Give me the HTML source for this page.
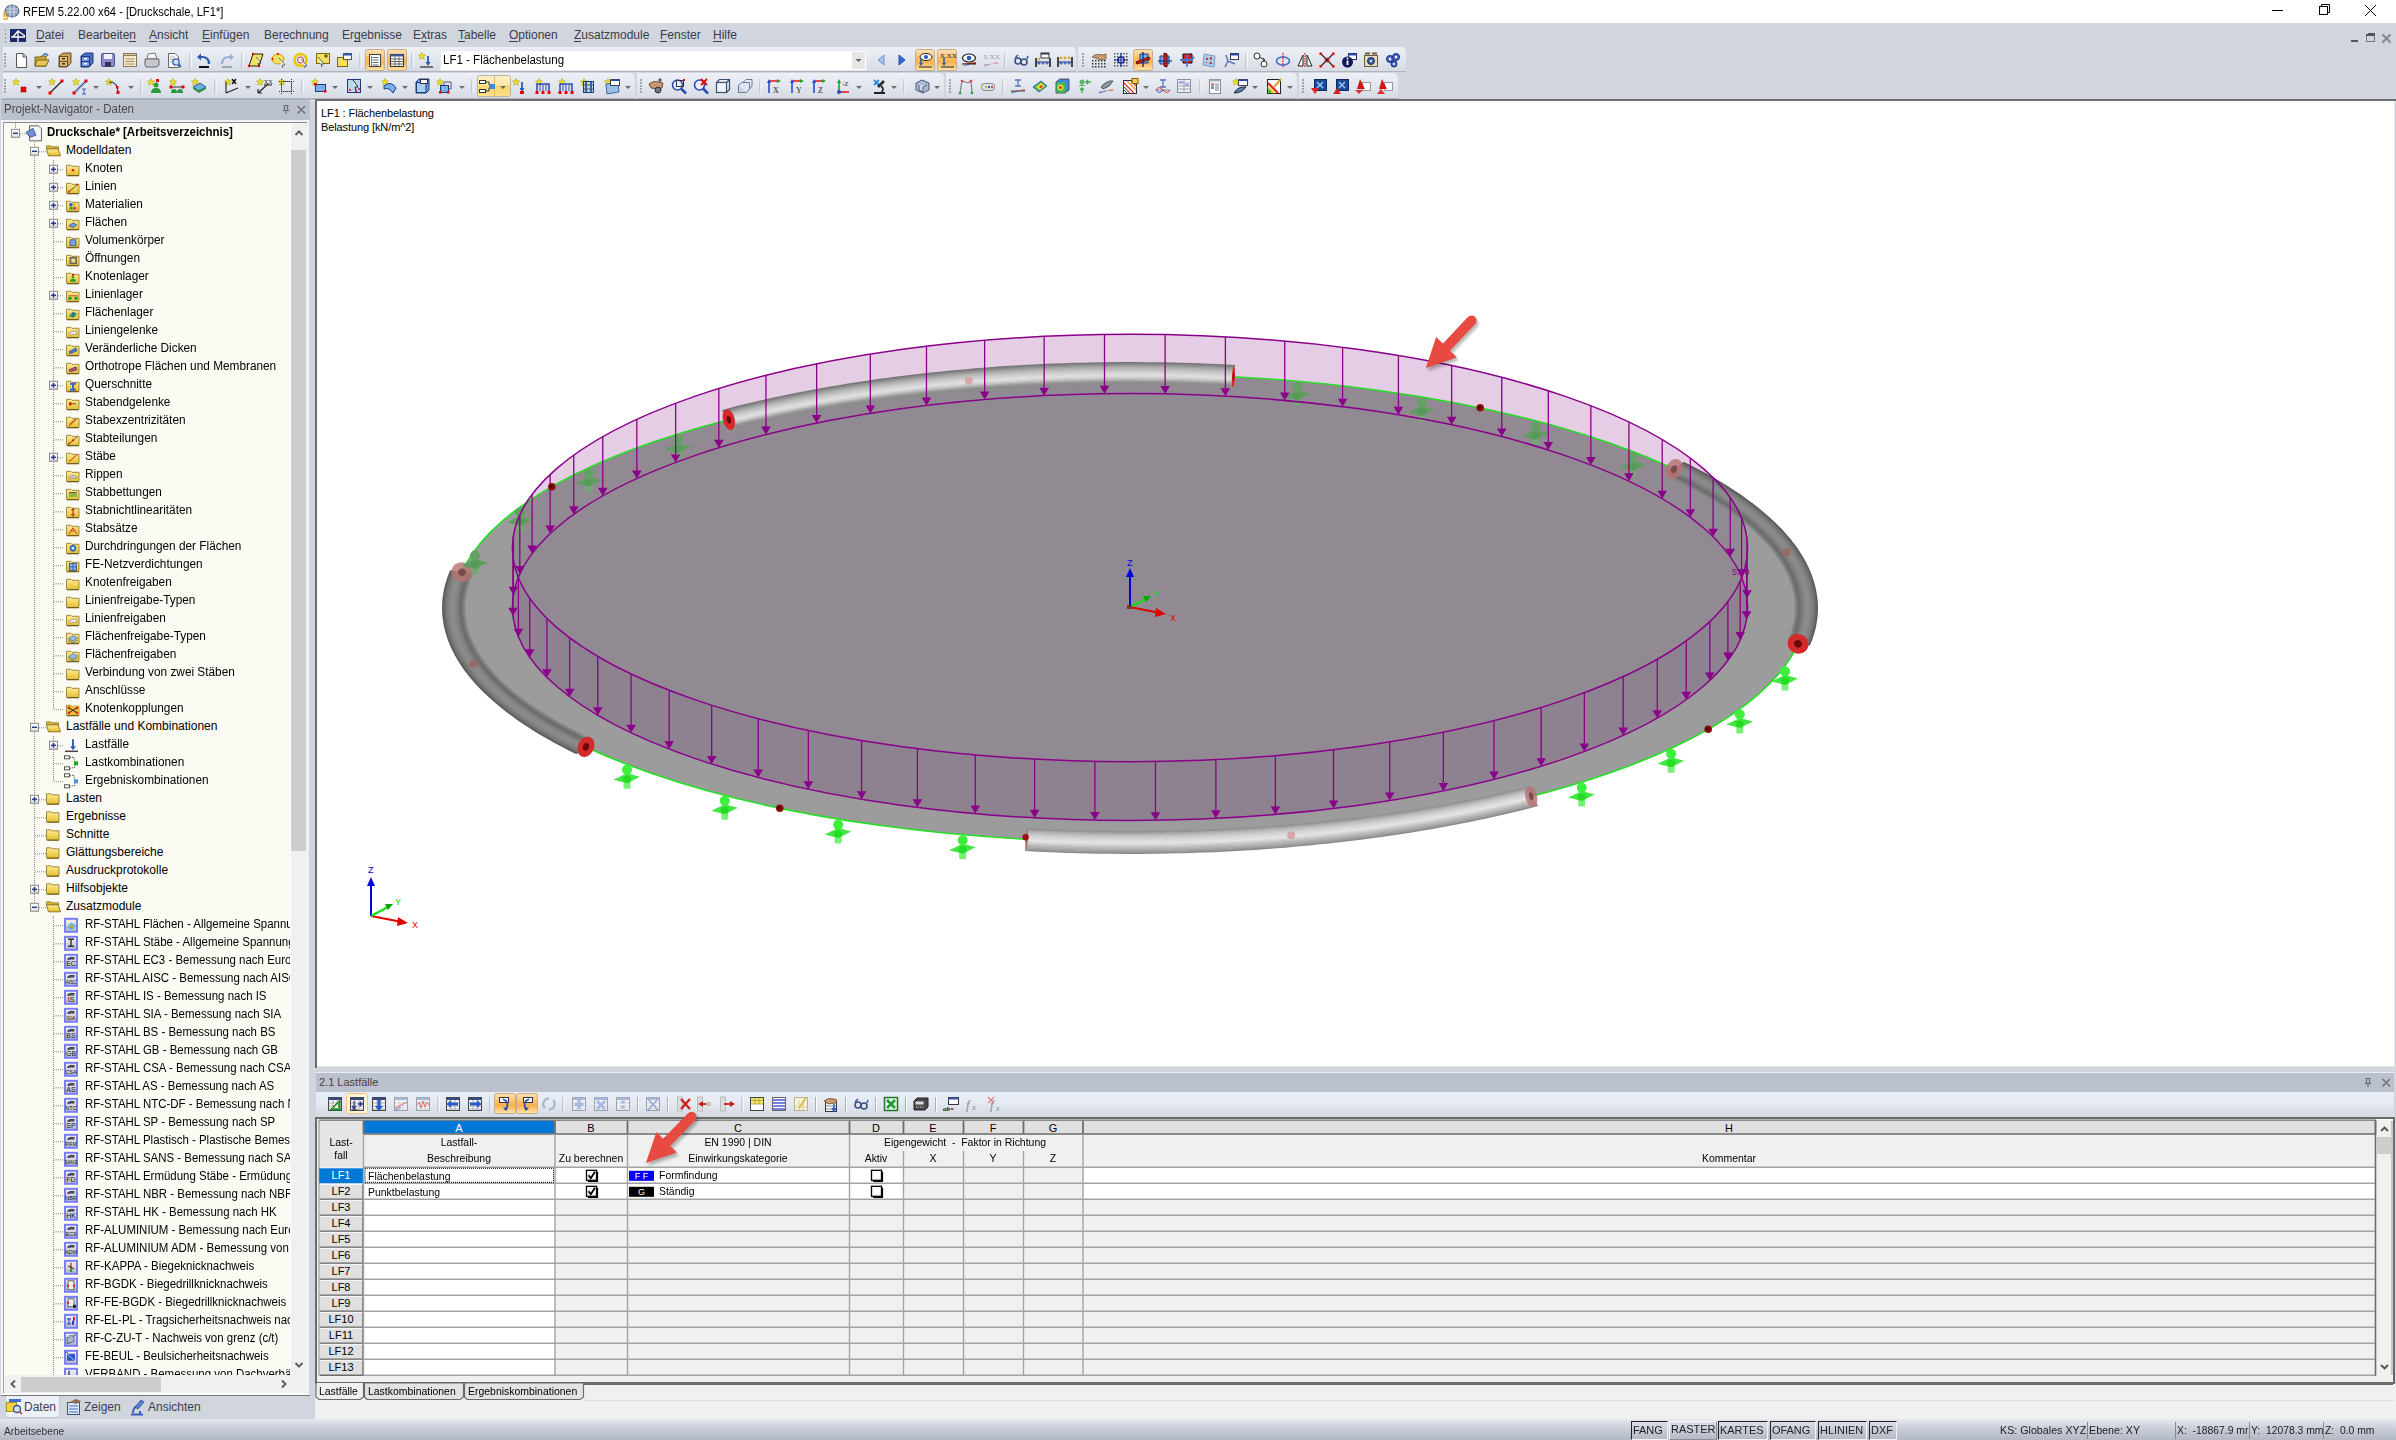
<!DOCTYPE html>
<html><head><meta charset="utf-8"><title>RFEM</title>
<style>
html,body{margin:0;padding:0;}
body{width:2396px;height:1440px;position:relative;overflow:hidden;background:#d0d5de;font-family:"Liberation Sans", sans-serif;}
.t{position:absolute;white-space:nowrap;}
svg{position:absolute;}
</style></head><body>
<div style="position:absolute;left:0px;top:0px;width:2396px;height:23px;background:#fff"></div><svg style="left:2px;top:3px" width="18" height="18" viewBox="0 0 18 18"><ellipse cx="10" cy="8" rx="7" ry="6" fill="#8aa0c0" stroke="#4a5a78" stroke-width="1"/><path d="M4 6 L16 6 M4 9 L16 9 M8 2 L8 14 M12 2 L12 14" stroke="#dfe6f0" stroke-width="0.8"/><text x="1" y="17" font-size="10" font-weight="bold" fill="#d9a520" font-family="Liberation Sans">5</text></svg><div class="t" style="left:23.00px;top:5.84px;font-size:12px;line-height:12px;color:#000;transform:scaleX(0.93);transform-origin:left">RFEM 5.22.00 x64 - [Druckschale, LF1*]</div><svg style="left:2260px;top:0px" width="136" height="23" viewBox="0 0 136 23"><path d="M12 10.5 H23" stroke="#000" stroke-width="1"/><rect x="59.5" y="6.5" width="8" height="8" fill="none" stroke="#000"/><path d="M61.5 6.5 V4.5 H69.5 V12.5 H67.5" fill="none" stroke="#000"/><path d="M105 5 L116 16 M116 5 L105 16" stroke="#000" stroke-width="1"/></svg><div style="position:absolute;left:0px;top:23px;width:2396px;height:24px;background:#d0d5de"></div><svg style="left:3px;top:28px" width="30" height="16" viewBox="0 0 30 16"><rect x="2" y="1" width="1" height="2" fill="#99a"/><rect x="2" y="5" width="1" height="2" fill="#99a"/><rect x="2" y="9" width="1" height="2" fill="#99a"/><rect x="2" y="13" width="1" height="2" fill="#99a"/><rect x="7" y="1" width="16" height="13" fill="#1c2a6a"/><path d="M8 9 H22 M15 3 V14 M10 9 L15 3 L22 8" stroke="#fff" stroke-width="1.3" fill="none"/></svg><div class="t" style="left:36.00px;top:28.84px;font-size:12px;line-height:12px;color:#3b3b4a;">Datei</div><div class="t" style="left:78.00px;top:28.84px;font-size:12px;line-height:12px;color:#3b3b4a;">Bearbeiten</div><div class="t" style="left:149.00px;top:28.84px;font-size:12px;line-height:12px;color:#3b3b4a;">Ansicht</div><div class="t" style="left:202.00px;top:28.84px;font-size:12px;line-height:12px;color:#3b3b4a;">Einfügen</div><div class="t" style="left:264.00px;top:28.84px;font-size:12px;line-height:12px;color:#3b3b4a;">Berechnung</div><div class="t" style="left:342.00px;top:28.84px;font-size:12px;line-height:12px;color:#3b3b4a;">Ergebnisse</div><div class="t" style="left:413.00px;top:28.84px;font-size:12px;line-height:12px;color:#3b3b4a;">Extras</div><div class="t" style="left:458.00px;top:28.84px;font-size:12px;line-height:12px;color:#3b3b4a;">Tabelle</div><div class="t" style="left:509.00px;top:28.84px;font-size:12px;line-height:12px;color:#3b3b4a;">Optionen</div><div class="t" style="left:574.00px;top:28.84px;font-size:12px;line-height:12px;color:#3b3b4a;">Zusatzmodule</div><div class="t" style="left:660.00px;top:28.84px;font-size:12px;line-height:12px;color:#3b3b4a;">Fenster</div><div class="t" style="left:713.00px;top:28.84px;font-size:12px;line-height:12px;color:#3b3b4a;">Hilfe</div><div style="position:absolute;left:36.0px;top:41px;width:8.7px;height:1px;background:#3b3b4a"></div><div style="position:absolute;left:129.4px;top:41px;width:6.7px;height:1px;background:#3b3b4a"></div><div style="position:absolute;left:149.0px;top:41px;width:8.0px;height:1px;background:#3b3b4a"></div><div style="position:absolute;left:202.0px;top:41px;width:8.0px;height:1px;background:#3b3b4a"></div><div style="position:absolute;left:278.7px;top:41px;width:4.0px;height:1px;background:#3b3b4a"></div><div style="position:absolute;left:354.0px;top:41px;width:6.7px;height:1px;background:#3b3b4a"></div><div style="position:absolute;left:421.0px;top:41px;width:6.0px;height:1px;background:#3b3b4a"></div><div style="position:absolute;left:458.0px;top:41px;width:7.3px;height:1px;background:#3b3b4a"></div><div style="position:absolute;left:509.0px;top:41px;width:9.3px;height:1px;background:#3b3b4a"></div><div style="position:absolute;left:574.0px;top:41px;width:7.3px;height:1px;background:#3b3b4a"></div><div style="position:absolute;left:660.0px;top:41px;width:7.3px;height:1px;background:#3b3b4a"></div><div style="position:absolute;left:713.0px;top:41px;width:8.7px;height:1px;background:#3b3b4a"></div><svg style="left:2345px;top:30px" width="50" height="16" viewBox="2345 30 50 16"><rect x="2351" y="40" width="7" height="2" fill="#555"/><rect x="2366.5" y="35.5" width="8" height="6" fill="none" stroke="#777"/><rect x="2366" y="34" width="9" height="2" fill="#555"/><rect x="2368" y="33" width="7" height="1.5" fill="#555"/><path d="M2382.5 34.5 L2390.5 42.5 M2390.5 34.5 L2382.5 42.5" stroke="#888" stroke-width="2"/></svg><div style="position:absolute;left:3px;top:47px;width:1073px;height:25px;background:linear-gradient(#edf0f6,#e2e6ee 50%,#d6dae3);border-radius:0 5px 0 0;box-shadow:inset 0 -1px 0 #aeb4be"></div><div style="position:absolute;left:1078px;top:47px;width:328px;height:25px;background:linear-gradient(#edf0f6,#e2e6ee 50%,#d6dae3);border-radius:0 5px 0 0;box-shadow:inset 0 -1px 0 #aeb4be"></div><div style="position:absolute;left:3px;top:73px;width:632px;height:26px;background:linear-gradient(#edf0f6,#e2e6ee 50%,#d6dae3);border-radius:0 5px 0 0;box-shadow:inset 0 -1px 0 #aeb4be"></div><div style="position:absolute;left:637px;top:73px;width:307px;height:26px;background:linear-gradient(#edf0f6,#e2e6ee 50%,#d6dae3);border-radius:0 5px 0 0;box-shadow:inset 0 -1px 0 #aeb4be"></div><div style="position:absolute;left:946px;top:73px;width:351px;height:26px;background:linear-gradient(#edf0f6,#e2e6ee 50%,#d6dae3);border-radius:0 5px 0 0;box-shadow:inset 0 -1px 0 #aeb4be"></div><div style="position:absolute;left:1299px;top:73px;width:99px;height:26px;background:linear-gradient(#edf0f6,#e2e6ee 50%,#d6dae3);border-radius:0 5px 0 0;box-shadow:inset 0 -1px 0 #aeb4be"></div><div style="position:absolute;left:0px;top:99px;width:315px;height:1px;background:#a9afb9"></div><div style="position:absolute;left:0px;top:100px;width:315px;height:1px;background:#eef2f8"></div><svg style="left:0;top:44px" width="1420" height="56" viewBox="0 44 1420 56"><defs><linearGradient id="hlgrad" x1="0" y1="0" x2="0" y2="1"><stop offset="0" stop-color="#fde2b8"/><stop offset="0.45" stop-color="#fbbd62"/><stop offset="0.6" stop-color="#f9b24c"/><stop offset="1" stop-color="#fde6ae"/></linearGradient></defs><rect x="365.5" y="49.5" width="19" height="21" rx="2" fill="url(#hlgrad)" stroke="#c9ad86"/><rect x="387.5" y="49.5" width="19" height="21" rx="2" fill="url(#hlgrad)" stroke="#c9ad86"/><rect x="915.5" y="49.5" width="19" height="21" rx="2" fill="url(#hlgrad)" stroke="#c9ad86"/><rect x="937.5" y="49.5" width="19" height="21" rx="2" fill="url(#hlgrad)" stroke="#c9ad86"/><rect x="1133.5" y="49.5" width="19" height="21" rx="2" fill="url(#hlgrad)" stroke="#c9ad86"/><defs><linearGradient id="hlgrad2" x1="0" y1="0" x2="0" y2="1"><stop offset="0" stop-color="#fdf0c8"/><stop offset="0.45" stop-color="#fde6a8"/><stop offset="0.5" stop-color="#fcd46a"/><stop offset="1" stop-color="#fde08a"/></linearGradient></defs><rect x="477.5" y="75.5" width="33" height="21" rx="2" fill="url(#hlgrad2)" stroke="#b8b4a8"/><path d="M494.5 76 V96" stroke="#e8b860"/><g transform="translate(-3,52)"><rect x="7" y="1" width="2" height="2" fill="#a0a6b2"/><rect x="7" y="4" width="2" height="2" fill="#a0a6b2"/><rect x="7" y="7" width="2" height="2" fill="#a0a6b2"/><rect x="7" y="10" width="2" height="2" fill="#a0a6b2"/><rect x="7" y="13" width="2" height="2" fill="#a0a6b2"/></g><g transform="translate(13,52)"><path d="M3.5 1.5 H10 L13.5 5 V15.5 H3.5 Z" fill="#fff" stroke="#555"/><path d="M10 1.5 V5 H13.5" fill="none" stroke="#555"/></g><g transform="translate(34,52)"><path d="M1 5 H6 L7 4 H12 V14 H1 Z" fill="#c9a73a" stroke="#7a6010"/><path d="M3 8 H15 L12 14 H1 Z" fill="#e6c95a" stroke="#7a6010"/><path d="M9 3 Q12 0 14 4" stroke="#3a70c0" stroke-width="1.5" fill="none"/></g><g transform="translate(57,52)"><path d="M2 4 L6 1 H14 V11 L10 15 H2 Z" fill="#c8a060" stroke="#6a5020"/><rect x="2.5" y="4.5" width="8" height="5" fill="#e2bc7a" stroke="#6a5020"/><rect x="2.5" y="9.5" width="8" height="5" fill="#e2bc7a" stroke="#6a5020"/><rect x="5" y="6" width="3" height="1.5" fill="#333"/><rect x="5" y="11" width="3" height="1.5" fill="#333"/></g><g transform="translate(79,52)"><path d="M2 4 L6 1 H14 V11 L10 15 H2 Z" fill="#4a6fc0" stroke="#203a80"/><rect x="2.5" y="4.5" width="8" height="5" fill="#7a9ae0" stroke="#203a80"/><rect x="2.5" y="9.5" width="8" height="5" fill="#7a9ae0" stroke="#203a80"/><rect x="5" y="6" width="3" height="1.5" fill="#fff"/><rect x="5" y="11" width="3" height="1.5" fill="#fff"/></g><g transform="translate(100,52)"><rect x="1.5" y="1.5" width="13" height="13" rx="1" fill="#8a88c8" stroke="#50508a"/><rect x="4" y="2" width="8" height="5" fill="#f0f0f8"/><rect x="5" y="10" width="6" height="4.5" fill="#30305a"/></g><g transform="translate(122,52)"><rect x="1.5" y="3.5" width="13" height="11" fill="#f4e8c8" stroke="#8a7a5a"/><rect x="1.5" y="1.5" width="13" height="2" fill="#d8c8a0" stroke="#8a7a5a"/><path d="M3.5 7 H12.5 M3.5 9.5 H12.5 M3.5 12 H12.5" stroke="#a09070"/></g><g transform="translate(144,52)"><path d="M4 2 L11 1 L13 7 H3 Z" fill="#f4f4f4" stroke="#777"/><path d="M1 7 H15 V13 L12 15 H2 L1 13 Z" fill="#c8c8d0" stroke="#666"/></g><g transform="translate(166,52)"><path d="M2.5 1.5 H9 L12.5 5 V15.5 H2.5 Z" fill="#fff" stroke="#666"/><path d="M4 5 H9 M4 7.5 H9 M4 10 H8" stroke="#aaa"/><circle cx="10" cy="10" r="3.2" fill="#cfe0f8" stroke="#3a5fb0" stroke-width="1.3"/><path d="M12.3 12.3 L15 15" stroke="#3a5fb0" stroke-width="2"/></g><g transform="translate(182,52)"><path d="M8 1 V16" stroke="#a8aeba"/><path d="M9 1 V16" stroke="#fff"/></g><g transform="translate(196,52)"><path d="M3 15 H13" stroke="#111" stroke-width="2"/><path d="M13 12 Q13 5 6 5 H4" fill="none" stroke="#2a58b0" stroke-width="2.2"/><path d="M1 5 L5 1.5 V8.5 Z" fill="#2a58b0"/></g><g transform="translate(219,52)"><path d="M3 15 H13" stroke="#9aa" stroke-width="2"/><path d="M3 12 Q3 5 10 5 H12" fill="none" stroke="#9ab0d8" stroke-width="2.2"/><path d="M15 5 L11 1.5 V8.5 Z" fill="#9ab0d8"/></g><g transform="translate(234,52)"><path d="M8 1 V16" stroke="#a8aeba"/><path d="M9 1 V16" stroke="#fff"/></g><g transform="translate(248,52)"><path d="M5 2 H15 L11 14 H1 Z" fill="#f4e060" stroke="#222"/><circle cx="5" cy="2" r="1.2" fill="#e00"/><circle cx="1" cy="14" r="1.2" fill="#e00"/><circle cx="11" cy="14" r="1.2" fill="#e00"/><path d="M8 5 L13 11 L10 11 L11 14" fill="#fff" stroke="#333" stroke-width="0.7"/></g><g transform="translate(271,52)"><ellipse cx="7" cy="7" rx="6" ry="5" fill="#f4e060" stroke="#c0a000"/><circle cx="7" cy="2" r="1" fill="#e00"/><circle cx="1.5" cy="7" r="1" fill="#e00"/><path d="M8 6 L14 13 L11 13 L12 16" fill="#fff" stroke="#333" stroke-width="0.7"/></g><g transform="translate(293,52)"><circle cx="7.5" cy="8" r="6" fill="none" stroke="#e8c800" stroke-width="2.5"/><circle cx="7.5" cy="8" r="3" fill="#fff" stroke="#c00" stroke-width="0.8"/><path d="M8 7 L14 14 L11 14 L12 16" fill="#fff" stroke="#333" stroke-width="0.7"/></g><g transform="translate(315,52)"><rect x="1.5" y="1.5" width="13" height="10" fill="#f4e060" stroke="#806a00"/><path d="M9 4 H13 M11 2 V6" stroke="#333"/><path d="M3 5 L9 12 L6 12 L7 15" fill="#fff" stroke="#333" stroke-width="0.8"/></g><g transform="translate(336,52)"><rect x="1.5" y="5.5" width="10" height="9" fill="#f4e060" stroke="#806a00"/><rect x="7.5" y="1.5" width="8" height="6" fill="#fff" stroke="#555"/><rect x="7.5" y="1.5" width="8" height="2" fill="#2a58b0"/></g><g transform="translate(352,52)"><path d="M8 1 V16" stroke="#a8aeba"/><path d="M9 1 V16" stroke="#fff"/></g><g transform="translate(367,52)"><rect x="2.5" y="2.5" width="11" height="12" fill="#fff" stroke="#444"/><path d="M5.5 5.5 H11.5 M5.5 8 H11.5 M5.5 10.5 H11.5 M5.5 13 H11.5" stroke="#555" stroke-width="0.9"/><path d="M4.5 4 V14" stroke="#555" stroke-width="0.8"/></g><g transform="translate(389,52)"><rect x="1.5" y="2.5" width="13" height="12" fill="#fff" stroke="#333"/><rect x="1.5" y="2.5" width="13" height="2" fill="#3a5fb0"/><path d="M2 7 H14 M2 9.5 H14 M2 12 H14 M6 5 V14 M10 5 V14" stroke="#666"/></g><g transform="translate(404,52)"><path d="M8 1 V16" stroke="#a8aeba"/><path d="M9 1 V16" stroke="#fff"/></g><g transform="translate(418,52)"><path d="M4 0.5 L5 3 L7.5 3 L5.5 4.6 L6.3 7.2 L4 5.6 L1.7 7.2 L2.5 4.6 L0.5 3 L3 3 Z" fill="#f5e61a" stroke="#b0a000" stroke-width="0.6"/><path d="M10 4 V11" stroke="#2a58b0" stroke-width="1.8"/><path d="M7.5 10 L10 14 L12.5 10 Z" fill="#2a58b0"/><path d="M2 15 H15" stroke="#333" stroke-width="1.3"/></g><g transform="translate(873,52)"><path d="M11 3 L5 8 L11 13 Z" fill="#a8c0f0" stroke="#7090d0"/></g><g transform="translate(894,52)"><path d="M5 3 L11 8 L5 13 Z" fill="#3a6ad8" stroke="#2050b0"/></g><g transform="translate(917,52)"><ellipse cx="9" cy="5" rx="6" ry="3.5" fill="#fff" stroke="#222"/><circle cx="9" cy="5" r="2" fill="#2a58b0"/><path d="M4 6 V12" stroke="#2a58b0" stroke-width="1.5"/><path d="M2 11 L4 14 L6 11 Z" fill="#2a58b0"/><path d="M2 15 H15" stroke="#222"/></g><g transform="translate(939,52)"><text x="1" y="6" font-size="7" font-family="Liberation Serif" fill="#222">X.XX</text><path d="M5 6 V12" stroke="#2a58b0" stroke-width="1.5"/><path d="M3 11 L5 14 L7 11 Z" fill="#2a58b0"/><path d="M2 15 H15" stroke="#222"/></g><g transform="translate(961,52)"><ellipse cx="8" cy="6" rx="6.5" ry="4" fill="#fff" stroke="#222" stroke-width="1.2"/><circle cx="8" cy="6" r="2.3" fill="#2a58b0"/><path d="M1 12 L15 10 V12 H1" fill="#d02020"/><path d="M1 14 L8 12 V13 Z" fill="#2a3ad0"/><path d="M1 12 H15" stroke="#222"/></g><g transform="translate(983,52)"><text x="0" y="7" font-size="7" font-family="Liberation Serif" fill="#999">X.XX</text><path d="M1 14 L15 10 V12 H1" fill="#e0a0a8"/><path d="M1 14 L8 12" stroke="#a0a8e0"/></g><g transform="translate(997,52)"><path d="M8 1 V16" stroke="#a8aeba"/><path d="M9 1 V16" stroke="#fff"/></g><g transform="translate(1013,52)"><circle cx="5" cy="9" r="3" fill="none" stroke="#3a5080" stroke-width="1.6"/><circle cx="11" cy="10" r="3" fill="none" stroke="#3a5080" stroke-width="1.6"/><path d="M2 6 L5 3 M14 7 L15 4 M8 9 H8.5" stroke="#3a5080" stroke-width="1.4"/></g><g transform="translate(1035,52)"><rect x="6" y="1" width="8" height="5" fill="#fff" stroke="#334"/><rect x="6" y="1" width="8" height="1.5" fill="#334"/><path d="M1 15 V6 M15 15 V6" stroke="#111" stroke-width="1.5"/><path d="M1 10 H15" stroke="#334"/><circle cx="4" cy="11" r="1.5" fill="#4a6ad0"/><circle cx="8" cy="11" r="1.5" fill="#4a6ad0"/><circle cx="12" cy="11" r="1.5" fill="#4a6ad0"/><circle cx="4" cy="7" r="1.3" fill="#d0b040"/></g><g transform="translate(1057,52)"><path d="M1 15 V5 M15 15 V5" stroke="#111" stroke-width="1.5"/><path d="M1 10 H15" stroke="#334"/><circle cx="4" cy="11" r="1.5" fill="#4a6ad0"/><circle cx="8" cy="11" r="1.5" fill="#4a6ad0"/><circle cx="12" cy="11" r="1.5" fill="#4a6ad0"/><circle cx="4" cy="6" r="1.4" fill="#d0b040"/><circle cx="8" cy="6" r="1.4" fill="#d0b040"/><circle cx="12" cy="6" r="1.4" fill="#d0b040"/></g><g transform="translate(1075,52)"><rect x="7" y="1" width="2" height="2" fill="#a0a6b2"/><rect x="7" y="4" width="2" height="2" fill="#a0a6b2"/><rect x="7" y="7" width="2" height="2" fill="#a0a6b2"/><rect x="7" y="10" width="2" height="2" fill="#a0a6b2"/><rect x="7" y="13" width="2" height="2" fill="#a0a6b2"/></g><g transform="translate(1091,52)"><rect x="1" y="8" width="1.5" height="1.5" fill="#333"/><rect x="1" y="11" width="1.5" height="1.5" fill="#333"/><rect x="1" y="14" width="1.5" height="1.5" fill="#333"/><rect x="4" y="8" width="1.5" height="1.5" fill="#333"/><rect x="4" y="11" width="1.5" height="1.5" fill="#333"/><rect x="4" y="14" width="1.5" height="1.5" fill="#333"/><rect x="7" y="8" width="1.5" height="1.5" fill="#333"/><rect x="7" y="11" width="1.5" height="1.5" fill="#333"/><rect x="7" y="14" width="1.5" height="1.5" fill="#333"/><rect x="10" y="8" width="1.5" height="1.5" fill="#333"/><rect x="10" y="11" width="1.5" height="1.5" fill="#333"/><rect x="10" y="14" width="1.5" height="1.5" fill="#333"/><rect x="13" y="8" width="1.5" height="1.5" fill="#333"/><rect x="13" y="11" width="1.5" height="1.5" fill="#333"/><rect x="13" y="14" width="1.5" height="1.5" fill="#333"/><path d="M1 5 Q5 1 12 3 L15 2 V7 L10 8 Z" fill="#c89a70" stroke="#6a4a30" stroke-width="0.7"/></g><g transform="translate(1113,52)"><rect x="1" y="1" width="1.5" height="1.5" fill="#555"/><rect x="1" y="4" width="1.5" height="1.5" fill="#555"/><rect x="1" y="7" width="1.5" height="1.5" fill="#555"/><rect x="1" y="10" width="1.5" height="1.5" fill="#555"/><rect x="1" y="13" width="1.5" height="1.5" fill="#555"/><rect x="4" y="1" width="1.5" height="1.5" fill="#555"/><rect x="4" y="4" width="1.5" height="1.5" fill="#555"/><rect x="4" y="7" width="1.5" height="1.5" fill="#555"/><rect x="4" y="10" width="1.5" height="1.5" fill="#555"/><rect x="4" y="13" width="1.5" height="1.5" fill="#555"/><rect x="7" y="1" width="1.5" height="1.5" fill="#555"/><rect x="7" y="4" width="1.5" height="1.5" fill="#555"/><rect x="7" y="7" width="1.5" height="1.5" fill="#555"/><rect x="7" y="10" width="1.5" height="1.5" fill="#555"/><rect x="7" y="13" width="1.5" height="1.5" fill="#555"/><rect x="10" y="1" width="1.5" height="1.5" fill="#555"/><rect x="10" y="4" width="1.5" height="1.5" fill="#555"/><rect x="10" y="7" width="1.5" height="1.5" fill="#555"/><rect x="10" y="10" width="1.5" height="1.5" fill="#555"/><rect x="10" y="13" width="1.5" height="1.5" fill="#555"/><rect x="13" y="1" width="1.5" height="1.5" fill="#555"/><rect x="13" y="4" width="1.5" height="1.5" fill="#555"/><rect x="13" y="7" width="1.5" height="1.5" fill="#555"/><rect x="13" y="10" width="1.5" height="1.5" fill="#555"/><rect x="13" y="13" width="1.5" height="1.5" fill="#555"/><circle cx="8" cy="8" r="3" fill="#fff" stroke="#1a2a90" stroke-width="1.5"/><path d="M8 1 V15 M1 8 H15" stroke="#1a2a90" stroke-width="1.2"/></g><g transform="translate(1135,52)"><path d="M5 2 H13 V11 H5 Z" fill="#7ab0e8" stroke="#1a3a80"/><path d="M1 10 L14 5 L15 7 L2 12 Z" fill="#e02020" stroke="#600"/><path d="M8 0 V15" stroke="#1a3a80" stroke-width="1.5"/></g><g transform="translate(1157,52)"><path d="M3 4 H12 V12 H3 Z" fill="#7ab0e8" stroke="#1a3a80"/><path d="M7 1 L10 2 V15 L7 14 Z" fill="#e02020" stroke="#500"/><path d="M1 9 H15" stroke="#1a3a80" stroke-width="1.3"/></g><g transform="translate(1179,52)"><path d="M4 2 H13 V11 H4 Z" fill="#e02020" stroke="#300"/><path d="M1 8 L12 8 L15 5" stroke="#3a7ad0" stroke-width="2" fill="none"/><path d="M8 2 V15" stroke="#3a7ad0" stroke-width="1.5"/></g><g transform="translate(1201,52)"><path d="M3 2 L14 4 L13 15 L2 13 Z" fill="#b8d8f0" stroke="#7a9ac0"/><path d="M6 2.5 L5 13.5 M10 3 L9 14 M2.5 6 L13.5 8 M2.3 10 L13.3 12" stroke="#7a9ac0" stroke-width="0.7"/><circle cx="6" cy="7" r="1" fill="#e00"/><circle cx="10" cy="11" r="1" fill="#e00"/><circle cx="10" cy="6" r="1" fill="#e00"/></g><g transform="translate(1223,52)"><rect x="7.5" y="1.5" width="8" height="6" fill="#fff" stroke="#334"/><rect x="7.5" y="1.5" width="8" height="2" fill="#2a4ab0"/><path d="M2 15 L5 9 L12 12 M5 9 L3 3" stroke="#5a7ab0" stroke-width="1.5" fill="none"/></g><g transform="translate(1238,52)"><path d="M8 1 V16" stroke="#a8aeba"/><path d="M9 1 V16" stroke="#fff"/></g><g transform="translate(1253,52)"><circle cx="4" cy="4" r="3" fill="#fff" stroke="#333"/><circle cx="11" cy="12" r="3" fill="#fff" stroke="#333"/><path d="M6 5 L12 8 M10 6 L12 8 L10 9" stroke="#333" fill="none"/></g><g transform="translate(1275,52)"><ellipse cx="8" cy="9" rx="6.5" ry="4" fill="none" stroke="#3a70d0" stroke-width="1.6"/><path d="M8 1 V16" stroke="#e00" stroke-dasharray="1.5 1" stroke-width="1.2"/></g><g transform="translate(1297,52)"><path d="M6 3 L1 14 H6 Z M10 3 L15 14 H10 Z" fill="#fff" stroke="#222"/><path d="M8 1 V16" stroke="#e00" stroke-dasharray="1.5 1" stroke-width="1.2"/></g><g transform="translate(1319,52)"><path d="M2 2 L14 14 M14 2 L2 14" stroke="#222" stroke-width="1.3"/><circle cx="8" cy="8" r="2" fill="none" stroke="#d00"/><rect x="0.5" y="0.5" width="2.5" height="2.5" fill="#e00"/><rect x="13" y="0.5" width="2.5" height="2.5" fill="#e00"/><rect x="0.5" y="13" width="2.5" height="2.5" fill="#e00"/><rect x="13" y="13" width="2.5" height="2.5" fill="#e00"/></g><g transform="translate(1341,52)"><rect x="7.5" y="1.5" width="8" height="6" fill="#fff" stroke="#334"/><rect x="7.5" y="1.5" width="8" height="2" fill="#2a4ab0"/><circle cx="6.5" cy="10" r="5.5" fill="#101a5a"/><path d="M6.5 8.5 V13" stroke="#fff" stroke-width="1.8"/><circle cx="6.5" cy="6.5" r="1" fill="#fff"/></g><g transform="translate(1363,52)"><rect x="1.5" y="3.5" width="13" height="11" fill="#e8dcc0" stroke="#6a5a3a"/><path d="M2 1.5 H7 M9 1.5 H14" stroke="#6a5a3a" stroke-width="2"/><circle cx="8" cy="9" r="3.5" fill="#3a5ab0" stroke="#1a2a60"/><circle cx="8" cy="9" r="1.3" fill="#e8dcc0"/></g><g transform="translate(1385,52)"><circle cx="5" cy="7" r="3.5" fill="#4a6ad0" stroke="#1a2a70"/><circle cx="11" cy="5" r="3.5" fill="#4a6ad0" stroke="#1a2a70"/><circle cx="9" cy="12" r="3" fill="#4a6ad0" stroke="#1a2a70"/><circle cx="5" cy="7" r="1.2" fill="#fff"/><circle cx="11" cy="5" r="1.2" fill="#fff"/><circle cx="9" cy="12" r="1" fill="#fff"/></g><g transform="translate(-3,78)"><rect x="7" y="1" width="2" height="2" fill="#a0a6b2"/><rect x="7" y="4" width="2" height="2" fill="#a0a6b2"/><rect x="7" y="7" width="2" height="2" fill="#a0a6b2"/><rect x="7" y="10" width="2" height="2" fill="#a0a6b2"/><rect x="7" y="13" width="2" height="2" fill="#a0a6b2"/></g><g transform="translate(12,78)"><path d="M4 0.5 L5 3 L7.5 3 L5.5 4.6 L6.3 7.2 L4 5.6 L1.7 7.2 L2.5 4.6 L0.5 3 L3 3 Z" fill="#f5e61a" stroke="#b0a000" stroke-width="0.6"/><rect x="9" y="9" width="5" height="5" fill="#e00" stroke="#800" stroke-width="0.5"/></g><g transform="translate(31,78)"><path d="M5 8 H11 L8 11 Z" fill="#6a6a6a"/></g><g transform="translate(48,78)"><path d="M4 0.5 L5 3 L7.5 3 L5.5 4.6 L6.3 7.2 L4 5.6 L1.7 7.2 L2.5 4.6 L0.5 3 L3 3 Z" fill="#f5e61a" stroke="#b0a000" stroke-width="0.6"/><path d="M2 15 L14 3" stroke="#222" stroke-width="1.2"/><rect x="0.5" y="13.5" width="3" height="3" fill="#e00"/><rect x="12.5" y="1.5" width="3" height="3" fill="#e00"/></g><g transform="translate(72,78)"><path d="M4 0.5 L5 3 L7.5 3 L5.5 4.6 L6.3 7.2 L4 5.6 L1.7 7.2 L2.5 4.6 L0.5 3 L3 3 Z" fill="#f5e61a" stroke="#b0a000" stroke-width="0.6"/><path d="M2 15 L14 3" stroke="#9ab0e0" stroke-width="3"/><path d="M2 15 L14 3" stroke="#334" stroke-width="0.8"/><rect x="0.5" y="13.5" width="3" height="3" fill="#e00"/><rect x="12.5" y="1.5" width="3" height="3" fill="#e00"/><path d="M10 11 H14 M12 11 V16 M10 16 H14" stroke="#3a5ab0"/></g><g transform="translate(88,78)"><path d="M5 8 H11 L8 11 Z" fill="#6a6a6a"/></g><g transform="translate(105,78)"><path d="M4 0.5 L5 3 L7.5 3 L5.5 4.6 L6.3 7.2 L4 5.6 L1.7 7.2 L2.5 4.6 L0.5 3 L3 3 Z" fill="#f5e61a" stroke="#b0a000" stroke-width="0.6"/><path d="M4 4 Q13 4 13 14" stroke="#222" fill="none" stroke-width="1.2"/><rect x="11.5" y="13" width="3" height="3" fill="#e00"/><rect x="11" y="8" width="2.5" height="2.5" fill="#e00"/></g><g transform="translate(123,78)"><path d="M5 8 H11 L8 11 Z" fill="#6a6a6a"/></g><g transform="translate(133,78)"><path d="M8 1 V16" stroke="#a8aeba"/><path d="M9 1 V16" stroke="#fff"/></g><g transform="translate(147,78)"><path d="M4 0.5 L5 3 L7.5 3 L5.5 4.6 L6.3 7.2 L4 5.6 L1.7 7.2 L2.5 4.6 L0.5 3 L3 3 Z" fill="#f5e61a" stroke="#b0a000" stroke-width="0.6"/><circle cx="9" cy="7" r="2.5" fill="#2a9a3a"/><path d="M4 15 Q4 10 9 10 Q14 10 14 15 Z" fill="#2a9a3a"/><rect x="9" y="1" width="3" height="3" fill="#e00"/></g><g transform="translate(169,78)"><path d="M4 0.5 L5 3 L7.5 3 L5.5 4.6 L6.3 7.2 L4 5.6 L1.7 7.2 L2.5 4.6 L0.5 3 L3 3 Z" fill="#f5e61a" stroke="#b0a000" stroke-width="0.6"/><path d="M2 9 H14" stroke="#333"/><rect x="0.5" y="7.5" width="3" height="3" fill="#e00"/><rect x="12.5" y="7.5" width="3" height="3" fill="#e00"/><path d="M2 15 Q2 11 5 11 Q8 11 8 15 Z M8 15 Q8 11 11 11 Q14 11 14 15 Z" fill="#2a9a3a"/></g><g transform="translate(191,78)"><path d="M4 0.5 L5 3 L7.5 3 L5.5 4.6 L6.3 7.2 L4 5.6 L1.7 7.2 L2.5 4.6 L0.5 3 L3 3 Z" fill="#f5e61a" stroke="#b0a000" stroke-width="0.6"/><path d="M2 9 L9 5 L15 9 L8 13 Z" fill="#6ab0e0" stroke="#2a5a90"/><path d="M2 9 L8 13 V15 L2 11 Z M8 13 L15 9 V11 L8 15 Z" fill="#2a9a3a"/></g><g transform="translate(207,78)"><path d="M8 1 V16" stroke="#a8aeba"/><path d="M9 1 V16" stroke="#fff"/></g><g transform="translate(224,78)"><path d="M4 0.5 L5 3 L7.5 3 L5.5 4.6 L6.3 7.2 L4 5.6 L1.7 7.2 L2.5 4.6 L0.5 3 L3 3 Z" fill="#f5e61a" stroke="#b0a000" stroke-width="0.6"/><path d="M2 15 V4 M2 15 L14 10" stroke="#222" stroke-width="1.1"/><path d="M8 1 L12 6 M12 1 L8 6" stroke="#111" stroke-width="1.5"/></g><g transform="translate(240,78)"><path d="M5 8 H11 L8 11 Z" fill="#6a6a6a"/></g><g transform="translate(256,78)"><path d="M4 0.5 L5 3 L7.5 3 L5.5 4.6 L6.3 7.2 L4 5.6 L1.7 7.2 L2.5 4.6 L0.5 3 L3 3 Z" fill="#f5e61a" stroke="#b0a000" stroke-width="0.6"/><path d="M2 15 L12 6 M2 15 V11 M2 15 H6 M8 7 H16" stroke="#222" stroke-width="1.1" fill="none"/><text x="8" y="6" font-size="6" font-family="Liberation Serif" fill="#222">XX</text></g><g transform="translate(278,78)"><path d="M4 0.5 L5 3 L7.5 3 L5.5 4.6 L6.3 7.2 L4 5.6 L1.7 7.2 L2.5 4.6 L0.5 3 L3 3 Z" fill="#f5e61a" stroke="#b0a000" stroke-width="0.6"/><rect x="3.5" y="3.5" width="10" height="10" fill="none" stroke="#333" stroke-dasharray="1 1"/><path d="M1 3.5 H16 M1 13.5 H16 M3.5 1 V16 M13.5 1 V16" stroke="#333" stroke-dasharray="1 1"/></g><g transform="translate(294,78)"><path d="M8 1 V16" stroke="#a8aeba"/><path d="M9 1 V16" stroke="#fff"/></g><g transform="translate(311,78)"><path d="M4 0.5 L5 3 L7.5 3 L5.5 4.6 L6.3 7.2 L4 5.6 L1.7 7.2 L2.5 4.6 L0.5 3 L3 3 Z" fill="#f5e61a" stroke="#b0a000" stroke-width="0.6"/><rect x="4.5" y="6.5" width="10" height="7" fill="#7ab0e8" stroke="#1a3a80"/><rect x="3" y="5" width="2.5" height="2.5" fill="#e00"/><rect x="13" y="12" width="2.5" height="2.5" fill="#e00"/></g><g transform="translate(327,78)"><path d="M5 8 H11 L8 11 Z" fill="#6a6a6a"/></g><g transform="translate(346,78)"><rect x="1.5" y="1.5" width="13" height="13" fill="#b8d8f0" stroke="#1a3a80"/><path d="M7 2 L12 9 L9 9 L10 13" fill="#fff" stroke="#222"/><circle cx="4" cy="12" r="1" fill="#e00"/><circle cx="10" cy="13" r="1" fill="#e00"/><circle cx="13" cy="11" r="1" fill="#e00"/></g><g transform="translate(362,78)"><path d="M5 8 H11 L8 11 Z" fill="#6a6a6a"/></g><g transform="translate(381,78)"><path d="M4 0.5 L5 3 L7.5 3 L5.5 4.6 L6.3 7.2 L4 5.6 L1.7 7.2 L2.5 4.6 L0.5 3 L3 3 Z" fill="#f5e61a" stroke="#b0a000" stroke-width="0.6"/><path d="M3 8 Q10 2 15 10 L12 15 Q8 9 3 11 Z" fill="#7ab0e8" stroke="#1a3a80"/></g><g transform="translate(397,78)"><path d="M5 8 H11 L8 11 Z" fill="#6a6a6a"/></g><g transform="translate(414,78)"><path d="M2 4 L5 1 H15 V12 L12 15 H2 Z" fill="#6aa0e0" stroke="#1a3a80"/><rect x="2.5" y="4.5" width="9.5" height="10" fill="#a8cdf0" stroke="#1a3a80"/><rect x="6.5" y="1.5" width="7" height="4" fill="#fff" stroke="#334"/></g><g transform="translate(436,78)"><path d="M4 0.5 L5 3 L7.5 3 L5.5 4.6 L6.3 7.2 L4 5.6 L1.7 7.2 L2.5 4.6 L0.5 3 L3 3 Z" fill="#f5e61a" stroke="#b0a000" stroke-width="0.6"/><rect x="4.5" y="7.5" width="8" height="7" fill="#7ab0e8" stroke="#1a3a80"/><path d="M8 7 V4 H15 V11 H13" fill="none" stroke="#556"/><rect x="3" y="13" width="2.5" height="2.5" fill="#e00"/><rect x="11" y="13" width="2.5" height="2.5" fill="#e00"/></g><g transform="translate(454,78)"><path d="M5 8 H11 L8 11 Z" fill="#6a6a6a"/></g><g transform="translate(464,78)"><path d="M8 1 V16" stroke="#a8aeba"/><path d="M9 1 V16" stroke="#fff"/></g><g transform="translate(479,78)"><rect x="0.5" y="2.5" width="6" height="3" fill="#fff" stroke="#333"/><rect x="0.5" y="11.5" width="6" height="3" fill="#fff" stroke="#333"/><path d="M7 4 H10 V7 M7 13 H10 V10" stroke="#333" fill="none"/><rect x="10" y="6" width="6" height="5" fill="#3a8ae0"/></g><g transform="translate(495,78)"><path d="M5 8 H11 L8 11 Z" fill="#6a6a6a"/></g><g transform="translate(512,78)"><path d="M4 0.5 L5 3 L7.5 3 L5.5 4.6 L6.3 7.2 L4 5.6 L1.7 7.2 L2.5 4.6 L0.5 3 L3 3 Z" fill="#f5e61a" stroke="#b0a000" stroke-width="0.6"/><path d="M10 4 V11" stroke="#2a58b0" stroke-width="1.8"/><path d="M7.5 10 L10 14 L12.5 10 Z" fill="#2a58b0"/><rect x="8" y="13" width="4" height="3" fill="#e00"/></g><g transform="translate(535,78)"><path d="M4 0.5 L5 3 L7.5 3 L5.5 4.6 L6.3 7.2 L4 5.6 L1.7 7.2 L2.5 4.6 L0.5 3 L3 3 Z" fill="#f5e61a" stroke="#b0a000" stroke-width="0.6"/><path d="M2 15 V6 H14 V15" stroke="#2a4ab0" stroke-width="1.5" fill="none"/><path d="M5 7 V13 M8 7 V13 M11 7 V13" stroke="#2a4ab0"/><rect x="0.5" y="13" width="3" height="3" fill="#e00"/><rect x="12.5" y="13" width="3" height="3" fill="#e00"/><rect x="6.5" y="13" width="3" height="3" fill="#e00"/></g><g transform="translate(558,78)"><path d="M4 0.5 L5 3 L7.5 3 L5.5 4.6 L6.3 7.2 L4 5.6 L1.7 7.2 L2.5 4.6 L0.5 3 L3 3 Z" fill="#f5e61a" stroke="#b0a000" stroke-width="0.6"/><path d="M2 15 V6 H14 V15" stroke="#2a4ab0" stroke-width="1.5" fill="none"/><path d="M5 7 V13 M8 7 V13 M11 7 V13" stroke="#2a4ab0"/><rect x="0.5" y="13" width="3" height="3" fill="#e00"/><rect x="12.5" y="13" width="3" height="3" fill="#e00"/><rect x="6.5" y="13" width="3" height="3" fill="#e00"/></g><g transform="translate(580,78)"><path d="M4 0.5 L5 3 L7.5 3 L5.5 4.6 L6.3 7.2 L4 5.6 L1.7 7.2 L2.5 4.6 L0.5 3 L3 3 Z" fill="#f5e61a" stroke="#b0a000" stroke-width="0.6"/><rect x="3.5" y="3.5" width="10" height="11" fill="#b8d8f0" stroke="#1a3a80"/><path d="M6 4 V14 M11 4 V14" stroke="#1a3a80" stroke-width="1.5"/><path d="M4 7 H13 M4 11 H13" stroke="#556"/></g><g transform="translate(604,78)"><path d="M4 0.5 L5 3 L7.5 3 L5.5 4.6 L6.3 7.2 L4 5.6 L1.7 7.2 L2.5 4.6 L0.5 3 L3 3 Z" fill="#f5e61a" stroke="#b0a000" stroke-width="0.6"/><path d="M2 6 L14 4 L15 14 L3 16 Z" fill="#9ac0e8" stroke="#3a6ab0"/><rect x="6.5" y="1.5" width="9" height="6" fill="#fff" stroke="#445"/><rect x="6.5" y="1.5" width="9" height="1.5" fill="#2a4ab0"/></g><g transform="translate(620,78)"><path d="M5 8 H11 L8 11 Z" fill="#6a6a6a"/></g><g transform="translate(633,78)"><rect x="7" y="1" width="2" height="2" fill="#a0a6b2"/><rect x="7" y="4" width="2" height="2" fill="#a0a6b2"/><rect x="7" y="7" width="2" height="2" fill="#a0a6b2"/><rect x="7" y="10" width="2" height="2" fill="#a0a6b2"/><rect x="7" y="13" width="2" height="2" fill="#a0a6b2"/></g><g transform="translate(648,78)"><path d="M1 6 Q5 2 11 4 L15 5 L14 10 L9 11 L3 10 Z" fill="#c89a70" stroke="#5a3a20" stroke-width="0.8"/><circle cx="10" cy="12" r="3" fill="#777" stroke="#333"/><path d="M12 4 V0 M10 2 H14" stroke="#333"/></g><g transform="translate(671,78)"><circle cx="6.5" cy="7" r="5" fill="#e8f0fa" stroke="#2a4ab0" stroke-width="1.6"/><path d="M10 10.5 L15 15.5" stroke="#2a4ab0" stroke-width="2.5"/><rect x="5.5" y="2.5" width="7" height="6" fill="none" stroke="#334"/><rect x="12" y="1" width="2" height="2" fill="#e00"/></g><g transform="translate(693,78)"><circle cx="6.5" cy="7" r="5" fill="#e8f0fa" stroke="#2a4ab0" stroke-width="1.6"/><path d="M10 10.5 L15 15.5" stroke="#2a4ab0" stroke-width="2.5"/><path d="M8 1 L14 7 M14 1 L8 7" stroke="#e00" stroke-width="1.8"/></g><g transform="translate(715,78)"><rect x="1.5" y="4.5" width="10" height="10" fill="#f0f4fa" stroke="#3a5070" stroke-width="1.2"/><path d="M1.5 4.5 L4.5 1.5 H14.5 V11.5 L11.5 14.5 M11.5 4.5 L14.5 1.5" fill="none" stroke="#3a5070" stroke-width="1.2"/></g><g transform="translate(737,78)"><rect x="1.5" y="7.5" width="8" height="7" fill="#c8d4e8" stroke="#6a7a98"/><path d="M1.5 7.5 L4.5 4.5 H12.5 V11 L9.5 14.5" fill="#dde6f2" stroke="#6a7a98"/><path d="M6 4.5 L9 1.5 H15 V8 L12.5 11" fill="none" stroke="#6a7a98"/></g><g transform="translate(752,78)"><path d="M8 1 V16" stroke="#a8aeba"/><path d="M9 1 V16" stroke="#fff"/></g><g transform="translate(766,78)"><path d="M3 15 V3" stroke="#2a4ad0" stroke-width="1.6"/><path d="M3 3 H12" stroke="#e02020" stroke-width="1.6"/><path d="M1 5 L3 1 L5 5 Z" fill="#2a4ad0"/><path d="M11 1 L15 3 L11 5 Z" fill="#20a020"/><text x="7" y="15" font-size="8" font-family="Liberation Serif" fill="#222">X</text></g><g transform="translate(789,78)"><path d="M3 15 V3" stroke="#2a4ad0" stroke-width="1.6"/><path d="M3 3 H12" stroke="#e02020" stroke-width="1.6"/><path d="M1 5 L3 1 L5 5 Z" fill="#2a4ad0"/><path d="M11 1 L15 3 L11 5 Z" fill="#20a020"/><text x="7" y="15" font-size="8" font-family="Liberation Serif" fill="#222">Y</text></g><g transform="translate(811,78)"><path d="M3 15 V3" stroke="#2a4ad0" stroke-width="1.6"/><path d="M3 3 H12" stroke="#e02020" stroke-width="1.6"/><path d="M1 5 L3 1 L5 5 Z" fill="#2a4ad0"/><path d="M11 1 L15 3 L11 5 Z" fill="#20a020"/><text x="7" y="15" font-size="8" font-family="Liberation Serif" fill="#222">Z</text></g><g transform="translate(835,78)"><path d="M4 15 V3" stroke="#20a020" stroke-width="1.6"/><path d="M4 14 H14" stroke="#e02020" stroke-width="1.6"/><path d="M2 5 L4 1 L6 5 Z" fill="#20a020"/><circle cx="4" cy="14" r="2" fill="#2a4ad0"/><text x="7" y="8" font-size="7" font-family="Liberation Serif" fill="#222">-Z</text></g><g transform="translate(851,78)"><path d="M5 8 H11 L8 11 Z" fill="#6a6a6a"/></g><g transform="translate(871,78)"><path d="M3 2 L8 7 M8 2 L3 7" stroke="#2a8ae0" stroke-width="1.8"/><path d="M6 8 L12 2 L14 4 L8 10 Z" fill="#333"/><path d="M3 15 H14 M10 8 Q14 11 10 15" stroke="#222" stroke-width="1.8" fill="none"/></g><g transform="translate(886,78)"><path d="M5 8 H11 L8 11 Z" fill="#6a6a6a"/></g><g transform="translate(896,78)"><path d="M8 1 V16" stroke="#a8aeba"/><path d="M9 1 V16" stroke="#fff"/></g><g transform="translate(914,78)"><path d="M2 5 L8 2 L15 5 V12 L9 15 L2 12 Z" fill="#a8bcd8" stroke="#4a5a78"/><path d="M5 7 V12 L9 14 V9 L13 7" fill="#cdd8ea" stroke="#4a5a78"/></g><g transform="translate(929,78)"><path d="M5 8 H11 L8 11 Z" fill="#6a6a6a"/></g><g transform="translate(942,78)"><rect x="7" y="1" width="2" height="2" fill="#a0a6b2"/><rect x="7" y="4" width="2" height="2" fill="#a0a6b2"/><rect x="7" y="7" width="2" height="2" fill="#a0a6b2"/><rect x="7" y="10" width="2" height="2" fill="#a0a6b2"/><rect x="7" y="13" width="2" height="2" fill="#a0a6b2"/></g><g transform="translate(958,78)"><path d="M2 15 L4 3 L10 5 L13 3 L14 15" fill="none" stroke="#777" stroke-width="1.1"/><circle cx="4" cy="3" r="1.3" fill="#e04040"/><circle cx="13" cy="3" r="1.3" fill="#e04040"/><circle cx="2" cy="15" r="1.3" fill="#20a040"/><circle cx="14" cy="15" r="1.3" fill="#20a040"/></g><g transform="translate(980,78)"><rect x="1.5" y="5.5" width="13" height="7" rx="3" fill="#dcdcdc" stroke="#888"/><rect x="5" y="8" width="2" height="2" fill="#d0c020"/><rect x="8" y="8" width="2" height="2" fill="#3a5ad0"/><rect x="11" y="8" width="2" height="2" fill="#e04040"/></g><g transform="translate(995,78)"><path d="M8 1 V16" stroke="#a8aeba"/><path d="M9 1 V16" stroke="#fff"/></g><g transform="translate(1010,78)"><path d="M5 2 H11 M8 2 V8 M5 8 H11" stroke="#5a70c0" stroke-width="1.3"/><path d="M1 14 L15 11 V13 H1" fill="#e07070"/><path d="M1 15 L8 13" stroke="#6a7ad0" stroke-width="1.3"/><path d="M1 13 H15" stroke="#444"/></g><g transform="translate(1032,78)"><path d="M1 9 L9 3 L15 8 L7 14 Z" fill="#40c040" stroke="#3a5ad0"/><path d="M4 9 L9 5 L13 8 L8 12 Z" fill="#e0e040"/><path d="M7 9 L9 7 L11 8.5 L9 10.5 Z" fill="#e04020"/></g><g transform="translate(1054,78)"><path d="M2 4 L6 1 H15 V12 L11 15 H2 Z" fill="#3a8ae0" stroke="#555"/><rect x="2.5" y="4.5" width="8.5" height="10" fill="#40c040"/><circle cx="6.5" cy="9.5" r="3" fill="#e0e040"/><circle cx="6.5" cy="9.5" r="1.5" fill="#e03020"/></g><g transform="translate(1076,78)"><circle cx="6" cy="4" r="2.5" fill="#60b070"/><path d="M2 8 Q6 5 10 8 Z" fill="#60b070"/><path d="M6 15 V10 M4 12 L6 10 L8 12" stroke="#40b050" stroke-width="1.5" fill="none"/><path d="M15 4 H10 M12 2 L10 4 L12 6" stroke="#40b050" stroke-width="1.5" fill="none"/></g><g transform="translate(1098,78)"><path d="M3 9 Q9 2 15 3 Q12 9 5 11 Z" fill="#8a9aa8" stroke="#555"/><path d="M1 14 L15 11 V13 H1" fill="#e08080"/><path d="M1 15 L8 13" stroke="#6a7ad0" stroke-width="1.3"/></g><g transform="translate(1122,78)"><rect x="1.5" y="2.5" width="13" height="13" fill="#fff" stroke="#333"/><path d="M2 5 L12 15 M2 9 L8 15 M5 3 L14 12 M9 3 L14 8" stroke="#e02020" stroke-width="1.1"/><path d="M2 9 L8 15" stroke="#30b030"/><path d="M5 3 L14 12" stroke="#e0d020"/><path d="M2 12 L5 15" stroke="#3040e0"/><rect x="10" y="0.5" width="6" height="5" fill="#f0d040" stroke="#806000"/></g><g transform="translate(1138,78)"><path d="M5 8 H11 L8 11 Z" fill="#6a6a6a"/></g><g transform="translate(1155,78)"><path d="M5 2 H11 M8 2 V9 M5 9 H11" stroke="#5a70c0" stroke-width="1.3"/><path d="M1 12 H15" stroke="#888"/><path d="M1 12 Q4 7 8 12 Q12 17 15 12" stroke="#d04040" fill="none"/><path d="M1 12 Q4 17 8 12" stroke="#5060d0" fill="none"/></g><g transform="translate(1176,78)"><rect x="1.5" y="1.5" width="13" height="13" fill="#f0f0f4" stroke="#8a90a0"/><path d="M2 5 H14 M2 8 H14 M2 11 H14 M8 2 V14" stroke="#a0a8b8"/><path d="M3 4 H7 M9 7 H13" stroke="#5a6ad0"/></g><g transform="translate(1192,78)"><path d="M8 1 V16" stroke="#a8aeba"/><path d="M9 1 V16" stroke="#fff"/></g><g transform="translate(1207,78)"><rect x="2.5" y="1.5" width="11" height="14" fill="#fff" stroke="#8a8a9a"/><rect x="2.5" y="1.5" width="11" height="2" fill="#aab"/><path d="M4 6 H7 M4 8 H7 M4 10 H7 M8 6 H12 M8 8 H12 M8 10 H12 M8 12 H12" stroke="#7a7a8a"/><path d="M4 6 H7" stroke="#e04040"/><path d="M4 8 H7" stroke="#40c040"/><path d="M4 10 H7" stroke="#4060e0"/></g><g transform="translate(1232,78)"><path d="M4 0.5 L5 3 L7.5 3 L5.5 4.6 L6.3 7.2 L4 5.6 L1.7 7.2 L2.5 4.6 L0.5 3 L3 3 Z" fill="#f5e61a" stroke="#b0a000" stroke-width="0.6"/><rect x="6.5" y="1.5" width="9" height="6" fill="#fff" stroke="#445"/><rect x="6.5" y="1.5" width="9" height="1.5" fill="#2a4ab0"/><path d="M2 15 Q6 8 14 9 Q10 15 2 15" fill="#5a80c0" stroke="#222"/></g><g transform="translate(1247,78)"><path d="M5 8 H11 L8 11 Z" fill="#6a6a6a"/></g><g transform="translate(1266,78)"><rect x="1.5" y="1.5" width="13" height="14" fill="#fff" stroke="#222"/><path d="M2 5 L12 15" stroke="#e02020" stroke-width="2.2"/><path d="M2 9 L8 15" stroke="#e0d020" stroke-width="2.2"/><path d="M2 12 L5 15" stroke="#20b020" stroke-width="2.2"/><path d="M8 9 L15 1" stroke="#e0a020" stroke-width="2"/></g><g transform="translate(1282,78)"><path d="M5 8 H11 L8 11 Z" fill="#6a6a6a"/></g><g transform="translate(1295,78)"><rect x="7" y="1" width="2" height="2" fill="#a0a6b2"/><rect x="7" y="4" width="2" height="2" fill="#a0a6b2"/><rect x="7" y="7" width="2" height="2" fill="#a0a6b2"/><rect x="7" y="10" width="2" height="2" fill="#a0a6b2"/><rect x="7" y="13" width="2" height="2" fill="#a0a6b2"/></g><g transform="translate(1311,78)"><rect x="3.5" y="1.5" width="12" height="11" fill="#1a4a9a" stroke="#0a2a60"/><path d="M6 4 L12 10 M12 4 L6 10" stroke="#9ac8f8" stroke-width="1.5"/><path d="M0 10 H8 L4 16 Z" fill="#e02020"/></g><g transform="translate(1333,78)"><rect x="3.5" y="1.5" width="12" height="11" fill="#1a4a9a" stroke="#0a2a60"/><path d="M6 4 L12 10 M12 4 L6 10" stroke="#9ac8f8" stroke-width="1.5"/><path d="M0 16 H8 L4 10 Z" fill="#e02020"/></g><g transform="translate(1355,78)"><rect x="7.5" y="4.5" width="8" height="8" fill="#fff" stroke="#999"/><path d="M5 1 L10 11 H2 Z" fill="#d01818"/><path d="M0 12 H8 L4 16 Z" fill="#e03030"/></g><g transform="translate(1377,78)"><rect x="7.5" y="4.5" width="8" height="8" fill="#fff" stroke="#999"/><path d="M5 1 L10 11 H2 Z" fill="#d01818"/><path d="M0 16 H8 L4 11 Z" fill="#e03030"/></g><rect x="440.5" y="50.5" width="426" height="20" fill="#fff" stroke="#e4e8ef"/><rect x="852" y="52" width="13" height="17" fill="#e6e6e6"/><path d="M855.5 59 H861.5 L858.5 62 Z" fill="#606060"/></svg><div class="t" style="left:443.00px;top:54.34px;font-size:12px;line-height:12px;color:#000;transform:scaleX(0.96);transform-origin:left">LF1 - Flächenbelastung</div><div style="position:absolute;left:0px;top:101px;width:316px;height:1319px;background:#d0d5de"></div><div style="position:absolute;left:1px;top:100px;width:309px;height:20px;background:#bac1cc"></div><div class="t" style="left:4.00px;top:103.44px;font-size:12px;line-height:12px;color:#4a4a4a;transform:scaleX(0.96);transform-origin:left">Projekt-Navigator - Daten</div><svg style="left:280px;top:103px" width="30" height="14" viewBox="0 0 30 14"><path d="M3.5 2.5 H8.5 M4.5 2.5 V7.5 M7.5 2.5 V7.5 M2.5 7.5 H9.5 M6 7.5 V11" stroke="#6e6e6e" stroke-width="1.2" fill="none"/><path d="M17.5 3 L25 10.5 M25 3 L17.5 10.5" stroke="#6e6e6e" stroke-width="1.4"/></svg><div style="position:absolute;left:2px;top:120px;width:307px;height:1258px;background:#eef2f8"></div><div style="position:absolute;left:3px;top:122px;width:305px;height:1px;background:#8c8c8c"></div><div style="position:absolute;left:3px;top:122px;width:1px;height:1254px;background:#a0a0a0"></div><div style="position:absolute;left:4px;top:123px;width:287px;height:1252px;background:#fbfbf3"></div><div style="position:absolute;left:291px;top:123px;width:16px;height:1252px;background:#f0f0f0"></div><div style="position:absolute;left:291px;top:150px;width:15px;height:701px;background:#cdcdcd"></div><svg style="left:291px;top:123px" width="16" height="1252" viewBox="0 0 16 1252"><path d="M4.5 12 L8 8.5 L11.5 12" stroke="#606060" stroke-width="2" fill="none"/><path d="M4.5 1240 L8 1243.5 L11.5 1240" stroke="#606060" stroke-width="2" fill="none"/></svg><div style="position:absolute;left:4px;top:1375px;width:303px;height:18px;background:#f0f0f0"></div><div style="position:absolute;left:21px;top:1377px;width:140px;height:15px;background:#cdcdcd"></div><svg style="left:4px;top:1375px" width="303" height="18" viewBox="0 0 303 18"><path d="M11 5.5 L7.5 9 L11 12.5" stroke="#606060" stroke-width="2" fill="none"/><path d="M278 5.5 L281.5 9 L278 12.5" stroke="#606060" stroke-width="2" fill="none"/></svg><div style="position:absolute;left:2px;top:1393px;width:307px;height:2px;background:#fafcff"></div><div style="position:absolute;left:1px;top:1395px;width:309px;height:1px;background:#777"></div><div style="position:absolute;left:3px;top:1375px;width:1px;height:18px;background:#a0a0a0"></div><div style="position:absolute;left:1px;top:120px;width:2px;height:1275px;background:#f4f7fb"></div><div style="position:absolute;left:0;top:123px;width:290px;height:1252px;overflow:hidden"><div class="t" style="left:47.00px;top:3.14px;font-size:12px;line-height:12px;color:#000;font-weight:bold;transform:scaleX(0.958);transform-origin:left">Druckschale* [Arbeitsverzeichnis]</div><div class="t" style="left:66.00px;top:21.14px;font-size:12px;line-height:12px;color:#000;">Modelldaten</div><div class="t" style="left:85.00px;top:39.14px;font-size:12px;line-height:12px;color:#000;transform:scaleX(0.985);transform-origin:left">Knoten</div><div class="t" style="left:85.00px;top:57.14px;font-size:12px;line-height:12px;color:#000;transform:scaleX(0.985);transform-origin:left">Linien</div><div class="t" style="left:85.00px;top:75.14px;font-size:12px;line-height:12px;color:#000;transform:scaleX(0.985);transform-origin:left">Materialien</div><div class="t" style="left:85.00px;top:93.14px;font-size:12px;line-height:12px;color:#000;transform:scaleX(0.985);transform-origin:left">Flächen</div><div class="t" style="left:85.00px;top:111.14px;font-size:12px;line-height:12px;color:#000;transform:scaleX(0.985);transform-origin:left">Volumenkörper</div><div class="t" style="left:85.00px;top:129.14px;font-size:12px;line-height:12px;color:#000;transform:scaleX(0.985);transform-origin:left">Öffnungen</div><div class="t" style="left:85.00px;top:147.14px;font-size:12px;line-height:12px;color:#000;transform:scaleX(0.985);transform-origin:left">Knotenlager</div><div class="t" style="left:85.00px;top:165.14px;font-size:12px;line-height:12px;color:#000;transform:scaleX(0.985);transform-origin:left">Linienlager</div><div class="t" style="left:85.00px;top:183.14px;font-size:12px;line-height:12px;color:#000;transform:scaleX(0.985);transform-origin:left">Flächenlager</div><div class="t" style="left:85.00px;top:201.14px;font-size:12px;line-height:12px;color:#000;transform:scaleX(0.985);transform-origin:left">Liniengelenke</div><div class="t" style="left:85.00px;top:219.14px;font-size:12px;line-height:12px;color:#000;transform:scaleX(0.985);transform-origin:left">Veränderliche Dicken</div><div class="t" style="left:85.00px;top:237.14px;font-size:12px;line-height:12px;color:#000;transform:scaleX(0.985);transform-origin:left">Orthotrope Flächen und Membranen</div><div class="t" style="left:85.00px;top:255.14px;font-size:12px;line-height:12px;color:#000;transform:scaleX(0.985);transform-origin:left">Querschnitte</div><div class="t" style="left:85.00px;top:273.14px;font-size:12px;line-height:12px;color:#000;transform:scaleX(0.985);transform-origin:left">Stabendgelenke</div><div class="t" style="left:85.00px;top:291.14px;font-size:12px;line-height:12px;color:#000;transform:scaleX(0.985);transform-origin:left">Stabexzentrizitäten</div><div class="t" style="left:85.00px;top:309.14px;font-size:12px;line-height:12px;color:#000;transform:scaleX(0.985);transform-origin:left">Stabteilungen</div><div class="t" style="left:85.00px;top:327.14px;font-size:12px;line-height:12px;color:#000;transform:scaleX(0.985);transform-origin:left">Stäbe</div><div class="t" style="left:85.00px;top:345.14px;font-size:12px;line-height:12px;color:#000;transform:scaleX(0.985);transform-origin:left">Rippen</div><div class="t" style="left:85.00px;top:363.14px;font-size:12px;line-height:12px;color:#000;transform:scaleX(0.985);transform-origin:left">Stabbettungen</div><div class="t" style="left:85.00px;top:381.14px;font-size:12px;line-height:12px;color:#000;transform:scaleX(0.985);transform-origin:left">Stabnichtlinearitäten</div><div class="t" style="left:85.00px;top:399.14px;font-size:12px;line-height:12px;color:#000;transform:scaleX(0.985);transform-origin:left">Stabsätze</div><div class="t" style="left:85.00px;top:417.14px;font-size:12px;line-height:12px;color:#000;transform:scaleX(0.985);transform-origin:left">Durchdringungen der Flächen</div><div class="t" style="left:85.00px;top:435.14px;font-size:12px;line-height:12px;color:#000;transform:scaleX(0.985);transform-origin:left">FE-Netzverdichtungen</div><div class="t" style="left:85.00px;top:453.14px;font-size:12px;line-height:12px;color:#000;transform:scaleX(0.985);transform-origin:left">Knotenfreigaben</div><div class="t" style="left:85.00px;top:471.14px;font-size:12px;line-height:12px;color:#000;transform:scaleX(0.985);transform-origin:left">Linienfreigabe-Typen</div><div class="t" style="left:85.00px;top:489.14px;font-size:12px;line-height:12px;color:#000;transform:scaleX(0.985);transform-origin:left">Linienfreigaben</div><div class="t" style="left:85.00px;top:507.14px;font-size:12px;line-height:12px;color:#000;transform:scaleX(0.985);transform-origin:left">Flächenfreigabe-Typen</div><div class="t" style="left:85.00px;top:525.14px;font-size:12px;line-height:12px;color:#000;transform:scaleX(0.985);transform-origin:left">Flächenfreigaben</div><div class="t" style="left:85.00px;top:543.14px;font-size:12px;line-height:12px;color:#000;transform:scaleX(0.985);transform-origin:left">Verbindung von zwei Stäben</div><div class="t" style="left:85.00px;top:561.14px;font-size:12px;line-height:12px;color:#000;transform:scaleX(0.985);transform-origin:left">Anschlüsse</div><div class="t" style="left:85.00px;top:579.14px;font-size:12px;line-height:12px;color:#000;transform:scaleX(0.985);transform-origin:left">Knotenkopplungen</div><div class="t" style="left:66.00px;top:597.14px;font-size:12px;line-height:12px;color:#000;">Lastfälle und Kombinationen</div><div class="t" style="left:85.00px;top:615.14px;font-size:12px;line-height:12px;color:#000;transform:scaleX(0.985);transform-origin:left">Lastfälle</div><div class="t" style="left:85.00px;top:633.14px;font-size:12px;line-height:12px;color:#000;transform:scaleX(0.985);transform-origin:left">Lastkombinationen</div><div class="t" style="left:85.00px;top:651.14px;font-size:12px;line-height:12px;color:#000;transform:scaleX(0.985);transform-origin:left">Ergebniskombinationen</div><div class="t" style="left:66.00px;top:669.14px;font-size:12px;line-height:12px;color:#000;">Lasten</div><div class="t" style="left:66.00px;top:687.14px;font-size:12px;line-height:12px;color:#000;">Ergebnisse</div><div class="t" style="left:66.00px;top:705.14px;font-size:12px;line-height:12px;color:#000;">Schnitte</div><div class="t" style="left:66.00px;top:723.14px;font-size:12px;line-height:12px;color:#000;">Glättungsbereiche</div><div class="t" style="left:66.00px;top:741.14px;font-size:12px;line-height:12px;color:#000;">Ausdruckprotokolle</div><div class="t" style="left:66.00px;top:759.14px;font-size:12px;line-height:12px;color:#000;">Hilfsobjekte</div><div class="t" style="left:66.00px;top:777.14px;font-size:12px;line-height:12px;color:#000;">Zusatzmodule</div><div class="t" style="left:85.00px;top:795.14px;font-size:12px;line-height:12px;color:#000;transform:scaleX(0.955);transform-origin:left">RF-STAHL Flächen - Allgemeine Spannungsanalyse</div><div class="t" style="left:85.00px;top:813.14px;font-size:12px;line-height:12px;color:#000;transform:scaleX(0.955);transform-origin:left">RF-STAHL Stäbe - Allgemeine Spannungsanalyse</div><div class="t" style="left:85.00px;top:831.14px;font-size:12px;line-height:12px;color:#000;transform:scaleX(0.955);transform-origin:left">RF-STAHL EC3 - Bemessung nach Eurocode 3</div><div class="t" style="left:85.00px;top:849.14px;font-size:12px;line-height:12px;color:#000;transform:scaleX(0.955);transform-origin:left">RF-STAHL AISC - Bemessung nach AISC</div><div class="t" style="left:85.00px;top:867.14px;font-size:12px;line-height:12px;color:#000;transform:scaleX(0.955);transform-origin:left">RF-STAHL IS - Bemessung nach IS</div><div class="t" style="left:85.00px;top:885.14px;font-size:12px;line-height:12px;color:#000;transform:scaleX(0.955);transform-origin:left">RF-STAHL SIA - Bemessung nach SIA</div><div class="t" style="left:85.00px;top:903.14px;font-size:12px;line-height:12px;color:#000;transform:scaleX(0.955);transform-origin:left">RF-STAHL BS - Bemessung nach BS</div><div class="t" style="left:85.00px;top:921.14px;font-size:12px;line-height:12px;color:#000;transform:scaleX(0.955);transform-origin:left">RF-STAHL GB - Bemessung nach GB</div><div class="t" style="left:85.00px;top:939.14px;font-size:12px;line-height:12px;color:#000;transform:scaleX(0.955);transform-origin:left">RF-STAHL CSA - Bemessung nach CSA</div><div class="t" style="left:85.00px;top:957.14px;font-size:12px;line-height:12px;color:#000;transform:scaleX(0.955);transform-origin:left">RF-STAHL AS - Bemessung nach AS</div><div class="t" style="left:85.00px;top:975.14px;font-size:12px;line-height:12px;color:#000;transform:scaleX(0.955);transform-origin:left">RF-STAHL NTC-DF - Bemessung nach NTC-DF</div><div class="t" style="left:85.00px;top:993.14px;font-size:12px;line-height:12px;color:#000;transform:scaleX(0.955);transform-origin:left">RF-STAHL SP - Bemessung nach SP</div><div class="t" style="left:85.00px;top:1011.14px;font-size:12px;line-height:12px;color:#000;transform:scaleX(0.955);transform-origin:left">RF-STAHL Plastisch - Plastische Bemessung</div><div class="t" style="left:85.00px;top:1029.14px;font-size:12px;line-height:12px;color:#000;transform:scaleX(0.955);transform-origin:left">RF-STAHL SANS - Bemessung nach SANS</div><div class="t" style="left:85.00px;top:1047.14px;font-size:12px;line-height:12px;color:#000;transform:scaleX(0.955);transform-origin:left">RF-STAHL Ermüdung Stäbe - Ermüdungsnachweis</div><div class="t" style="left:85.00px;top:1065.14px;font-size:12px;line-height:12px;color:#000;transform:scaleX(0.955);transform-origin:left">RF-STAHL NBR - Bemessung nach NBR</div><div class="t" style="left:85.00px;top:1083.14px;font-size:12px;line-height:12px;color:#000;transform:scaleX(0.955);transform-origin:left">RF-STAHL HK - Bemessung nach HK</div><div class="t" style="left:85.00px;top:1101.14px;font-size:12px;line-height:12px;color:#000;transform:scaleX(0.955);transform-origin:left">RF-ALUMINIUM - Bemessung nach Eurocode 9</div><div class="t" style="left:85.00px;top:1119.14px;font-size:12px;line-height:12px;color:#000;transform:scaleX(0.955);transform-origin:left">RF-ALUMINIUM ADM - Bemessung von Aluminium</div><div class="t" style="left:85.00px;top:1137.14px;font-size:12px;line-height:12px;color:#000;transform:scaleX(0.955);transform-origin:left">RF-KAPPA - Biegeknicknachweis</div><div class="t" style="left:85.00px;top:1155.14px;font-size:12px;line-height:12px;color:#000;transform:scaleX(0.955);transform-origin:left">RF-BGDK - Biegedrillknicknachweis</div><div class="t" style="left:85.00px;top:1173.14px;font-size:12px;line-height:12px;color:#000;transform:scaleX(0.955);transform-origin:left">RF-FE-BGDK - Biegedrillknicknachweis</div><div class="t" style="left:85.00px;top:1191.14px;font-size:12px;line-height:12px;color:#000;transform:scaleX(0.955);transform-origin:left">RF-EL-PL - Tragsicherheitsnachweis nach</div><div class="t" style="left:85.00px;top:1209.14px;font-size:12px;line-height:12px;color:#000;transform:scaleX(0.955);transform-origin:left">RF-C-ZU-T - Nachweis von grenz (c/t)</div><div class="t" style="left:85.00px;top:1227.14px;font-size:12px;line-height:12px;color:#000;transform:scaleX(0.955);transform-origin:left">FE-BEUL - Beulsicherheitsnachweis</div><div class="t" style="left:85.00px;top:1245.14px;font-size:12px;line-height:12px;color:#000;transform:scaleX(0.955);transform-origin:left">VERBAND - Bemessung von Dachverbänden</div></div><svg style="left:4px;top:123px" width="287" height="1252" viewBox="4 123 287 1252"><defs><linearGradient id="expg" x1="0" y1="0" x2="0" y2="1"><stop offset="0" stop-color="#fff"/><stop offset="1" stop-color="#dcdcdc"/></linearGradient><linearGradient id="modg" x1="0" y1="0" x2="0" y2="1"><stop offset="0" stop-color="#f4f4f8"/><stop offset="1" stop-color="#b8b8c4"/></linearGradient><linearGradient id="foldg" x1="0" y1="0" x2="0" y2="1"><stop offset="0" stop-color="#fbeaa0"/><stop offset="0.5" stop-color="#f2d75a"/><stop offset="1" stop-color="#e0bc38"/></linearGradient></defs><line x1="15.5" y1="123" x2="15.5" y2="129" stroke="#8a8a8a" stroke-width="1" stroke-dasharray="1 1"/><line x1="34.5" y1="142" x2="34.5" y2="907" stroke="#8a8a8a" stroke-width="1" stroke-dasharray="1 1"/><line x1="53.5" y1="160" x2="53.5" y2="709" stroke="#8a8a8a" stroke-width="1" stroke-dasharray="1 1"/><line x1="53.5" y1="736" x2="53.5" y2="781" stroke="#8a8a8a" stroke-width="1" stroke-dasharray="1 1"/><line x1="53.5" y1="916" x2="53.5" y2="1375" stroke="#8a8a8a" stroke-width="1" stroke-dasharray="1 1"/><line x1="20" y1="133.8" x2="30" y2="133.8" stroke="#8a8a8a" stroke-width="1" stroke-dasharray="1 1"/><rect x="11.5" y="129.3" width="8" height="8" fill="url(#expg)" stroke="#8e8e8e" stroke-width="1"/><path d="M13.0 133.3 H18.0" stroke="#2a3a8a" stroke-width="1.4"/><path d="M29.5 125.80000000000001 H38.5 L41.5 128.8 V140.8 H29.5 Z" fill="#f4f4f4" stroke="#666" stroke-width="1"/><path d="M26 132.3 L33 128.3 L36 135.3 L30 137.3 Z" fill="#6f8fcf" stroke="#34508a" stroke-width="0.8"/><line x1="39" y1="151.8" x2="46" y2="151.8" stroke="#8a8a8a" stroke-width="1" stroke-dasharray="1 1"/><rect x="30.5" y="147.3" width="8" height="8" fill="url(#expg)" stroke="#8e8e8e" stroke-width="1"/><path d="M32.0 151.3 H37.0" stroke="#2a3a8a" stroke-width="1.4"/><path d="M46.5 145.8 H51 L52 146.8 H58.5 V149.3 H46.5 Z" fill="#d8b83a" stroke="#9a7a20" stroke-width="0.8"/><path d="M46.5 148.8 H58 L60.5 155.8 H48.5 Z" fill="url(#foldg)" stroke="#8a6a18" stroke-width="0.9"/><line x1="58" y1="169.8" x2="64" y2="169.8" stroke="#8a8a8a" stroke-width="1" stroke-dasharray="1 1"/><rect x="49.5" y="165.3" width="8" height="8" fill="url(#expg)" stroke="#8e8e8e" stroke-width="1"/><path d="M51.0 169.3 H56.0" stroke="#2a3a8a" stroke-width="1.4"/><path d="M53.5 166.8 V171.8" stroke="#2a3a8a" stroke-width="1.4"/><path d="M66.5 165.3 H71 L72 166.3 H79 V174.8 Q79 175.8 78 175.8 H67.5 Q66.5 175.8 66.5 174.8 Z" fill="url(#foldg)" stroke="#9a8028" stroke-width="0.9"/><path d="M67 175.60000000000002 H79" stroke="#6a5a20" stroke-width="1"/><g transform="translate(66,163.8)"><circle cx="7" cy="6.5" r="1.3" fill="#e01010"/></g><line x1="58" y1="187.8" x2="64" y2="187.8" stroke="#8a8a8a" stroke-width="1" stroke-dasharray="1 1"/><rect x="49.5" y="183.3" width="8" height="8" fill="url(#expg)" stroke="#8e8e8e" stroke-width="1"/><path d="M51.0 187.3 H56.0" stroke="#2a3a8a" stroke-width="1.4"/><path d="M53.5 184.8 V189.8" stroke="#2a3a8a" stroke-width="1.4"/><path d="M66.5 183.3 H71 L72 184.3 H79 V192.8 Q79 193.8 78 193.8 H67.5 Q66.5 193.8 66.5 192.8 Z" fill="url(#foldg)" stroke="#9a8028" stroke-width="0.9"/><path d="M67 193.60000000000002 H79" stroke="#6a5a20" stroke-width="1"/><g transform="translate(66,181.8)"><path d="M3 10 L11 3" stroke="#333" stroke-width="0.8"/><circle cx="3" cy="10" r="1" fill="#e01010"/><circle cx="11" cy="3" r="1" fill="#e01010"/></g><line x1="58" y1="205.8" x2="64" y2="205.8" stroke="#8a8a8a" stroke-width="1" stroke-dasharray="1 1"/><rect x="49.5" y="201.3" width="8" height="8" fill="url(#expg)" stroke="#8e8e8e" stroke-width="1"/><path d="M51.0 205.3 H56.0" stroke="#2a3a8a" stroke-width="1.4"/><path d="M53.5 202.8 V207.8" stroke="#2a3a8a" stroke-width="1.4"/><path d="M66.5 201.3 H71 L72 202.3 H79 V210.8 Q79 211.8 78 211.8 H67.5 Q66.5 211.8 66.5 210.8 Z" fill="url(#foldg)" stroke="#9a8028" stroke-width="0.9"/><path d="M67 211.60000000000002 H79" stroke="#6a5a20" stroke-width="1"/><g transform="translate(66,199.8)"><circle cx="5" cy="5" r="1.8" fill="#3050e0"/><circle cx="5" cy="8.5" r="1.8" fill="#20c020"/><circle cx="8.5" cy="8.5" r="1.8" fill="#e04060"/><rect x="7.5" y="3" width="2" height="3" fill="#e0c020"/></g><line x1="58" y1="223.8" x2="64" y2="223.8" stroke="#8a8a8a" stroke-width="1" stroke-dasharray="1 1"/><rect x="49.5" y="219.3" width="8" height="8" fill="url(#expg)" stroke="#8e8e8e" stroke-width="1"/><path d="M51.0 223.3 H56.0" stroke="#2a3a8a" stroke-width="1.4"/><path d="M53.5 220.8 V225.8" stroke="#2a3a8a" stroke-width="1.4"/><path d="M66.5 219.3 H71 L72 220.3 H79 V228.8 Q79 229.8 78 229.8 H67.5 Q66.5 229.8 66.5 228.8 Z" fill="url(#foldg)" stroke="#9a8028" stroke-width="0.9"/><path d="M67 229.60000000000002 H79" stroke="#6a5a20" stroke-width="1"/><g transform="translate(66,217.8)"><path d="M3 8 L7 5 L11 7 L7 10 Z" fill="#6a9ae8" stroke="#2a4a90" stroke-width="0.6"/></g><line x1="54" y1="241.8" x2="64" y2="241.8" stroke="#8a8a8a" stroke-width="1" stroke-dasharray="1 1"/><path d="M66.5 237.3 H71 L72 238.3 H79 V246.8 Q79 247.8 78 247.8 H67.5 Q66.5 247.8 66.5 246.8 Z" fill="url(#foldg)" stroke="#9a8028" stroke-width="0.9"/><path d="M67 247.60000000000002 H79" stroke="#6a5a20" stroke-width="1"/><g transform="translate(66,235.8)"><rect x="4" y="4" width="6" height="6" fill="#7aa0e0" stroke="#2a4a90" stroke-width="0.7"/></g><line x1="54" y1="259.8" x2="64" y2="259.8" stroke="#8a8a8a" stroke-width="1" stroke-dasharray="1 1"/><path d="M66.5 255.3 H71 L72 256.3 H79 V264.8 Q79 265.8 78 265.8 H67.5 Q66.5 265.8 66.5 264.8 Z" fill="url(#foldg)" stroke="#9a8028" stroke-width="0.9"/><path d="M67 265.6 H79" stroke="#6a5a20" stroke-width="1"/><g transform="translate(66,253.8)"><rect x="4" y="3.5" width="6.5" height="6.5" fill="#888" stroke="#444" stroke-width="0.7"/><rect x="5.5" y="5" width="3.5" height="3.5" fill="#f0e070"/></g><line x1="54" y1="277.8" x2="64" y2="277.8" stroke="#8a8a8a" stroke-width="1" stroke-dasharray="1 1"/><path d="M66.5 273.3 H71 L72 274.3 H79 V282.8 Q79 283.8 78 283.8 H67.5 Q66.5 283.8 66.5 282.8 Z" fill="url(#foldg)" stroke="#9a8028" stroke-width="0.9"/><path d="M67 283.6 H79" stroke="#6a5a20" stroke-width="1"/><g transform="translate(66,271.8)"><path d="M4 10 Q4 7 7 7 Q10 7 10 10 Z" fill="#20a030"/><circle cx="7" cy="5.5" r="1.3" fill="#20a030"/><rect x="6" y="2" width="2" height="2" fill="#e01010"/></g><line x1="58" y1="295.8" x2="64" y2="295.8" stroke="#8a8a8a" stroke-width="1" stroke-dasharray="1 1"/><rect x="49.5" y="291.3" width="8" height="8" fill="url(#expg)" stroke="#8e8e8e" stroke-width="1"/><path d="M51.0 295.3 H56.0" stroke="#2a3a8a" stroke-width="1.4"/><path d="M53.5 292.8 V297.8" stroke="#2a3a8a" stroke-width="1.4"/><path d="M66.5 291.3 H71 L72 292.3 H79 V300.8 Q79 301.8 78 301.8 H67.5 Q66.5 301.8 66.5 300.8 Z" fill="url(#foldg)" stroke="#9a8028" stroke-width="0.9"/><path d="M67 301.6 H79" stroke="#6a5a20" stroke-width="1"/><g transform="translate(66,289.8)"><path d="M2.5 6 H11.5" stroke="#e01010" stroke-width="0.8"/><circle cx="4" cy="8.5" r="1.7" fill="#20a030"/><circle cx="10" cy="8.5" r="1.7" fill="#20a030"/></g><line x1="54" y1="313.8" x2="64" y2="313.8" stroke="#8a8a8a" stroke-width="1" stroke-dasharray="1 1"/><path d="M66.5 309.3 H71 L72 310.3 H79 V318.8 Q79 319.8 78 319.8 H67.5 Q66.5 319.8 66.5 318.8 Z" fill="url(#foldg)" stroke="#9a8028" stroke-width="0.9"/><path d="M67 319.6 H79" stroke="#6a5a20" stroke-width="1"/><g transform="translate(66,307.8)"><path d="M3 8 L7 4 L11 6 L7 10 Z" fill="#3a6aa0"/><path d="M4 9 L6 6 M8 9 L10 6" stroke="#20c030" stroke-width="1.2"/></g><line x1="54" y1="331.8" x2="64" y2="331.8" stroke="#8a8a8a" stroke-width="1" stroke-dasharray="1 1"/><path d="M66.5 327.3 H71 L72 328.3 H79 V336.8 Q79 337.8 78 337.8 H67.5 Q66.5 337.8 66.5 336.8 Z" fill="url(#foldg)" stroke="#9a8028" stroke-width="0.9"/><path d="M67 337.6 H79" stroke="#6a5a20" stroke-width="1"/><g transform="translate(66,325.8)"><path d="M3 7 L10 5 L11 8 L4 9 Z" fill="#fafafa" stroke="#777" stroke-width="0.6"/></g><line x1="54" y1="349.8" x2="64" y2="349.8" stroke="#8a8a8a" stroke-width="1" stroke-dasharray="1 1"/><path d="M66.5 345.3 H71 L72 346.3 H79 V354.8 Q79 355.8 78 355.8 H67.5 Q66.5 355.8 66.5 354.8 Z" fill="url(#foldg)" stroke="#9a8028" stroke-width="0.9"/><path d="M67 355.6 H79" stroke="#6a5a20" stroke-width="1"/><g transform="translate(66,343.8)"><path d="M3 8 L10 4 L11 7 L4 10 Z" fill="#4a7ad0" stroke="#1a3a80" stroke-width="0.6"/></g><line x1="54" y1="367.8" x2="64" y2="367.8" stroke="#8a8a8a" stroke-width="1" stroke-dasharray="1 1"/><path d="M66.5 363.3 H71 L72 364.3 H79 V372.8 Q79 373.8 78 373.8 H67.5 Q66.5 373.8 66.5 372.8 Z" fill="url(#foldg)" stroke="#9a8028" stroke-width="0.9"/><path d="M67 373.6 H79" stroke="#6a5a20" stroke-width="1"/><g transform="translate(66,361.8)"><path d="M3 8 L10 5 L11 8 L4 10 Z" fill="#e04060" stroke="#3a4a90" stroke-width="0.8"/></g><line x1="58" y1="385.8" x2="64" y2="385.8" stroke="#8a8a8a" stroke-width="1" stroke-dasharray="1 1"/><rect x="49.5" y="381.3" width="8" height="8" fill="url(#expg)" stroke="#8e8e8e" stroke-width="1"/><path d="M51.0 385.3 H56.0" stroke="#2a3a8a" stroke-width="1.4"/><path d="M53.5 382.8 V387.8" stroke="#2a3a8a" stroke-width="1.4"/><path d="M66.5 381.3 H71 L72 382.3 H79 V390.8 Q79 391.8 78 391.8 H67.5 Q66.5 391.8 66.5 390.8 Z" fill="url(#foldg)" stroke="#9a8028" stroke-width="0.9"/><path d="M67 391.6 H79" stroke="#6a5a20" stroke-width="1"/><g transform="translate(66,379.8)"><path d="M4 3 H10 V5 H8 V9 H10 V11 H4 V9 H6 V5 H4 Z" fill="#3a60d0"/></g><line x1="54" y1="403.8" x2="64" y2="403.8" stroke="#8a8a8a" stroke-width="1" stroke-dasharray="1 1"/><path d="M66.5 399.3 H71 L72 400.3 H79 V408.8 Q79 409.8 78 409.8 H67.5 Q66.5 409.8 66.5 408.8 Z" fill="url(#foldg)" stroke="#9a8028" stroke-width="0.9"/><path d="M67 409.6 H79" stroke="#6a5a20" stroke-width="1"/><g transform="translate(66,397.8)"><path d="M3 6 H10" stroke="#333" stroke-width="0.8"/><rect x="3" y="4.5" width="2.5" height="3" fill="#e01010"/></g><line x1="54" y1="421.8" x2="64" y2="421.8" stroke="#8a8a8a" stroke-width="1" stroke-dasharray="1 1"/><path d="M66.5 417.3 H71 L72 418.3 H79 V426.8 Q79 427.8 78 427.8 H67.5 Q66.5 427.8 66.5 426.8 Z" fill="url(#foldg)" stroke="#9a8028" stroke-width="0.9"/><path d="M67 427.6 H79" stroke="#6a5a20" stroke-width="1"/><g transform="translate(66,415.8)"><path d="M3 10 L11 3" stroke="#e06020" stroke-width="1.3"/><path d="M4 8 L9 3" stroke="#333" stroke-width="0.6"/></g><line x1="54" y1="439.8" x2="64" y2="439.8" stroke="#8a8a8a" stroke-width="1" stroke-dasharray="1 1"/><path d="M66.5 435.3 H71 L72 436.3 H79 V444.8 Q79 445.8 78 445.8 H67.5 Q66.5 445.8 66.5 444.8 Z" fill="url(#foldg)" stroke="#9a8028" stroke-width="0.9"/><path d="M67 445.6 H79" stroke="#6a5a20" stroke-width="1"/><g transform="translate(66,433.8)"><path d="M3 10 L11 3" stroke="#333" stroke-width="0.8"/><circle cx="7" cy="6.5" r="1.1" fill="#e01010"/><circle cx="3" cy="10" r="1" fill="#e01010"/></g><line x1="58" y1="457.8" x2="64" y2="457.8" stroke="#8a8a8a" stroke-width="1" stroke-dasharray="1 1"/><rect x="49.5" y="453.3" width="8" height="8" fill="url(#expg)" stroke="#8e8e8e" stroke-width="1"/><path d="M51.0 457.3 H56.0" stroke="#2a3a8a" stroke-width="1.4"/><path d="M53.5 454.8 V459.8" stroke="#2a3a8a" stroke-width="1.4"/><path d="M66.5 453.3 H71 L72 454.3 H79 V462.8 Q79 463.8 78 463.8 H67.5 Q66.5 463.8 66.5 462.8 Z" fill="url(#foldg)" stroke="#9a8028" stroke-width="0.9"/><path d="M67 463.6 H79" stroke="#6a5a20" stroke-width="1"/><g transform="translate(66,451.8)"><path d="M3 10 L11 3" stroke="#e02020" stroke-width="1"/></g><line x1="54" y1="475.8" x2="64" y2="475.8" stroke="#8a8a8a" stroke-width="1" stroke-dasharray="1 1"/><path d="M66.5 471.3 H71 L72 472.3 H79 V480.8 Q79 481.8 78 481.8 H67.5 Q66.5 481.8 66.5 480.8 Z" fill="url(#foldg)" stroke="#9a8028" stroke-width="0.9"/><path d="M67 481.6 H79" stroke="#6a5a20" stroke-width="1"/><g transform="translate(66,469.8)"><path d="M3 7 Q7 4 11 7 L10 9 Q7 7 4 9 Z" fill="#d8d8d8" stroke="#777" stroke-width="0.6"/></g><line x1="54" y1="493.8" x2="64" y2="493.8" stroke="#8a8a8a" stroke-width="1" stroke-dasharray="1 1"/><path d="M66.5 489.3 H71 L72 490.3 H79 V498.8 Q79 499.8 78 499.8 H67.5 Q66.5 499.8 66.5 498.8 Z" fill="url(#foldg)" stroke="#9a8028" stroke-width="0.9"/><path d="M67 499.6 H79" stroke="#6a5a20" stroke-width="1"/><g transform="translate(66,487.8)"><path d="M3 5 H11" stroke="#333" stroke-width="1"/><path d="M4 6 V9 M6 6 V9 M8 6 V9 M10 6 V9" stroke="#20a030" stroke-width="1"/></g><line x1="54" y1="511.8" x2="64" y2="511.8" stroke="#8a8a8a" stroke-width="1" stroke-dasharray="1 1"/><path d="M66.5 507.3 H71 L72 508.3 H79 V516.8 Q79 517.8 78 517.8 H67.5 Q66.5 517.8 66.5 516.8 Z" fill="url(#foldg)" stroke="#9a8028" stroke-width="0.9"/><path d="M67 517.6 H79" stroke="#6a5a20" stroke-width="1"/><g transform="translate(66,505.8)"><path d="M7 2 V11" stroke="#e02020" stroke-width="1.2"/><path d="M5 4 H9 M5 9 H9" stroke="#333" stroke-width="0.7"/></g><line x1="54" y1="529.8" x2="64" y2="529.8" stroke="#8a8a8a" stroke-width="1" stroke-dasharray="1 1"/><path d="M66.5 525.3 H71 L72 526.3 H79 V534.8 Q79 535.8 78 535.8 H67.5 Q66.5 535.8 66.5 534.8 Z" fill="url(#foldg)" stroke="#9a8028" stroke-width="0.9"/><path d="M67 535.5999999999999 H79" stroke="#6a5a20" stroke-width="1"/><g transform="translate(66,523.8)"><path d="M3 10 L7 4 L11 10 M5 7 H9" stroke="#e02020" stroke-width="0.9" fill="none"/></g><line x1="54" y1="547.8" x2="64" y2="547.8" stroke="#8a8a8a" stroke-width="1" stroke-dasharray="1 1"/><path d="M66.5 543.3 H71 L72 544.3 H79 V552.8 Q79 553.8 78 553.8 H67.5 Q66.5 553.8 66.5 552.8 Z" fill="url(#foldg)" stroke="#9a8028" stroke-width="0.9"/><path d="M67 553.5999999999999 H79" stroke="#6a5a20" stroke-width="1"/><g transform="translate(66,541.8)"><circle cx="7" cy="6.5" r="3" fill="#3a80e0" stroke="#1a3a80" stroke-width="0.6"/><circle cx="7" cy="6.5" r="1.2" fill="#fff"/></g><line x1="54" y1="565.8" x2="64" y2="565.8" stroke="#8a8a8a" stroke-width="1" stroke-dasharray="1 1"/><path d="M66.5 561.3 H71 L72 562.3 H79 V570.8 Q79 571.8 78 571.8 H67.5 Q66.5 571.8 66.5 570.8 Z" fill="url(#foldg)" stroke="#9a8028" stroke-width="0.9"/><path d="M67 571.5999999999999 H79" stroke="#6a5a20" stroke-width="1"/><g transform="translate(66,559.8)"><rect x="3.5" y="3.5" width="7" height="7" fill="#8ab0e8" stroke="#1a3a80" stroke-width="0.7"/><path d="M7 3.5 V10.5 M3.5 7 H10.5" stroke="#1a3a80" stroke-width="0.6"/></g><line x1="54" y1="583.8" x2="64" y2="583.8" stroke="#8a8a8a" stroke-width="1" stroke-dasharray="1 1"/><path d="M66.5 579.3 H71 L72 580.3 H79 V588.8 Q79 589.8 78 589.8 H67.5 Q66.5 589.8 66.5 588.8 Z" fill="url(#foldg)" stroke="#9a8028" stroke-width="0.9"/><path d="M67 589.5999999999999 H79" stroke="#6a5a20" stroke-width="1"/><line x1="54" y1="601.8" x2="64" y2="601.8" stroke="#8a8a8a" stroke-width="1" stroke-dasharray="1 1"/><path d="M66.5 597.3 H71 L72 598.3 H79 V606.8 Q79 607.8 78 607.8 H67.5 Q66.5 607.8 66.5 606.8 Z" fill="url(#foldg)" stroke="#9a8028" stroke-width="0.9"/><path d="M67 607.5999999999999 H79" stroke="#6a5a20" stroke-width="1"/><line x1="54" y1="619.8" x2="64" y2="619.8" stroke="#8a8a8a" stroke-width="1" stroke-dasharray="1 1"/><path d="M66.5 615.3 H71 L72 616.3 H79 V624.8 Q79 625.8 78 625.8 H67.5 Q66.5 625.8 66.5 624.8 Z" fill="url(#foldg)" stroke="#9a8028" stroke-width="0.9"/><path d="M67 625.5999999999999 H79" stroke="#6a5a20" stroke-width="1"/><g transform="translate(66,613.8)"><path d="M3 7 L10 5 L11 8 L4 9 Z" fill="#fafafa" stroke="#777" stroke-width="0.6"/></g><line x1="54" y1="637.8" x2="64" y2="637.8" stroke="#8a8a8a" stroke-width="1" stroke-dasharray="1 1"/><path d="M66.5 633.3 H71 L72 634.3 H79 V642.8 Q79 643.8 78 643.8 H67.5 Q66.5 643.8 66.5 642.8 Z" fill="url(#foldg)" stroke="#9a8028" stroke-width="0.9"/><path d="M67 643.5999999999999 H79" stroke="#6a5a20" stroke-width="1"/><g transform="translate(66,631.8)"><path d="M2.5 7 L7 4 L11.5 6 L7 9 Z" fill="#9ac0f0" stroke="#3a6ab0" stroke-width="0.7"/><path d="M2.5 8.5 L7 11 L11.5 8" stroke="#3a6ab0" fill="none" stroke-width="0.8"/></g><line x1="54" y1="655.8" x2="64" y2="655.8" stroke="#8a8a8a" stroke-width="1" stroke-dasharray="1 1"/><path d="M66.5 651.3 H71 L72 652.3 H79 V660.8 Q79 661.8 78 661.8 H67.5 Q66.5 661.8 66.5 660.8 Z" fill="url(#foldg)" stroke="#9a8028" stroke-width="0.9"/><path d="M67 661.5999999999999 H79" stroke="#6a5a20" stroke-width="1"/><g transform="translate(66,649.8)"><path d="M2.5 7 L7 4 L11.5 6 L7 9 Z" fill="#9ac0f0" stroke="#3a6ab0" stroke-width="0.7"/><path d="M2.5 8.5 L7 11 L11.5 8" stroke="#3a6ab0" fill="none" stroke-width="0.8"/></g><line x1="54" y1="673.8" x2="64" y2="673.8" stroke="#8a8a8a" stroke-width="1" stroke-dasharray="1 1"/><path d="M66.5 669.3 H71 L72 670.3 H79 V678.8 Q79 679.8 78 679.8 H67.5 Q66.5 679.8 66.5 678.8 Z" fill="url(#foldg)" stroke="#9a8028" stroke-width="0.9"/><path d="M67 679.5999999999999 H79" stroke="#6a5a20" stroke-width="1"/><line x1="54" y1="691.8" x2="64" y2="691.8" stroke="#8a8a8a" stroke-width="1" stroke-dasharray="1 1"/><path d="M66.5 687.3 H71 L72 688.3 H79 V696.8 Q79 697.8 78 697.8 H67.5 Q66.5 697.8 66.5 696.8 Z" fill="url(#foldg)" stroke="#9a8028" stroke-width="0.9"/><path d="M67 697.5999999999999 H79" stroke="#6a5a20" stroke-width="1"/><line x1="54" y1="709.8" x2="64" y2="709.8" stroke="#8a8a8a" stroke-width="1" stroke-dasharray="1 1"/><path d="M66.5 705.3 H71 L72 706.3 H79 V714.8 Q79 715.8 78 715.8 H67.5 Q66.5 715.8 66.5 714.8 Z" fill="url(#foldg)" stroke="#9a8028" stroke-width="0.9"/><path d="M67 715.5999999999999 H79" stroke="#6a5a20" stroke-width="1"/><g transform="translate(66,703.8)"><rect x="1" y="2" width="12" height="9" fill="#e8c040"/><path d="M3 4 L11 9 M11 4 L3 9" stroke="#222" stroke-width="1"/><circle cx="3" cy="4" r="1.2" fill="#e01010"/><circle cx="11" cy="9" r="1.2" fill="#e01010"/><circle cx="11" cy="4" r="1.2" fill="#e01010"/><circle cx="3" cy="9" r="1.2" fill="#e01010"/></g><line x1="39" y1="727.8" x2="46" y2="727.8" stroke="#8a8a8a" stroke-width="1" stroke-dasharray="1 1"/><rect x="30.5" y="723.3" width="8" height="8" fill="url(#expg)" stroke="#8e8e8e" stroke-width="1"/><path d="M32.0 727.3 H37.0" stroke="#2a3a8a" stroke-width="1.4"/><path d="M46.5 721.8 H51 L52 722.8 H58.5 V725.3 H46.5 Z" fill="#d8b83a" stroke="#9a7a20" stroke-width="0.8"/><path d="M46.5 724.8 H58 L60.5 731.8 H48.5 Z" fill="url(#foldg)" stroke="#8a6a18" stroke-width="0.9"/><line x1="58" y1="745.8" x2="64" y2="745.8" stroke="#8a8a8a" stroke-width="1" stroke-dasharray="1 1"/><rect x="49.5" y="741.3" width="8" height="8" fill="url(#expg)" stroke="#8e8e8e" stroke-width="1"/><path d="M51.0 745.3 H56.0" stroke="#2a3a8a" stroke-width="1.4"/><path d="M53.5 742.8 V747.8" stroke="#2a3a8a" stroke-width="1.4"/><path d="M65 751.3 H78" stroke="#444" stroke-width="1.5"/><path d="M73 739.3 V747.3" stroke="#3a5fbf" stroke-width="2"/><path d="M70 746.3 L73 750.3 L76 746.3 Z" fill="#3a5fbf"/><line x1="54" y1="763.8" x2="64" y2="763.8" stroke="#8a8a8a" stroke-width="1" stroke-dasharray="1 1"/><rect x="64.5" y="755.8" width="5" height="3" fill="#fff" stroke="#555"/><rect x="64.5" y="766.8" width="5" height="3" fill="#fff" stroke="#555"/><path d="M70 757.3 L74 757.3 L75 767.3 L70 768.3" stroke="#444" fill="none" stroke-dasharray="1 1"/><rect x="74" y="761.3" width="4" height="4" fill="#18b018"/><line x1="54" y1="781.8" x2="64" y2="781.8" stroke="#8a8a8a" stroke-width="1" stroke-dasharray="1 1"/><rect x="64.5" y="773.8" width="5" height="3" fill="#fff" stroke="#555"/><rect x="64.5" y="784.8" width="5" height="3" fill="#fff" stroke="#555"/><path d="M70 775.3 L74 775.3 L75 785.3 L70 786.3" stroke="#444" fill="none" stroke-dasharray="1 1"/><rect x="74" y="779.3" width="4" height="4" fill="#4a90e0"/><line x1="39" y1="799.8" x2="46" y2="799.8" stroke="#8a8a8a" stroke-width="1" stroke-dasharray="1 1"/><rect x="30.5" y="795.3" width="8" height="8" fill="url(#expg)" stroke="#8e8e8e" stroke-width="1"/><path d="M32.0 799.3 H37.0" stroke="#2a3a8a" stroke-width="1.4"/><path d="M34.5 796.8 V801.8" stroke="#2a3a8a" stroke-width="1.4"/><path d="M46.5 793.8 H51 L52 794.8 H59 V803.3 Q59 804.3 58 804.3 H47.5 Q46.5 804.3 46.5 803.3 Z" fill="url(#foldg)" stroke="#9a8028" stroke-width="0.9"/><path d="M47 804.0999999999999 H59" stroke="#6a5a20" stroke-width="1"/><line x1="35" y1="817.8" x2="46" y2="817.8" stroke="#8a8a8a" stroke-width="1" stroke-dasharray="1 1"/><path d="M46.5 811.8 H51 L52 812.8 H59 V821.3 Q59 822.3 58 822.3 H47.5 Q46.5 822.3 46.5 821.3 Z" fill="url(#foldg)" stroke="#9a8028" stroke-width="0.9"/><path d="M47 822.0999999999999 H59" stroke="#6a5a20" stroke-width="1"/><line x1="35" y1="835.8" x2="46" y2="835.8" stroke="#8a8a8a" stroke-width="1" stroke-dasharray="1 1"/><path d="M46.5 829.8 H51 L52 830.8 H59 V839.3 Q59 840.3 58 840.3 H47.5 Q46.5 840.3 46.5 839.3 Z" fill="url(#foldg)" stroke="#9a8028" stroke-width="0.9"/><path d="M47 840.0999999999999 H59" stroke="#6a5a20" stroke-width="1"/><line x1="35" y1="853.8" x2="46" y2="853.8" stroke="#8a8a8a" stroke-width="1" stroke-dasharray="1 1"/><path d="M46.5 847.8 H51 L52 848.8 H59 V857.3 Q59 858.3 58 858.3 H47.5 Q46.5 858.3 46.5 857.3 Z" fill="url(#foldg)" stroke="#9a8028" stroke-width="0.9"/><path d="M47 858.0999999999999 H59" stroke="#6a5a20" stroke-width="1"/><line x1="35" y1="871.8" x2="46" y2="871.8" stroke="#8a8a8a" stroke-width="1" stroke-dasharray="1 1"/><path d="M46.5 865.8 H51 L52 866.8 H59 V875.3 Q59 876.3 58 876.3 H47.5 Q46.5 876.3 46.5 875.3 Z" fill="url(#foldg)" stroke="#9a8028" stroke-width="0.9"/><path d="M47 876.0999999999999 H59" stroke="#6a5a20" stroke-width="1"/><line x1="39" y1="889.8" x2="46" y2="889.8" stroke="#8a8a8a" stroke-width="1" stroke-dasharray="1 1"/><rect x="30.5" y="885.3" width="8" height="8" fill="url(#expg)" stroke="#8e8e8e" stroke-width="1"/><path d="M32.0 889.3 H37.0" stroke="#2a3a8a" stroke-width="1.4"/><path d="M34.5 886.8 V891.8" stroke="#2a3a8a" stroke-width="1.4"/><path d="M46.5 883.8 H51 L52 884.8 H59 V893.3 Q59 894.3 58 894.3 H47.5 Q46.5 894.3 46.5 893.3 Z" fill="url(#foldg)" stroke="#9a8028" stroke-width="0.9"/><path d="M47 894.0999999999999 H59" stroke="#6a5a20" stroke-width="1"/><line x1="39" y1="907.8" x2="46" y2="907.8" stroke="#8a8a8a" stroke-width="1" stroke-dasharray="1 1"/><rect x="30.5" y="903.3" width="8" height="8" fill="url(#expg)" stroke="#8e8e8e" stroke-width="1"/><path d="M32.0 907.3 H37.0" stroke="#2a3a8a" stroke-width="1.4"/><path d="M46.5 901.8 H51 L52 902.8 H58.5 V905.3 H46.5 Z" fill="#d8b83a" stroke="#9a7a20" stroke-width="0.8"/><path d="M46.5 904.8 H58 L60.5 911.8 H48.5 Z" fill="url(#foldg)" stroke="#8a6a18" stroke-width="0.9"/><line x1="54" y1="925.8" x2="64" y2="925.8" stroke="#8a8a8a" stroke-width="1" stroke-dasharray="1 1"/><rect x="65" y="918.8" width="12" height="13" fill="url(#modg)" stroke="#7a7ef4" stroke-width="2"/><g transform="translate(64,917.8)"><path d="M3 10 L7 5 L12 8 L8 12 Z" fill="#40b0e0"/><path d="M5 9.5 L7.5 7 L10 8.5 L8 10.5 Z" fill="#e0e040"/><path d="M6 9.5 L7.5 8.3 L9 9 L8 10 Z" fill="#e04020"/></g><line x1="54" y1="943.8" x2="64" y2="943.8" stroke="#8a8a8a" stroke-width="1" stroke-dasharray="1 1"/><rect x="65" y="936.8" width="12" height="13" fill="url(#modg)" stroke="#7a7ef4" stroke-width="2"/><g transform="translate(64,935.8)"><path d="M4 3.5 H10 M7 3.5 V10.5 M4 10.5 H10" stroke="#333" stroke-width="1.4"/></g><line x1="54" y1="961.8" x2="64" y2="961.8" stroke="#8a8a8a" stroke-width="1" stroke-dasharray="1 1"/><rect x="65" y="954.8" width="12" height="13" fill="url(#modg)" stroke="#7a7ef4" stroke-width="2"/><g transform="translate(64,953.8)"><path d="M3 5 Q6 2 11 3.5 L10 6 Q7 5 4 6.5 Z" fill="#4a4a58"/><text x="7" y="12.5" text-anchor="middle" font-size="7" font-family="Liberation Sans" fill="#111">EC</text></g><line x1="54" y1="979.8" x2="64" y2="979.8" stroke="#8a8a8a" stroke-width="1" stroke-dasharray="1 1"/><rect x="65" y="972.8" width="12" height="13" fill="url(#modg)" stroke="#7a7ef4" stroke-width="2"/><g transform="translate(64,971.8)"><path d="M3 5 Q6 2 11 3.5 L10 6 Q7 5 4 6.5 Z" fill="#4a4a58"/><text x="7" y="12.5" text-anchor="middle" font-size="4.6" font-family="Liberation Sans" fill="#111">AISC</text></g><line x1="54" y1="997.8" x2="64" y2="997.8" stroke="#8a8a8a" stroke-width="1" stroke-dasharray="1 1"/><rect x="65" y="990.8" width="12" height="13" fill="url(#modg)" stroke="#7a7ef4" stroke-width="2"/><g transform="translate(64,989.8)"><path d="M3 5 Q6 2 11 3.5 L10 6 Q7 5 4 6.5 Z" fill="#4a4a58"/><text x="7" y="12.5" text-anchor="middle" font-size="7" font-family="Liberation Sans" fill="#111">IS</text></g><line x1="54" y1="1015.8" x2="64" y2="1015.8" stroke="#8a8a8a" stroke-width="1" stroke-dasharray="1 1"/><rect x="65" y="1008.8" width="12" height="13" fill="url(#modg)" stroke="#7a7ef4" stroke-width="2"/><g transform="translate(64,1007.8)"><path d="M3 5 Q6 2 11 3.5 L10 6 Q7 5 4 6.5 Z" fill="#4a4a58"/><text x="7" y="12.5" text-anchor="middle" font-size="5.5" font-family="Liberation Sans" fill="#111">SIA</text></g><line x1="54" y1="1033.8" x2="64" y2="1033.8" stroke="#8a8a8a" stroke-width="1" stroke-dasharray="1 1"/><rect x="65" y="1026.8" width="12" height="13" fill="url(#modg)" stroke="#7a7ef4" stroke-width="2"/><g transform="translate(64,1025.8)"><path d="M3 5 Q6 2 11 3.5 L10 6 Q7 5 4 6.5 Z" fill="#4a4a58"/><text x="7" y="12.5" text-anchor="middle" font-size="7" font-family="Liberation Sans" fill="#111">BS</text></g><line x1="54" y1="1051.8" x2="64" y2="1051.8" stroke="#8a8a8a" stroke-width="1" stroke-dasharray="1 1"/><rect x="65" y="1044.8" width="12" height="13" fill="url(#modg)" stroke="#7a7ef4" stroke-width="2"/><g transform="translate(64,1043.8)"><path d="M3 5 Q6 2 11 3.5 L10 6 Q7 5 4 6.5 Z" fill="#4a4a58"/><text x="7" y="12.5" text-anchor="middle" font-size="7" font-family="Liberation Sans" fill="#111">GB</text></g><line x1="54" y1="1069.8" x2="64" y2="1069.8" stroke="#8a8a8a" stroke-width="1" stroke-dasharray="1 1"/><rect x="65" y="1062.8" width="12" height="13" fill="url(#modg)" stroke="#7a7ef4" stroke-width="2"/><g transform="translate(64,1061.8)"><path d="M3 5 Q6 2 11 3.5 L10 6 Q7 5 4 6.5 Z" fill="#4a4a58"/><text x="7" y="12.5" text-anchor="middle" font-size="5.5" font-family="Liberation Sans" fill="#111">CSA</text></g><line x1="54" y1="1087.8" x2="64" y2="1087.8" stroke="#8a8a8a" stroke-width="1" stroke-dasharray="1 1"/><rect x="65" y="1080.8" width="12" height="13" fill="url(#modg)" stroke="#7a7ef4" stroke-width="2"/><g transform="translate(64,1079.8)"><path d="M3 5 Q6 2 11 3.5 L10 6 Q7 5 4 6.5 Z" fill="#4a4a58"/><text x="7" y="12.5" text-anchor="middle" font-size="7" font-family="Liberation Sans" fill="#111">AS</text></g><line x1="54" y1="1105.8" x2="64" y2="1105.8" stroke="#8a8a8a" stroke-width="1" stroke-dasharray="1 1"/><rect x="65" y="1098.8" width="12" height="13" fill="url(#modg)" stroke="#7a7ef4" stroke-width="2"/><g transform="translate(64,1097.8)"><path d="M3 5 Q6 2 11 3.5 L10 6 Q7 5 4 6.5 Z" fill="#4a4a58"/><text x="7" y="12.5" text-anchor="middle" font-size="5.5" font-family="Liberation Sans" fill="#111">NTC</text></g><line x1="54" y1="1123.8" x2="64" y2="1123.8" stroke="#8a8a8a" stroke-width="1" stroke-dasharray="1 1"/><rect x="65" y="1116.8" width="12" height="13" fill="url(#modg)" stroke="#7a7ef4" stroke-width="2"/><g transform="translate(64,1115.8)"><path d="M3 5 Q6 2 11 3.5 L10 6 Q7 5 4 6.5 Z" fill="#4a4a58"/><text x="7" y="12.5" text-anchor="middle" font-size="7" font-family="Liberation Sans" fill="#111">SP</text></g><line x1="54" y1="1141.8" x2="64" y2="1141.8" stroke="#8a8a8a" stroke-width="1" stroke-dasharray="1 1"/><rect x="65" y="1134.8" width="12" height="13" fill="url(#modg)" stroke="#7a7ef4" stroke-width="2"/><g transform="translate(64,1133.8)"><path d="M3 5 Q6 2 11 3.5 L10 6 Q7 5 4 6.5 Z" fill="#4a4a58"/><text x="7" y="12.5" text-anchor="middle" font-size="4.6" font-family="Liberation Sans" fill="#111">PIFM</text></g><line x1="54" y1="1159.8" x2="64" y2="1159.8" stroke="#8a8a8a" stroke-width="1" stroke-dasharray="1 1"/><rect x="65" y="1152.8" width="12" height="13" fill="url(#modg)" stroke="#7a7ef4" stroke-width="2"/><g transform="translate(64,1151.8)"><path d="M3 5 Q6 2 11 3.5 L10 6 Q7 5 4 6.5 Z" fill="#4a4a58"/><text x="7" y="12.5" text-anchor="middle" font-size="4.6" font-family="Liberation Sans" fill="#111">SANS</text></g><line x1="54" y1="1177.8" x2="64" y2="1177.8" stroke="#8a8a8a" stroke-width="1" stroke-dasharray="1 1"/><rect x="65" y="1170.8" width="12" height="13" fill="url(#modg)" stroke="#7a7ef4" stroke-width="2"/><g transform="translate(64,1169.8)"><path d="M3 5 Q6 2 11 3.5 L10 6 Q7 5 4 6.5 Z" fill="#4a4a58"/><text x="7" y="12.5" text-anchor="middle" font-size="7" font-family="Liberation Sans" fill="#111">FD</text></g><line x1="54" y1="1195.8" x2="64" y2="1195.8" stroke="#8a8a8a" stroke-width="1" stroke-dasharray="1 1"/><rect x="65" y="1188.8" width="12" height="13" fill="url(#modg)" stroke="#7a7ef4" stroke-width="2"/><g transform="translate(64,1187.8)"><path d="M3 5 Q6 2 11 3.5 L10 6 Q7 5 4 6.5 Z" fill="#4a4a58"/><text x="7" y="12.5" text-anchor="middle" font-size="5.5" font-family="Liberation Sans" fill="#111">NBR</text></g><line x1="54" y1="1213.8" x2="64" y2="1213.8" stroke="#8a8a8a" stroke-width="1" stroke-dasharray="1 1"/><rect x="65" y="1206.8" width="12" height="13" fill="url(#modg)" stroke="#7a7ef4" stroke-width="2"/><g transform="translate(64,1205.8)"><path d="M3 5 Q6 2 11 3.5 L10 6 Q7 5 4 6.5 Z" fill="#4a4a58"/><text x="7" y="12.5" text-anchor="middle" font-size="7" font-family="Liberation Sans" fill="#111">HK</text></g><line x1="54" y1="1231.8" x2="64" y2="1231.8" stroke="#8a8a8a" stroke-width="1" stroke-dasharray="1 1"/><rect x="65" y="1224.8" width="12" height="13" fill="url(#modg)" stroke="#7a7ef4" stroke-width="2"/><g transform="translate(64,1223.8)"><path d="M3 5 Q6 2 11 3.5 L10 6 Q7 5 4 6.5 Z" fill="#4a4a58"/><text x="7" y="12.5" text-anchor="middle" font-size="5.5" font-family="Liberation Sans" fill="#111">EC9</text></g><line x1="54" y1="1249.8" x2="64" y2="1249.8" stroke="#8a8a8a" stroke-width="1" stroke-dasharray="1 1"/><rect x="65" y="1242.8" width="12" height="13" fill="url(#modg)" stroke="#7a7ef4" stroke-width="2"/><g transform="translate(64,1241.8)"><path d="M3 5 Q6 2 11 3.5 L10 6 Q7 5 4 6.5 Z" fill="#4a4a58"/><text x="7" y="12.5" text-anchor="middle" font-size="5.5" font-family="Liberation Sans" fill="#111">ADM</text></g><line x1="54" y1="1267.8" x2="64" y2="1267.8" stroke="#8a8a8a" stroke-width="1" stroke-dasharray="1 1"/><rect x="65" y="1260.8" width="12" height="13" fill="url(#modg)" stroke="#7a7ef4" stroke-width="2"/><g transform="translate(64,1259.8)"><path d="M7 3 V12" stroke="#e02020" stroke-width="1.3"/><path d="M4 6 L10 9" stroke="#222"/><circle cx="7" cy="11" r="1.5" fill="#20a030"/></g><line x1="54" y1="1285.8" x2="64" y2="1285.8" stroke="#8a8a8a" stroke-width="1" stroke-dasharray="1 1"/><rect x="65" y="1278.8" width="12" height="13" fill="url(#modg)" stroke="#7a7ef4" stroke-width="2"/><g transform="translate(64,1277.8)"><rect x="4" y="3" width="6" height="9" fill="#f0f0f0" stroke="#444" stroke-width="0.8"/><circle cx="4" cy="8" r="1.2" fill="#e02020"/><circle cx="10" cy="8" r="1.2" fill="#e02020"/></g><line x1="54" y1="1303.8" x2="64" y2="1303.8" stroke="#8a8a8a" stroke-width="1" stroke-dasharray="1 1"/><rect x="65" y="1296.8" width="12" height="13" fill="url(#modg)" stroke="#7a7ef4" stroke-width="2"/><g transform="translate(64,1295.8)"><rect x="4" y="3" width="6" height="8" fill="#f0f0f0" stroke="#444" stroke-width="0.8"/><circle cx="4" cy="7" r="1.2" fill="#e02020"/><rect x="9" y="9" width="3" height="3" fill="#222"/></g><line x1="54" y1="1321.8" x2="64" y2="1321.8" stroke="#8a8a8a" stroke-width="1" stroke-dasharray="1 1"/><rect x="65" y="1314.8" width="12" height="13" fill="url(#modg)" stroke="#7a7ef4" stroke-width="2"/><g transform="translate(64,1313.8)"><path d="M3 5 H7 M5 5 V10 M3 10 H7" stroke="#3a50d0" stroke-width="1.2"/><rect x="9" y="3" width="2" height="4" fill="#e02020"/><rect x="8" y="7" width="2" height="4" fill="#2a40c0"/></g><line x1="54" y1="1339.8" x2="64" y2="1339.8" stroke="#8a8a8a" stroke-width="1" stroke-dasharray="1 1"/><rect x="65" y="1332.8" width="12" height="13" fill="url(#modg)" stroke="#7a7ef4" stroke-width="2"/><g transform="translate(64,1331.8)"><path d="M3 6 L10 4 V10 L3 12 Z" fill="#a8b8d0" stroke="#3a4a6a" stroke-width="0.8"/><path d="M3 6 L5 4 L12 3 L10 4" fill="#d0d8e8" stroke="#3a4a6a" stroke-width="0.6"/></g><line x1="54" y1="1357.8" x2="64" y2="1357.8" stroke="#8a8a8a" stroke-width="1" stroke-dasharray="1 1"/><rect x="65" y="1350.8" width="12" height="13" fill="url(#modg)" stroke="#7a7ef4" stroke-width="2"/><g transform="translate(64,1349.8)"><path d="M3 4 L11 4 L11 11 L3 11 Z" fill="#2a5ac0"/><path d="M3 4 L11 11" stroke="#9ac8f8" stroke-width="1"/><path d="M2 2 L4 4" stroke="#222"/></g><line x1="54" y1="1375.8" x2="64" y2="1375.8" stroke="#8a8a8a" stroke-width="1" stroke-dasharray="1 1"/><rect x="65" y="1368.8" width="12" height="13" fill="url(#modg)" stroke="#7a7ef4" stroke-width="2"/><g transform="translate(64,1367.8)"><path d="M5 3 V12 M3 12 H9" stroke="#222" stroke-width="1.2"/><circle cx="7" cy="12" r="1.5" fill="#20a030"/></g></svg><div style="position:absolute;left:291px;top:123px;width:16px;height:1252px;background:#f0f0f0"></div><div style="position:absolute;left:291px;top:150px;width:15px;height:701px;background:#cdcdcd"></div><svg style="left:291px;top:123px" width="16" height="1252" viewBox="0 0 16 1252"><path d="M4.5 12 L8 8.5 L11.5 12" stroke="#606060" stroke-width="2" fill="none"/><path d="M4.5 1240 L8 1243.5 L11.5 1240" stroke="#606060" stroke-width="2" fill="none"/></svg><div style="position:absolute;left:4px;top:1375px;width:303px;height:18px;background:#f0f0f0"></div><div style="position:absolute;left:21px;top:1377px;width:140px;height:15px;background:#cdcdcd"></div><svg style="left:4px;top:1375px" width="303" height="18" viewBox="0 0 303 18"><path d="M11 5.5 L7.5 9 L11 12.5" stroke="#606060" stroke-width="2" fill="none"/><path d="M278 5.5 L281.5 9 L278 12.5" stroke="#606060" stroke-width="2" fill="none"/></svg><div style="position:absolute;left:307px;top:120px;width:2px;height:1273px;background:#eef2f8"></div><div style="position:absolute;left:290px;top:123px;width:1px;height:1252px;background:#fff"></div><div style="position:absolute;left:0px;top:1396px;width:316px;height:24px;background:#d0d5de"></div><div style="position:absolute;left:5px;top:1396px;width:53px;height:21px;background:#edf0f6;border:1px solid #c0ccd8;border-top:none;border-radius:0 0 3px 3px"></div><svg style="left:6px;top:1398px" width="200" height="18" viewBox="0 0 200 18"><rect x="0.5" y="4.5" width="10" height="9" fill="#f3d24a" stroke="#b09020"/><rect x="3" y="1" width="12" height="3" fill="#3d6fd0"/><circle cx="11" cy="11" r="3.5" fill="#cfe0f8" stroke="#305080" stroke-width="1.3"/><path d="M13.5 13.5 L16 16" stroke="#b06a20" stroke-width="2"/><rect x="61.5" y="4.5" width="12" height="12" fill="#e0e8f8" stroke="#405080"/><path d="M63 8 H72 M63 11 H72 M63 14 H72" stroke="#3d6fd0"/><path d="M64 4 L70 1 L75 3 L70 6 Z" fill="#8a7050"/><path d="M125 16.5 H137" stroke="#3a5fc0" stroke-width="2"/><path d="M127 15 Q127 9 132 8" stroke="#3a5fc0" stroke-width="1.8" fill="none"/><path d="M129 9 L135 2 L138 4 L132 11 Z" fill="#5a80d0" stroke="#2a4aa0" stroke-width="0.8"/><path d="M134 13 V16" stroke="#3a5fc0" stroke-width="2"/></svg><div class="t" style="left:24.00px;top:1400.84px;font-size:12px;line-height:12px;color:#3a3f5a;">Daten</div><div class="t" style="left:84.00px;top:1400.84px;font-size:12px;line-height:12px;color:#3a3f5a;">Zeigen</div><div class="t" style="left:148.00px;top:1400.84px;font-size:12px;line-height:12px;color:#3a3f5a;">Ansichten</div><div style="position:absolute;left:315px;top:101px;width:2081px;height:967px;background:#d0d5de"></div><div style="position:absolute;left:315px;top:99px;width:2px;height:969px;background:#6a6a6a"></div><div style="position:absolute;left:315px;top:99px;width:2081px;height:2px;background:#6f6f6f"></div><div style="position:absolute;left:317px;top:101px;width:2077px;height:965px;background:#fff"></div><div style="position:absolute;left:2394px;top:101px;width:1px;height:966px;background:#e2e2e2"></div><div style="position:absolute;left:317px;top:1066px;width:2078px;height:1px;background:#e2e2e2"></div><div class="t" style="left:321.00px;top:107.69px;font-size:11px;line-height:11px;color:#000;letter-spacing:-0.1px">LF1 : Flächenbelastung</div><div class="t" style="left:321.00px;top:121.69px;font-size:11px;line-height:11px;color:#000;letter-spacing:-0.1px">Belastung [kN/m^2]</div><svg style="left:317px;top:101px" width="2077" height="965" viewBox="317 101 2077 965"><defs><clipPath id="ringclip"><ellipse cx="1130" cy="608" rx="676" ry="234"/></clipPath><linearGradient id="tubeH" x1="0" y1="0" x2="0" y2="1"><stop offset="0" stop-color="#7a7a7a"/><stop offset="0.25" stop-color="#b8b8b8"/><stop offset="0.6" stop-color="#e6e6e6"/><stop offset="0.85" stop-color="#b0b0b0"/><stop offset="1" stop-color="#7a7a7a"/></linearGradient></defs><ellipse cx="1130" cy="548" rx="617.6" ry="213.7" fill="#e6cde6"/><ellipse cx="1130" cy="608" rx="676" ry="234" fill="#9c9c9c"/><ellipse cx="1130" cy="607" rx="617.6" ry="213.4" fill="#8f8290"/><ellipse cx="1130" cy="548" rx="617.6" ry="213.7" fill="#928a93" clip-path="url(#ringclip)"/><ellipse cx="1130" cy="608" rx="676" ry="234" fill="none" stroke="#22e022" stroke-width="1.6"/><path d="M722.3 410.8L729.6 408.9L737.0 407.0L744.4 405.2L752.0 403.4L759.5 401.7L767.2 400.0L774.9 398.3L782.6 396.6L790.5 395.0L798.3 393.4L806.3 391.9L814.3 390.4L822.3 388.9L830.4 387.5L838.6 386.1L846.8 384.8L855.0 383.5L863.3 382.2L871.7 381.0L880.1 379.8L888.5 378.6L897.0 377.5L905.5 376.5L914.1 375.4L922.7 374.4L931.3 373.5L939.9 372.6L948.6 371.7L957.4 370.9L966.1 370.1L974.9 369.3L983.7 368.6L992.6 368.0L1001.4 367.3L1010.3 366.7L1019.2 366.2L1028.1 365.7L1037.1 365.3L1046.0 364.8L1055.0 364.5L1064.0 364.1L1073.0 363.8L1082.0 363.6L1091.0 363.4L1100.0 363.2L1109.1 363.1L1118.1 363.0L1127.1 363.0L1136.2 363.0L1145.2 363.1L1154.2 363.2L1163.2 363.3L1172.3 363.5L1181.3 363.7L1190.3 363.9L1199.3 364.2L1208.2 364.6L1217.2 365.0L1226.2 365.4L1235.1 365.9" fill="none" stroke="#767676" stroke-width="1.9"/><path d="M723.1 411.8L730.4 409.9L737.7 408.1L745.1 406.3L752.6 404.5L760.2 402.7L767.8 401.0L775.5 399.3L783.3 397.7L791.1 396.1L798.9 394.5L806.9 393.0L814.8 391.5L822.9 390.1L831.0 388.6L839.1 387.3L847.3 385.9L855.5 384.6L863.8 383.4L872.2 382.1L880.5 381.0L888.9 379.8L897.4 378.7L905.9 377.6L914.5 376.6L923.0 375.6L931.6 374.7L940.3 373.8L949.0 372.9L957.7 372.1L966.4 371.3L975.2 370.5L984.0 369.8L992.8 369.2L1001.7 368.6L1010.5 368.0L1019.4 367.4L1028.3 366.9L1037.2 366.5L1046.2 366.1L1055.1 365.7L1064.1 365.4L1073.1 365.1L1082.1 364.8L1091.1 364.6L1100.1 364.5L1109.1 364.4L1118.1 364.3L1127.1 364.3L1136.1 364.3L1145.2 364.3L1154.2 364.4L1163.2 364.5L1172.2 364.7L1181.2 364.9L1190.2 365.2L1199.1 365.5L1208.1 365.8L1217.1 366.2L1226.0 366.6L1234.9 367.1" fill="none" stroke="#858585" stroke-width="1.9"/><path d="M723.8 412.8L731.1 410.9L738.4 409.1L745.8 407.3L753.3 405.5L760.9 403.8L768.5 402.1L776.2 400.4L783.9 398.8L791.7 397.2L799.5 395.6L807.5 394.1L815.4 392.6L823.4 391.2L831.5 389.8L839.6 388.4L847.8 387.1L856.0 385.8L864.3 384.5L872.6 383.3L881.0 382.1L889.4 381.0L897.8 379.9L906.3 378.8L914.8 377.8L923.4 376.8L932.0 375.9L940.6 375.0L949.3 374.1L958.0 373.3L966.7 372.5L975.5 371.8L984.3 371.1L993.1 370.4L1001.9 369.8L1010.7 369.2L1019.6 368.7L1028.5 368.2L1037.4 367.7L1046.3 367.3L1055.3 366.9L1064.2 366.6L1073.2 366.3L1082.2 366.1L1091.2 365.9L1100.1 365.7L1109.1 365.6L1118.1 365.5L1127.1 365.5L1136.1 365.5L1145.1 365.6L1154.1 365.7L1163.1 365.8L1172.1 366.0L1181.1 366.2L1190.1 366.4L1199.0 366.7L1208.0 367.1L1216.9 367.5L1225.8 367.9L1234.7 368.4" fill="none" stroke="#949494" stroke-width="1.9"/><path d="M724.5 413.8L731.8 412.0L739.1 410.1L746.5 408.3L754.0 406.6L761.6 404.8L769.1 403.1L776.8 401.5L784.5 399.9L792.3 398.3L800.1 396.7L808.0 395.2L816.0 393.7L824.0 392.3L832.1 390.9L840.2 389.5L848.3 388.2L856.5 386.9L864.8 385.7L873.1 384.5L881.4 383.3L889.8 382.1L898.3 381.1L906.7 380.0L915.2 379.0L923.8 378.0L932.4 377.1L941.0 376.2L949.6 375.3L958.3 374.5L967.0 373.7L975.8 373.0L984.5 372.3L993.3 371.6L1002.1 371.0L1011.0 370.4L1019.8 369.9L1028.7 369.4L1037.6 369.0L1046.5 368.6L1055.4 368.2L1064.4 367.9L1073.3 367.6L1082.3 367.3L1091.2 367.1L1100.2 367.0L1109.2 366.9L1118.2 366.8L1127.1 366.8L1136.1 366.8L1145.1 366.8L1154.1 366.9L1163.1 367.0L1172.0 367.2L1181.0 367.4L1189.9 367.7L1198.9 368.0L1207.8 368.3L1216.7 368.7L1225.6 369.1L1234.5 369.6" fill="none" stroke="#a2a2a2" stroke-width="1.9"/><path d="M725.3 414.8L732.5 413.0L739.9 411.1L747.3 409.4L754.7 407.6L762.2 405.9L769.8 404.2L777.5 402.6L785.2 400.9L792.9 399.4L800.7 397.8L808.6 396.3L816.6 394.8L824.6 393.4L832.6 392.0L840.7 390.7L848.8 389.3L857.0 388.1L865.3 386.8L873.6 385.6L881.9 384.4L890.3 383.3L898.7 382.2L907.1 381.2L915.6 380.2L924.2 379.2L932.7 378.3L941.3 377.4L950.0 376.5L958.6 375.7L967.3 374.9L976.0 374.2L984.8 373.5L993.6 372.9L1002.4 372.2L1011.2 371.7L1020.0 371.1L1028.9 370.7L1037.8 370.2L1046.6 369.8L1055.6 369.4L1064.5 369.1L1073.4 368.8L1082.3 368.6L1091.3 368.4L1100.3 368.2L1109.2 368.1L1118.2 368.0L1127.1 368.0L1136.1 368.0L1145.1 368.1L1154.0 368.1L1163.0 368.3L1172.0 368.5L1180.9 368.7L1189.8 368.9L1198.8 369.2L1207.7 369.6L1216.6 369.9L1225.5 370.4L1234.3 370.8" fill="none" stroke="#b0b0b0" stroke-width="1.9"/><path d="M726.0 415.8L733.3 414.0L740.6 412.2L748.0 410.4L755.4 408.6L762.9 406.9L770.5 405.3L778.1 403.6L785.8 402.0L793.5 400.4L801.4 398.9L809.2 397.4L817.1 396.0L825.1 394.5L833.1 393.1L841.2 391.8L849.4 390.5L857.5 389.2L865.8 388.0L874.0 386.8L882.3 385.6L890.7 384.5L899.1 383.4L907.5 382.4L916.0 381.4L924.5 380.4L933.1 379.5L941.7 378.6L950.3 377.7L958.9 376.9L967.6 376.1L976.3 375.4L985.1 374.7L993.8 374.1L1002.6 373.5L1011.4 372.9L1020.2 372.4L1029.1 371.9L1037.9 371.4L1046.8 371.0L1055.7 370.7L1064.6 370.4L1073.5 370.1L1082.4 369.8L1091.4 369.6L1100.3 369.5L1109.3 369.4L1118.2 369.3L1127.1 369.3L1136.1 369.3L1145.0 369.3L1154.0 369.4L1162.9 369.5L1171.9 369.7L1180.8 369.9L1189.7 370.2L1198.6 370.5L1207.5 370.8L1216.4 371.2L1225.3 371.6L1234.1 372.1" fill="none" stroke="#b9b9b9" stroke-width="1.9"/><path d="M726.8 416.8L734.0 415.0L741.3 413.2L748.7 411.4L756.1 409.7L763.6 408.0L771.1 406.3L778.7 404.7L786.4 403.1L794.2 401.5L802.0 400.0L809.8 398.5L817.7 397.1L825.7 395.7L833.7 394.3L841.8 392.9L849.9 391.6L858.0 390.4L866.2 389.1L874.5 387.9L882.8 386.8L891.1 385.7L899.5 384.6L908.0 383.5L916.4 382.5L924.9 381.6L933.5 380.7L942.0 379.8L950.6 378.9L959.3 378.1L967.9 377.4L976.6 376.6L985.3 375.9L994.1 375.3L1002.8 374.7L1011.6 374.1L1020.4 373.6L1029.3 373.1L1038.1 372.7L1047.0 372.3L1055.8 371.9L1064.7 371.6L1073.6 371.3L1082.5 371.1L1091.4 370.9L1100.4 370.7L1109.3 370.6L1118.2 370.5L1127.2 370.5L1136.1 370.5L1145.0 370.6L1154.0 370.6L1162.9 370.8L1171.8 370.9L1180.7 371.2L1189.6 371.4L1198.5 371.7L1207.4 372.0L1216.3 372.4L1225.1 372.8L1234.0 373.3" fill="none" stroke="#c2c2c2" stroke-width="1.9"/><path d="M727.5 417.8L734.7 416.0L742.0 414.2L749.4 412.5L756.8 410.7L764.2 409.0L771.8 407.4L779.4 405.8L787.1 404.2L794.8 402.6L802.6 401.1L810.4 399.6L818.3 398.2L826.2 396.8L834.2 395.4L842.3 394.1L850.4 392.8L858.5 391.5L866.7 390.3L875.0 389.1L883.3 387.9L891.6 386.8L900.0 385.8L908.4 384.7L916.8 383.7L925.3 382.8L933.8 381.8L942.4 381.0L951.0 380.1L959.6 379.3L968.2 378.6L976.9 377.8L985.6 377.2L994.3 376.5L1003.1 375.9L1011.8 375.4L1020.6 374.8L1029.4 374.4L1038.3 373.9L1047.1 373.5L1056.0 373.2L1064.8 372.8L1073.7 372.6L1082.6 372.3L1091.5 372.1L1100.4 372.0L1109.3 371.9L1118.2 371.8L1127.2 371.8L1136.1 371.8L1145.0 371.8L1153.9 371.9L1162.8 372.0L1171.7 372.2L1180.6 372.4L1189.5 372.7L1198.4 373.0L1207.3 373.3L1216.1 373.7L1224.9 374.1L1233.8 374.5" fill="none" stroke="#cbcbcb" stroke-width="1.9"/><path d="M728.3 418.8L735.5 417.0L742.7 415.2L750.1 413.5L757.5 411.8L764.9 410.1L772.4 408.4L780.0 406.8L787.7 405.3L795.4 403.7L803.2 402.2L811.0 400.7L818.9 399.3L826.8 397.9L834.8 396.5L842.8 395.2L850.9 393.9L859.0 392.6L867.2 391.4L875.4 390.2L883.7 389.1L892.0 388.0L900.4 386.9L908.8 385.9L917.2 384.9L925.7 384.0L934.2 383.0L942.7 382.2L951.3 381.3L959.9 380.5L968.5 379.8L977.2 379.1L985.9 378.4L994.6 377.8L1003.3 377.2L1012.1 376.6L1020.8 376.1L1029.6 375.6L1038.4 375.2L1047.3 374.8L1056.1 374.4L1065.0 374.1L1073.8 373.8L1082.7 373.6L1091.6 373.4L1100.5 373.2L1109.4 373.1L1118.3 373.0L1127.2 373.0L1136.1 373.0L1145.0 373.1L1153.9 373.1L1162.8 373.3L1171.6 373.4L1180.5 373.7L1189.4 373.9L1198.3 374.2L1207.1 374.5L1215.9 374.9L1224.8 375.3L1233.6 375.8" fill="none" stroke="#d2d2d2" stroke-width="1.9"/><path d="M729.0 419.9L736.2 418.0L743.4 416.3L750.8 414.5L758.1 412.8L765.6 411.2L773.1 409.5L780.7 407.9L788.3 406.3L796.0 404.8L803.8 403.3L811.6 401.8L819.4 400.4L827.4 399.0L835.3 397.6L843.3 396.3L851.4 395.0L859.5 393.8L867.7 392.6L875.9 391.4L884.2 390.3L892.5 389.2L900.8 388.1L909.2 387.1L917.6 386.1L926.0 385.2L934.5 384.2L943.1 383.4L951.6 382.5L960.2 381.8L968.8 381.0L977.5 380.3L986.1 379.6L994.8 379.0L1003.5 378.4L1012.3 377.8L1021.0 377.3L1029.8 376.8L1038.6 376.4L1047.4 376.0L1056.2 375.6L1065.1 375.3L1073.9 375.1L1082.8 374.8L1091.7 374.6L1100.5 374.5L1109.4 374.4L1118.3 374.3L1127.2 374.3L1136.1 374.3L1144.9 374.3L1153.8 374.4L1162.7 374.5L1171.6 374.7L1180.4 374.9L1189.3 375.2L1198.1 375.4L1207.0 375.8L1215.8 376.1L1224.6 376.6L1233.4 377.0" fill="none" stroke="#d9d9d9" stroke-width="1.9"/><path d="M729.7 420.9L736.9 419.1L744.2 417.3L751.5 415.6L758.8 413.9L766.3 412.2L773.8 410.6L781.3 409.0L789.0 407.4L796.6 405.9L804.4 404.4L812.2 402.9L820.0 401.5L827.9 400.1L835.9 398.8L843.9 397.5L851.9 396.2L860.0 394.9L868.2 393.7L876.4 392.6L884.6 391.4L892.9 390.3L901.2 389.3L909.6 388.3L918.0 387.3L926.4 386.3L934.9 385.4L943.4 384.6L951.9 383.7L960.5 383.0L969.1 382.2L977.7 381.5L986.4 380.8L995.1 380.2L1003.8 379.6L1012.5 379.1L1021.2 378.5L1030.0 378.1L1038.8 377.6L1047.6 377.2L1056.4 376.9L1065.2 376.6L1074.0 376.3L1082.9 376.1L1091.7 375.9L1100.6 375.7L1109.4 375.6L1118.3 375.5L1127.2 375.5L1136.0 375.5L1144.9 375.6L1153.8 375.6L1162.6 375.8L1171.5 375.9L1180.3 376.1L1189.2 376.4L1198.0 376.7L1206.8 377.0L1215.6 377.4L1224.4 377.8L1233.2 378.2" fill="none" stroke="#dfdfdf" stroke-width="1.9"/><path d="M730.5 421.9L737.6 420.1L744.9 418.3L752.2 416.6L759.5 414.9L766.9 413.3L774.4 411.6L782.0 410.0L789.6 408.5L797.2 407.0L805.0 405.5L812.8 404.0L820.6 402.6L828.5 401.2L836.4 399.9L844.4 398.6L852.4 397.3L860.5 396.1L868.7 394.9L876.9 393.7L885.1 392.6L893.3 391.5L901.6 390.5L910.0 389.4L918.4 388.5L926.8 387.5L935.3 386.6L943.7 385.8L952.3 385.0L960.8 384.2L969.4 383.4L978.0 382.7L986.7 382.1L995.3 381.4L1004.0 380.8L1012.7 380.3L1021.4 379.8L1030.2 379.3L1038.9 378.9L1047.7 378.5L1056.5 378.1L1065.3 377.8L1074.1 377.5L1083.0 377.3L1091.8 377.1L1100.6 377.0L1109.5 376.9L1118.3 376.8L1127.2 376.8L1136.0 376.8L1144.9 376.8L1153.7 376.9L1162.6 377.0L1171.4 377.2L1180.2 377.4L1189.1 377.6L1197.9 377.9L1206.7 378.3L1215.5 378.6L1224.2 379.0L1233.0 379.5" fill="none" stroke="#dadada" stroke-width="1.9"/><path d="M731.2 422.9L738.4 421.1L745.6 419.3L752.9 417.6L760.2 416.0L767.6 414.3L775.1 412.7L782.6 411.1L790.2 409.6L797.9 408.1L805.6 406.6L813.3 405.1L821.2 403.7L829.0 402.4L837.0 401.0L844.9 399.7L853.0 398.5L861.0 397.2L869.2 396.0L877.3 394.9L885.5 393.8L893.8 392.7L902.1 391.6L910.4 390.6L918.8 389.7L927.2 388.7L935.6 387.8L944.1 387.0L952.6 386.2L961.1 385.4L969.7 384.6L978.3 383.9L986.9 383.3L995.6 382.6L1004.2 382.1L1012.9 381.5L1021.6 381.0L1030.4 380.5L1039.1 380.1L1047.9 379.7L1056.6 379.4L1065.4 379.1L1074.2 378.8L1083.0 378.6L1091.9 378.4L1100.7 378.2L1109.5 378.1L1118.4 378.0L1127.2 378.0L1136.0 378.0L1144.9 378.1L1153.7 378.1L1162.5 378.3L1171.3 378.4L1180.2 378.6L1189.0 378.9L1197.8 379.2L1206.5 379.5L1215.3 379.9L1224.1 380.3L1232.8 380.7" fill="none" stroke="#cecece" stroke-width="1.9"/><path d="M732.0 423.9L739.1 422.1L746.3 420.4L753.6 418.7L760.9 417.0L768.3 415.4L775.7 413.8L783.3 412.2L790.8 410.6L798.5 409.1L806.2 407.7L813.9 406.2L821.7 404.8L829.6 403.5L837.5 402.1L845.5 400.9L853.5 399.6L861.5 398.4L869.6 397.2L877.8 396.0L886.0 394.9L894.2 393.8L902.5 392.8L910.8 391.8L919.2 390.8L927.6 389.9L936.0 389.0L944.4 388.2L952.9 387.4L961.5 386.6L970.0 385.9L978.6 385.2L987.2 384.5L995.8 383.9L1004.5 383.3L1013.1 382.7L1021.8 382.2L1030.5 381.8L1039.3 381.4L1048.0 381.0L1056.8 380.6L1065.6 380.3L1074.3 380.0L1083.1 379.8L1091.9 379.6L1100.7 379.5L1109.6 379.4L1118.4 379.3L1127.2 379.3L1136.0 379.3L1144.8 379.3L1153.6 379.4L1162.5 379.5L1171.3 379.7L1180.1 379.9L1188.8 380.1L1197.6 380.4L1206.4 380.7L1215.2 381.1L1223.9 381.5L1232.6 381.9" fill="none" stroke="#c0c0c0" stroke-width="1.9"/><path d="M732.7 424.9L739.8 423.1L747.0 421.4L754.3 419.7L761.6 418.0L769.0 416.4L776.4 414.8L783.9 413.3L791.5 411.7L799.1 410.2L806.8 408.8L814.5 407.3L822.3 405.9L830.2 404.6L838.1 403.3L846.0 402.0L854.0 400.7L862.0 399.5L870.1 398.3L878.3 397.2L886.4 396.1L894.7 395.0L902.9 394.0L911.2 393.0L919.6 392.0L927.9 391.1L936.3 390.2L944.8 389.4L953.3 388.6L961.8 387.8L970.3 387.1L978.9 386.4L987.5 385.7L996.1 385.1L1004.7 384.5L1013.4 384.0L1022.0 383.5L1030.7 383.0L1039.4 382.6L1048.2 382.2L1056.9 381.9L1065.7 381.6L1074.4 381.3L1083.2 381.1L1092.0 380.9L1100.8 380.7L1109.6 380.6L1118.4 380.5L1127.2 380.5L1136.0 380.5L1144.8 380.6L1153.6 380.6L1162.4 380.8L1171.2 380.9L1180.0 381.1L1188.7 381.4L1197.5 381.7L1206.3 382.0L1215.0 382.3L1223.7 382.7L1232.4 383.2" fill="none" stroke="#acacac" stroke-width="1.9"/><path d="M733.4 425.9L740.6 424.1L747.7 422.4L755.0 420.7L762.3 419.1L769.6 417.5L777.1 415.9L784.6 414.3L792.1 412.8L799.7 411.3L807.4 409.9L815.1 408.4L822.9 407.1L830.7 405.7L838.6 404.4L846.5 403.1L854.5 401.9L862.5 400.7L870.6 399.5L878.7 398.4L886.9 397.3L895.1 396.2L903.3 395.2L911.6 394.2L920.0 393.2L928.3 392.3L936.7 391.4L945.1 390.6L953.6 389.8L962.1 389.0L970.6 388.3L979.1 387.6L987.7 386.9L996.3 386.3L1004.9 385.7L1013.6 385.2L1022.2 384.7L1030.9 384.3L1039.6 383.8L1048.3 383.4L1057.1 383.1L1065.8 382.8L1074.5 382.5L1083.3 382.3L1092.1 382.1L1100.9 382.0L1109.6 381.9L1118.4 381.8L1127.2 381.8L1136.0 381.8L1144.8 381.8L1153.6 381.9L1162.3 382.0L1171.1 382.2L1179.9 382.4L1188.6 382.6L1197.4 382.9L1206.1 383.2L1214.8 383.6L1223.5 384.0L1232.2 384.4" fill="none" stroke="#9a9a9a" stroke-width="1.9"/><path d="M734.2 426.9L741.3 425.2L748.4 423.5L755.7 421.8L763.0 420.1L770.3 418.5L777.7 416.9L785.2 415.4L792.7 413.9L800.3 412.4L808.0 411.0L815.7 409.5L823.5 408.2L831.3 406.8L839.1 405.5L847.1 404.2L855.0 403.0L863.0 401.8L871.1 400.6L879.2 399.5L887.3 398.4L895.5 397.4L903.8 396.3L912.0 395.4L920.3 394.4L928.7 393.5L937.1 392.6L945.5 391.8L953.9 391.0L962.4 390.2L970.9 389.5L979.4 388.8L988.0 388.2L996.6 387.5L1005.2 387.0L1013.8 386.4L1022.4 385.9L1031.1 385.5L1039.8 385.1L1048.5 384.7L1057.2 384.3L1065.9 384.0L1074.7 383.8L1083.4 383.5L1092.1 383.4L1100.9 383.2L1109.7 383.1L1118.4 383.0L1127.2 383.0L1136.0 383.0L1144.7 383.1L1153.5 383.1L1162.3 383.3L1171.0 383.4L1179.8 383.6L1188.5 383.9L1197.3 384.1L1206.0 384.5L1214.7 384.8L1223.4 385.2L1232.0 385.6" fill="none" stroke="#8e8e8e" stroke-width="1.9"/><path d="M734.9 427.9L742.0 426.2L749.2 424.5L756.4 422.8L763.6 421.2L771.0 419.6L778.4 418.0L785.9 416.5L793.4 415.0L801.0 413.5L808.6 412.1L816.3 410.6L824.0 409.3L831.8 407.9L839.7 406.6L847.6 405.4L855.5 404.1L863.5 403.0L871.6 401.8L879.7 400.7L887.8 399.6L896.0 398.5L904.2 397.5L912.4 396.5L920.7 395.6L929.1 394.7L937.4 393.8L945.8 393.0L954.3 392.2L962.7 391.4L971.2 390.7L979.7 390.0L988.3 389.4L996.8 388.8L1005.4 388.2L1014.0 387.7L1022.6 387.2L1031.3 386.7L1040.0 386.3L1048.6 385.9L1057.3 385.6L1066.0 385.3L1074.8 385.0L1083.5 384.8L1092.2 384.6L1101.0 384.5L1109.7 384.4L1118.5 384.3L1127.2 384.3L1136.0 384.3L1144.7 384.3L1153.5 384.4L1162.2 384.5L1171.0 384.7L1179.7 384.9L1188.4 385.1L1197.1 385.4L1205.8 385.7L1214.5 386.1L1223.2 386.5L1231.9 386.9" fill="none" stroke="#8c8c8c" stroke-width="1.9"/><path d="M1683.0 462.6L1688.3 465.2L1693.5 467.8L1698.6 470.5L1703.6 473.2L1708.5 475.9L1713.4 478.6L1718.1 481.4L1722.7 484.1L1727.2 486.9L1731.6 489.7L1735.9 492.6L1740.1 495.4L1744.2 498.3L1748.2 501.2L1752.1 504.1L1755.9 507.0L1759.6 509.9L1763.1 512.9L1766.6 515.9L1769.9 518.9L1773.2 521.9L1776.3 524.9L1779.3 527.9L1782.2 531.0L1785.0 534.1L1787.6 537.1L1790.2 540.2L1792.6 543.3L1795.0 546.4L1797.2 549.6L1799.3 552.7L1801.2 555.8L1803.1 559.0L1804.9 562.1L1806.5 565.3L1808.0 568.5L1809.4 571.7L1810.7 574.9L1811.8 578.1L1812.9 581.3L1813.8 584.5L1814.6 587.7L1815.3 590.9L1815.9 594.1L1816.3 597.3L1816.7 600.5L1816.9 603.8L1817.0 607.0L1817.0 610.2L1816.8 613.4L1816.6 616.6L1816.2 619.9L1815.7 623.1L1815.1 626.3L1814.4 629.5L1813.5 632.7L1812.5 635.9L1811.4 639.1L1810.2 642.3L1808.9 645.5" fill="none" stroke="#5a5a5a" stroke-width="1.9"/><path d="M1682.0 463.4L1687.3 465.9L1692.5 468.6L1697.6 471.2L1702.6 473.9L1707.5 476.6L1712.3 479.3L1717.0 482.0L1721.6 484.8L1726.1 487.5L1730.5 490.3L1734.8 493.1L1739.0 496.0L1743.1 498.8L1747.1 501.7L1751.0 504.6L1754.8 507.5L1758.4 510.4L1762.0 513.4L1765.4 516.3L1768.8 519.3L1772.0 522.3L1775.1 525.3L1778.1 528.3L1781.0 531.4L1783.8 534.4L1786.4 537.5L1789.0 540.6L1791.4 543.7L1793.7 546.8L1796.0 549.9L1798.0 553.0L1800.0 556.1L1801.9 559.2L1803.6 562.4L1805.3 565.5L1806.8 568.7L1808.2 571.9L1809.4 575.0L1810.6 578.2L1811.7 581.4L1812.6 584.6L1813.4 587.8L1814.1 591.0L1814.6 594.2L1815.1 597.4L1815.4 600.6L1815.6 603.8L1815.7 607.0L1815.7 610.2L1815.6 613.4L1815.3 616.6L1814.9 619.8L1814.5 623.0L1813.8 626.2L1813.1 629.4L1812.3 632.6L1811.3 635.8L1810.2 638.9L1809.0 642.1L1807.7 645.3" fill="none" stroke="#656565" stroke-width="1.9"/><path d="M1680.9 464.1L1686.2 466.7L1691.4 469.3L1696.5 471.9L1701.5 474.6L1706.4 477.2L1711.2 479.9L1716.0 482.6L1720.6 485.4L1725.1 488.1L1729.4 490.9L1733.7 493.7L1737.9 496.6L1742.0 499.4L1746.0 502.3L1749.9 505.1L1753.6 508.0L1757.3 510.9L1760.8 513.9L1764.3 516.8L1767.6 519.8L1770.8 522.8L1773.9 525.7L1776.9 528.8L1779.8 531.8L1782.6 534.8L1785.2 537.9L1787.8 540.9L1790.2 544.0L1792.5 547.1L1794.7 550.2L1796.8 553.3L1798.8 556.4L1800.7 559.5L1802.4 562.6L1804.0 565.8L1805.5 568.9L1806.9 572.0L1808.2 575.2L1809.4 578.4L1810.4 581.5L1811.3 584.7L1812.1 587.9L1812.8 591.1L1813.4 594.2L1813.8 597.4L1814.2 600.6L1814.4 603.8L1814.5 607.0L1814.5 610.2L1814.3 613.4L1814.1 616.5L1813.7 619.7L1813.2 622.9L1812.6 626.1L1811.9 629.3L1811.0 632.5L1810.0 635.6L1809.0 638.8L1807.8 641.9L1806.4 645.1" fill="none" stroke="#707070" stroke-width="1.9"/><path d="M1679.9 464.8L1685.2 467.4L1690.4 470.0L1695.5 472.6L1700.5 475.2L1705.4 477.9L1710.2 480.6L1714.9 483.3L1719.5 486.0L1724.0 488.8L1728.4 491.5L1732.6 494.3L1736.8 497.1L1740.9 500.0L1744.9 502.8L1748.7 505.7L1752.5 508.5L1756.1 511.4L1759.7 514.4L1763.1 517.3L1766.4 520.2L1769.6 523.2L1772.7 526.2L1775.7 529.2L1778.6 532.2L1781.4 535.2L1784.0 538.2L1786.6 541.3L1789.0 544.3L1791.3 547.4L1793.5 550.5L1795.6 553.5L1797.6 556.6L1799.4 559.7L1801.2 562.8L1802.8 566.0L1804.3 569.1L1805.7 572.2L1807.0 575.4L1808.1 578.5L1809.2 581.7L1810.1 584.8L1810.9 588.0L1811.6 591.1L1812.1 594.3L1812.6 597.5L1812.9 600.6L1813.1 603.8L1813.2 607.0L1813.2 610.2L1813.1 613.3L1812.8 616.5L1812.4 619.7L1812.0 622.8L1811.3 626.0L1810.6 629.2L1809.8 632.3L1808.8 635.5L1807.7 638.6L1806.5 641.8L1805.2 644.9" fill="none" stroke="#787878" stroke-width="1.9"/><path d="M1678.9 465.6L1684.2 468.1L1689.4 470.7L1694.5 473.3L1699.5 475.9L1704.3 478.6L1709.1 481.2L1713.8 483.9L1718.4 486.6L1722.9 489.4L1727.3 492.1L1731.5 494.9L1735.7 497.7L1739.8 500.5L1743.7 503.3L1747.6 506.2L1751.3 509.1L1755.0 511.9L1758.5 514.8L1762.0 517.8L1765.3 520.7L1768.5 523.6L1771.6 526.6L1774.6 529.6L1777.4 532.6L1780.2 535.6L1782.8 538.6L1785.4 541.6L1787.8 544.6L1790.1 547.7L1792.3 550.8L1794.4 553.8L1796.4 556.9L1798.2 560.0L1799.9 563.1L1801.6 566.2L1803.1 569.3L1804.5 572.4L1805.7 575.5L1806.9 578.7L1807.9 581.8L1808.8 584.9L1809.6 588.1L1810.3 591.2L1810.9 594.4L1811.4 597.5L1811.7 600.7L1811.9 603.8L1812.0 607.0L1812.0 610.2L1811.8 613.3L1811.6 616.5L1811.2 619.6L1810.7 622.8L1810.1 625.9L1809.4 629.1L1808.5 632.2L1807.6 635.3L1806.5 638.5L1805.3 641.6L1804.0 644.7" fill="none" stroke="#7e7e7e" stroke-width="1.9"/><path d="M1677.9 466.3L1683.2 468.9L1688.4 471.4L1693.4 474.0L1698.4 476.6L1703.3 479.3L1708.1 481.9L1712.7 484.6L1717.3 487.3L1721.8 490.0L1726.2 492.7L1730.4 495.5L1734.6 498.3L1738.7 501.1L1742.6 503.9L1746.5 506.7L1750.2 509.6L1753.8 512.4L1757.4 515.3L1760.8 518.2L1764.1 521.1L1767.3 524.1L1770.4 527.0L1773.4 530.0L1776.2 533.0L1779.0 535.9L1781.6 538.9L1784.2 542.0L1786.6 545.0L1788.9 548.0L1791.1 551.1L1793.2 554.1L1795.1 557.2L1797.0 560.2L1798.7 563.3L1800.3 566.4L1801.8 569.5L1803.2 572.6L1804.5 575.7L1805.6 578.8L1806.7 581.9L1807.6 585.1L1808.4 588.2L1809.1 591.3L1809.7 594.5L1810.1 597.6L1810.4 600.7L1810.6 603.9L1810.7 607.0L1810.7 610.1L1810.6 613.3L1810.3 616.4L1810.0 619.6L1809.5 622.7L1808.9 625.8L1808.1 628.9L1807.3 632.1L1806.3 635.2L1805.2 638.3L1804.0 641.4L1802.7 644.5" fill="none" stroke="#848484" stroke-width="1.9"/><path d="M1676.9 467.1L1682.2 469.6L1687.3 472.1L1692.4 474.7L1697.4 477.3L1702.2 479.9L1707.0 482.6L1711.7 485.2L1716.2 487.9L1720.7 490.6L1725.1 493.3L1729.3 496.1L1733.5 498.8L1737.5 501.6L1741.5 504.4L1745.3 507.3L1749.1 510.1L1752.7 512.9L1756.2 515.8L1759.6 518.7L1762.9 521.6L1766.1 524.5L1769.2 527.4L1772.2 530.4L1775.1 533.3L1777.8 536.3L1780.5 539.3L1783.0 542.3L1785.4 545.3L1787.7 548.3L1789.9 551.3L1792.0 554.4L1793.9 557.4L1795.8 560.5L1797.5 563.6L1799.1 566.6L1800.6 569.7L1802.0 572.8L1803.3 575.9L1804.4 579.0L1805.4 582.1L1806.4 585.2L1807.2 588.3L1807.8 591.4L1808.4 594.5L1808.9 597.6L1809.2 600.8L1809.4 603.9L1809.5 607.0L1809.5 610.1L1809.3 613.3L1809.1 616.4L1808.7 619.5L1808.2 622.6L1807.6 625.7L1806.9 628.8L1806.0 631.9L1805.1 635.1L1804.0 638.2L1802.8 641.2L1801.5 644.3" fill="none" stroke="#888888" stroke-width="1.9"/><path d="M1675.9 467.8L1681.2 470.3L1686.3 472.9L1691.4 475.4L1696.3 478.0L1701.2 480.6L1705.9 483.2L1710.6 485.9L1715.2 488.5L1719.6 491.2L1724.0 493.9L1728.2 496.7L1732.4 499.4L1736.4 502.2L1740.4 505.0L1744.2 507.8L1747.9 510.6L1751.6 513.4L1755.1 516.3L1758.5 519.2L1761.8 522.1L1765.0 525.0L1768.0 527.9L1771.0 530.8L1773.9 533.7L1776.6 536.7L1779.3 539.7L1781.8 542.6L1784.2 545.6L1786.5 548.6L1788.7 551.6L1790.7 554.7L1792.7 557.7L1794.5 560.7L1796.3 563.8L1797.9 566.8L1799.4 569.9L1800.8 573.0L1802.0 576.0L1803.2 579.1L1804.2 582.2L1805.1 585.3L1805.9 588.4L1806.6 591.5L1807.2 594.6L1807.6 597.7L1807.9 600.8L1808.1 603.9L1808.2 607.0L1808.2 610.1L1808.1 613.2L1807.8 616.3L1807.5 619.4L1807.0 622.5L1806.4 625.6L1805.6 628.7L1804.8 631.8L1803.8 634.9L1802.8 638.0L1801.6 641.1L1800.3 644.1" fill="none" stroke="#8a8a8a" stroke-width="1.9"/><path d="M1674.9 468.5L1680.1 471.0L1685.3 473.6L1690.3 476.1L1695.3 478.7L1700.1 481.3L1704.9 483.9L1709.5 486.5L1714.1 489.2L1718.5 491.9L1722.9 494.5L1727.1 497.3L1731.3 500.0L1735.3 502.8L1739.2 505.5L1743.1 508.3L1746.8 511.1L1750.4 513.9L1753.9 516.8L1757.3 519.6L1760.6 522.5L1763.8 525.4L1766.9 528.3L1769.8 531.2L1772.7 534.1L1775.4 537.1L1778.1 540.0L1780.6 543.0L1783.0 546.0L1785.3 548.9L1787.5 551.9L1789.5 555.0L1791.5 558.0L1793.3 561.0L1795.0 564.0L1796.6 567.1L1798.1 570.1L1799.5 573.2L1800.8 576.2L1801.9 579.3L1803.0 582.3L1803.9 585.4L1804.7 588.5L1805.3 591.6L1805.9 594.7L1806.4 597.7L1806.7 600.8L1806.9 603.9L1807.0 607.0L1807.0 610.1L1806.8 613.2L1806.6 616.3L1806.2 619.4L1805.7 622.5L1805.1 625.5L1804.4 628.6L1803.6 631.7L1802.6 634.8L1801.5 637.8L1800.3 640.9L1799.0 644.0" fill="none" stroke="#8b8b8b" stroke-width="1.9"/><path d="M1673.9 469.3L1679.1 471.8L1684.3 474.3L1689.3 476.8L1694.2 479.4L1699.1 481.9L1703.8 484.5L1708.5 487.2L1713.0 489.8L1717.4 492.5L1721.8 495.2L1726.0 497.9L1730.2 500.6L1734.2 503.3L1738.1 506.1L1741.9 508.8L1745.7 511.6L1749.3 514.4L1752.8 517.3L1756.2 520.1L1759.4 523.0L1762.6 525.8L1765.7 528.7L1768.7 531.6L1771.5 534.5L1774.2 537.5L1776.9 540.4L1779.4 543.3L1781.8 546.3L1784.1 549.3L1786.2 552.2L1788.3 555.2L1790.3 558.2L1792.1 561.2L1793.8 564.3L1795.4 567.3L1796.9 570.3L1798.3 573.3L1799.5 576.4L1800.7 579.4L1801.7 582.5L1802.6 585.5L1803.4 588.6L1804.1 591.7L1804.7 594.7L1805.1 597.8L1805.4 600.9L1805.6 603.9L1805.7 607.0L1805.7 610.1L1805.6 613.2L1805.3 616.2L1805.0 619.3L1804.5 622.4L1803.9 625.4L1803.1 628.5L1802.3 631.6L1801.4 634.6L1800.3 637.7L1799.1 640.7L1797.8 643.8" fill="none" stroke="#8b8b8b" stroke-width="1.9"/><path d="M1672.9 470.0L1678.1 472.5L1683.2 475.0L1688.3 477.5L1693.2 480.1L1698.0 482.6L1702.8 485.2L1707.4 487.8L1711.9 490.4L1716.4 493.1L1720.7 495.8L1724.9 498.4L1729.0 501.1L1733.1 503.9L1737.0 506.6L1740.8 509.4L1744.5 512.2L1748.1 514.9L1751.6 517.8L1755.0 520.6L1758.3 523.4L1761.5 526.3L1764.5 529.1L1767.5 532.0L1770.3 534.9L1773.0 537.8L1775.7 540.7L1778.2 543.7L1780.6 546.6L1782.9 549.6L1785.0 552.5L1787.1 555.5L1789.0 558.5L1790.9 561.5L1792.6 564.5L1794.2 567.5L1795.7 570.5L1797.0 573.5L1798.3 576.6L1799.4 579.6L1800.5 582.6L1801.4 585.7L1802.2 588.7L1802.9 591.8L1803.4 594.8L1803.9 597.9L1804.2 600.9L1804.4 604.0L1804.5 607.0L1804.5 610.1L1804.3 613.1L1804.1 616.2L1803.7 619.2L1803.2 622.3L1802.6 625.4L1801.9 628.4L1801.1 631.4L1800.1 634.5L1799.0 637.5L1797.9 640.5L1796.6 643.6" fill="none" stroke="#868686" stroke-width="1.9"/><path d="M1671.9 470.8L1677.1 473.2L1682.2 475.7L1687.2 478.2L1692.1 480.7L1697.0 483.3L1701.7 485.9L1706.3 488.5L1710.8 491.1L1715.3 493.7L1719.6 496.4L1723.8 499.0L1727.9 501.7L1732.0 504.4L1735.9 507.2L1739.7 509.9L1743.4 512.7L1747.0 515.4L1750.5 518.2L1753.8 521.0L1757.1 523.9L1760.3 526.7L1763.3 529.6L1766.3 532.4L1769.1 535.3L1771.9 538.2L1774.5 541.1L1777.0 544.0L1779.4 547.0L1781.6 549.9L1783.8 552.8L1785.9 555.8L1787.8 558.8L1789.6 561.7L1791.4 564.7L1793.0 567.7L1794.4 570.7L1795.8 573.7L1797.1 576.7L1798.2 579.7L1799.2 582.8L1800.1 585.8L1800.9 588.8L1801.6 591.8L1802.2 594.9L1802.6 597.9L1802.9 601.0L1803.1 604.0L1803.2 607.0L1803.2 610.1L1803.1 613.1L1802.8 616.2L1802.5 619.2L1802.0 622.2L1801.4 625.3L1800.7 628.3L1799.8 631.3L1798.9 634.3L1797.8 637.4L1796.6 640.4L1795.3 643.4" fill="none" stroke="#818181" stroke-width="1.9"/><path d="M1670.9 471.5L1676.1 474.0L1681.2 476.4L1686.2 478.9L1691.1 481.4L1695.9 484.0L1700.6 486.5L1705.2 489.1L1709.8 491.7L1714.2 494.3L1718.5 497.0L1722.7 499.6L1726.8 502.3L1730.8 505.0L1734.7 507.7L1738.5 510.4L1742.2 513.2L1745.8 515.9L1749.3 518.7L1752.7 521.5L1756.0 524.3L1759.1 527.2L1762.2 530.0L1765.1 532.8L1767.9 535.7L1770.7 538.6L1773.3 541.5L1775.8 544.4L1778.2 547.3L1780.4 550.2L1782.6 553.1L1784.7 556.1L1786.6 559.0L1788.4 562.0L1790.1 565.0L1791.7 567.9L1793.2 570.9L1794.6 573.9L1795.8 576.9L1797.0 579.9L1798.0 582.9L1798.9 585.9L1799.7 588.9L1800.4 591.9L1800.9 594.9L1801.4 598.0L1801.7 601.0L1801.9 604.0L1802.0 607.0L1802.0 610.1L1801.8 613.1L1801.6 616.1L1801.2 619.1L1800.7 622.1L1800.1 625.2L1799.4 628.2L1798.6 631.2L1797.6 634.2L1796.6 637.2L1795.4 640.2L1794.1 643.2" fill="none" stroke="#7c7c7c" stroke-width="1.9"/><path d="M1669.9 472.3L1675.1 474.7L1680.2 477.1L1685.2 479.6L1690.1 482.1L1694.9 484.6L1699.6 487.2L1704.2 489.8L1708.7 492.3L1713.1 494.9L1717.4 497.6L1721.6 500.2L1725.7 502.9L1729.7 505.6L1733.6 508.2L1737.4 511.0L1741.1 513.7L1744.7 516.4L1748.2 519.2L1751.5 522.0L1754.8 524.8L1757.9 527.6L1761.0 530.4L1763.9 533.2L1766.8 536.1L1769.5 539.0L1772.1 541.8L1774.6 544.7L1777.0 547.6L1779.2 550.5L1781.4 553.4L1783.4 556.4L1785.4 559.3L1787.2 562.2L1788.9 565.2L1790.5 568.1L1792.0 571.1L1793.3 574.1L1794.6 577.1L1795.7 580.0L1796.7 583.0L1797.6 586.0L1798.4 589.0L1799.1 592.0L1799.7 595.0L1800.1 598.0L1800.4 601.0L1800.6 604.0L1800.7 607.0L1800.7 610.0L1800.6 613.1L1800.3 616.1L1800.0 619.1L1799.5 622.1L1798.9 625.1L1798.2 628.1L1797.3 631.1L1796.4 634.1L1795.3 637.0L1794.1 640.0L1792.9 643.0" fill="none" stroke="#747474" stroke-width="1.9"/><path d="M1668.9 473.0L1674.1 475.4L1679.1 477.9L1684.1 480.3L1689.0 482.8L1693.8 485.3L1698.5 487.8L1703.1 490.4L1707.6 493.0L1712.0 495.6L1716.3 498.2L1720.5 500.8L1724.6 503.4L1728.6 506.1L1732.5 508.8L1736.3 511.5L1740.0 514.2L1743.5 516.9L1747.0 519.7L1750.4 522.5L1753.6 525.2L1756.8 528.0L1759.8 530.8L1762.7 533.7L1765.6 536.5L1768.3 539.3L1770.9 542.2L1773.4 545.1L1775.8 547.9L1778.0 550.8L1780.2 553.7L1782.2 556.6L1784.1 559.6L1786.0 562.5L1787.7 565.4L1789.3 568.4L1790.7 571.3L1792.1 574.3L1793.3 577.2L1794.5 580.2L1795.5 583.2L1796.4 586.1L1797.2 589.1L1797.9 592.1L1798.4 595.1L1798.9 598.1L1799.2 601.1L1799.4 604.1L1799.5 607.0L1799.5 610.0L1799.3 613.0L1799.1 616.0L1798.7 619.0L1798.2 622.0L1797.6 625.0L1796.9 628.0L1796.1 630.9L1795.1 633.9L1794.1 636.9L1792.9 639.8L1791.6 642.8" fill="none" stroke="#6d6d6d" stroke-width="1.9"/><path d="M1667.9 473.7L1673.0 476.1L1678.1 478.6L1683.1 481.0L1688.0 483.5L1692.8 486.0L1697.4 488.5L1702.0 491.0L1706.5 493.6L1710.9 496.2L1715.2 498.8L1719.4 501.4L1723.5 504.0L1727.5 506.7L1731.4 509.3L1735.1 512.0L1738.8 514.7L1742.4 517.4L1745.9 520.2L1749.2 522.9L1752.5 525.7L1755.6 528.5L1758.6 531.3L1761.6 534.1L1764.4 536.9L1767.1 539.7L1769.7 542.6L1772.2 545.4L1774.5 548.3L1776.8 551.1L1779.0 554.0L1781.0 556.9L1782.9 559.8L1784.7 562.7L1786.4 565.7L1788.0 568.6L1789.5 571.5L1790.9 574.5L1792.1 577.4L1793.2 580.3L1794.3 583.3L1795.2 586.3L1795.9 589.2L1796.6 592.2L1797.2 595.2L1797.6 598.1L1797.9 601.1L1798.1 604.1L1798.2 607.1L1798.2 610.0L1798.1 613.0L1797.8 616.0L1797.5 618.9L1797.0 621.9L1796.4 624.9L1795.7 627.9L1794.8 630.8L1793.9 633.8L1792.8 636.7L1791.7 639.7L1790.4 642.6" fill="none" stroke="#6e6e6e" stroke-width="1.9"/><path d="M1666.9 474.5L1672.0 476.9L1677.1 479.3L1682.1 481.7L1686.9 484.2L1691.7 486.7L1696.4 489.2L1701.0 491.7L1705.5 494.2L1709.8 496.8L1714.1 499.4L1718.3 502.0L1722.4 504.6L1726.4 507.2L1730.2 509.9L1734.0 512.6L1737.7 515.2L1741.2 517.9L1744.7 520.7L1748.1 523.4L1751.3 526.1L1754.4 528.9L1757.5 531.7L1760.4 534.5L1763.2 537.3L1765.9 540.1L1768.5 542.9L1771.0 545.8L1773.3 548.6L1775.6 551.5L1777.7 554.3L1779.8 557.2L1781.7 560.1L1783.5 563.0L1785.2 565.9L1786.8 568.8L1788.3 571.7L1789.6 574.6L1790.9 577.6L1792.0 580.5L1793.0 583.4L1793.9 586.4L1794.7 589.3L1795.4 592.3L1795.9 595.2L1796.4 598.2L1796.7 601.1L1796.9 604.1L1797.0 607.1L1797.0 610.0L1796.8 613.0L1796.6 615.9L1796.2 618.9L1795.7 621.8L1795.1 624.8L1794.4 627.7L1793.6 630.7L1792.7 633.6L1791.6 636.6L1790.4 639.5L1789.1 642.4" fill="none" stroke="#767676" stroke-width="1.9"/><path d="M1665.9 475.2L1671.0 477.6L1676.1 480.0L1681.0 482.4L1685.9 484.9L1690.7 487.3L1695.3 489.8L1699.9 492.3L1704.4 494.9L1708.8 497.4L1713.0 500.0L1717.2 502.6L1721.3 505.2L1725.2 507.8L1729.1 510.4L1732.9 513.1L1736.5 515.8L1740.1 518.4L1743.6 521.1L1746.9 523.9L1750.1 526.6L1753.3 529.3L1756.3 532.1L1759.2 534.9L1762.0 537.7L1764.7 540.5L1767.3 543.3L1769.8 546.1L1772.1 548.9L1774.4 551.8L1776.5 554.6L1778.6 557.5L1780.5 560.4L1782.3 563.2L1784.0 566.1L1785.6 569.0L1787.0 571.9L1788.4 574.8L1789.6 577.7L1790.8 580.7L1791.8 583.6L1792.7 586.5L1793.5 589.4L1794.1 592.4L1794.7 595.3L1795.1 598.2L1795.4 601.2L1795.6 604.1L1795.7 607.1L1795.7 610.0L1795.6 612.9L1795.3 615.9L1795.0 618.8L1794.5 621.8L1793.9 624.7L1793.2 627.6L1792.4 630.6L1791.4 633.5L1790.4 636.4L1789.2 639.3L1787.9 642.2" fill="none" stroke="#858585" stroke-width="1.9"/><path d="M577.0 753.4L571.7 750.8L566.5 748.2L561.4 745.5L556.4 742.8L551.5 740.1L546.6 737.4L541.9 734.6L537.3 731.9L532.8 729.1L528.4 726.3L524.1 723.4L519.9 720.6L515.8 717.7L511.8 714.8L507.9 711.9L504.1 709.0L500.4 706.1L496.9 703.1L493.4 700.1L490.1 697.1L486.8 694.1L483.7 691.1L480.7 688.1L477.8 685.0L475.0 681.9L472.4 678.9L469.8 675.8L467.4 672.7L465.0 669.6L462.8 666.4L460.7 663.3L458.8 660.2L456.9 657.0L455.1 653.9L453.5 650.7L452.0 647.5L450.6 644.3L449.3 641.1L448.2 637.9L447.1 634.7L446.2 631.5L445.4 628.3L444.7 625.1L444.1 621.9L443.7 618.7L443.3 615.5L443.1 612.2L443.0 609.0L443.0 605.8L443.2 602.6L443.4 599.4L443.8 596.1L444.3 592.9L444.9 589.7L445.6 586.5L446.5 583.3L447.5 580.1L448.6 576.9L449.8 573.7L451.1 570.5" fill="none" stroke="#5a5a5a" stroke-width="1.9"/><path d="M578.0 752.6L572.7 750.1L567.5 747.4L562.4 744.8L557.4 742.1L552.5 739.4L547.7 736.7L543.0 734.0L538.4 731.2L533.9 728.5L529.5 725.7L525.2 722.9L521.0 720.0L516.9 717.2L512.9 714.3L509.0 711.4L505.2 708.5L501.6 705.6L498.0 702.6L494.6 699.7L491.2 696.7L488.0 693.7L484.9 690.7L481.9 687.7L479.0 684.6L476.2 681.6L473.6 678.5L471.0 675.4L468.6 672.3L466.3 669.2L464.0 666.1L462.0 663.0L460.0 659.9L458.1 656.8L456.4 653.6L454.7 650.5L453.2 647.3L451.8 644.1L450.6 641.0L449.4 637.8L448.3 634.6L447.4 631.4L446.6 628.2L445.9 625.0L445.4 621.8L444.9 618.6L444.6 615.4L444.4 612.2L444.3 609.0L444.3 605.8L444.4 602.6L444.7 599.4L445.1 596.2L445.5 593.0L446.2 589.8L446.9 586.6L447.7 583.4L448.7 580.2L449.8 577.1L451.0 573.9L452.3 570.7" fill="none" stroke="#656565" stroke-width="1.9"/><path d="M579.1 751.9L573.8 749.3L568.6 746.7L563.5 744.1L558.5 741.4L553.6 738.8L548.8 736.1L544.0 733.4L539.4 730.6L534.9 727.9L530.6 725.1L526.3 722.3L522.1 719.4L518.0 716.6L514.0 713.7L510.1 710.9L506.4 708.0L502.7 705.1L499.2 702.1L495.7 699.2L492.4 696.2L489.2 693.2L486.1 690.3L483.1 687.2L480.2 684.2L477.4 681.2L474.8 678.1L472.2 675.1L469.8 672.0L467.5 668.9L465.3 665.8L463.2 662.7L461.2 659.6L459.3 656.5L457.6 653.4L456.0 650.2L454.5 647.1L453.1 644.0L451.8 640.8L450.6 637.6L449.6 634.5L448.7 631.3L447.9 628.1L447.2 624.9L446.6 621.8L446.2 618.6L445.8 615.4L445.6 612.2L445.5 609.0L445.5 605.8L445.7 602.6L445.9 599.5L446.3 596.3L446.8 593.1L447.4 589.9L448.1 586.7L449.0 583.5L450.0 580.4L451.0 577.2L452.2 574.1L453.6 570.9" fill="none" stroke="#707070" stroke-width="1.9"/><path d="M580.1 751.2L574.8 748.6L569.6 746.0L564.5 743.4L559.5 740.8L554.6 738.1L549.8 735.4L545.1 732.7L540.5 730.0L536.0 727.2L531.6 724.5L527.4 721.7L523.2 718.9L519.1 716.0L515.1 713.2L511.3 710.3L507.5 707.5L503.9 704.6L500.3 701.6L496.9 698.7L493.6 695.8L490.4 692.8L487.3 689.8L484.3 686.8L481.4 683.8L478.6 680.8L476.0 677.8L473.4 674.7L471.0 671.7L468.7 668.6L466.5 665.5L464.4 662.5L462.4 659.4L460.6 656.3L458.8 653.2L457.2 650.0L455.7 646.9L454.3 643.8L453.0 640.6L451.9 637.5L450.8 634.3L449.9 631.2L449.1 628.0L448.4 624.9L447.9 621.7L447.4 618.5L447.1 615.4L446.9 612.2L446.8 609.0L446.8 605.8L446.9 602.7L447.2 599.5L447.6 596.3L448.0 593.2L448.7 590.0L449.4 586.8L450.2 583.7L451.2 580.5L452.3 577.4L453.5 574.2L454.8 571.1" fill="none" stroke="#787878" stroke-width="1.9"/><path d="M581.1 750.4L575.8 747.9L570.6 745.3L565.5 742.7L560.5 740.1L555.7 737.4L550.9 734.8L546.2 732.1L541.6 729.4L537.1 726.6L532.7 723.9L528.5 721.1L524.3 718.3L520.2 715.5L516.3 712.7L512.4 709.8L508.7 706.9L505.0 704.1L501.5 701.2L498.0 698.2L494.7 695.3L491.5 692.4L488.4 689.4L485.4 686.4L482.6 683.4L479.8 680.4L477.2 677.4L474.6 674.4L472.2 671.4L469.9 668.3L467.7 665.2L465.6 662.2L463.6 659.1L461.8 656.0L460.1 652.9L458.4 649.8L456.9 646.7L455.5 643.6L454.3 640.5L453.1 637.3L452.1 634.2L451.2 631.1L450.4 627.9L449.7 624.8L449.1 621.6L448.6 618.5L448.3 615.3L448.1 612.2L448.0 609.0L448.0 605.8L448.2 602.7L448.4 599.5L448.8 596.4L449.3 593.2L449.9 590.1L450.6 586.9L451.5 583.8L452.4 580.7L453.5 577.5L454.7 574.4L456.0 571.3" fill="none" stroke="#7e7e7e" stroke-width="1.9"/><path d="M582.1 749.7L576.8 747.1L571.6 744.6L566.6 742.0L561.6 739.4L556.7 736.7L551.9 734.1L547.3 731.4L542.7 728.7L538.2 726.0L533.8 723.3L529.6 720.5L525.4 717.7L521.3 714.9L517.4 712.1L513.5 709.3L509.8 706.4L506.2 703.6L502.6 700.7L499.2 697.8L495.9 694.9L492.7 691.9L489.6 689.0L486.6 686.0L483.8 683.0L481.0 680.1L478.4 677.1L475.8 674.0L473.4 671.0L471.1 668.0L468.9 664.9L466.8 661.9L464.9 658.8L463.0 655.8L461.3 652.7L459.7 649.6L458.2 646.5L456.8 643.4L455.5 640.3L454.4 637.2L453.3 634.1L452.4 630.9L451.6 627.8L450.9 624.7L450.3 621.5L449.9 618.4L449.6 615.3L449.4 612.1L449.3 609.0L449.3 605.9L449.4 602.7L449.7 599.6L450.0 596.4L450.5 593.3L451.1 590.2L451.9 587.1L452.7 583.9L453.7 580.8L454.8 577.7L456.0 574.6L457.3 571.5" fill="none" stroke="#848484" stroke-width="1.9"/><path d="M583.1 748.9L577.8 746.4L572.7 743.9L567.6 741.3L562.6 738.7L557.8 736.1L553.0 733.4L548.3 730.8L543.8 728.1L539.3 725.4L534.9 722.7L530.7 719.9L526.5 717.2L522.5 714.4L518.5 711.6L514.7 708.7L510.9 705.9L507.3 703.1L503.8 700.2L500.4 697.3L497.1 694.4L493.9 691.5L490.8 688.6L487.8 685.6L484.9 682.7L482.2 679.7L479.5 676.7L477.0 673.7L474.6 670.7L472.3 667.7L470.1 664.7L468.0 661.6L466.1 658.6L464.2 655.5L462.5 652.4L460.9 649.4L459.4 646.3L458.0 643.2L456.7 640.1L455.6 637.0L454.6 633.9L453.6 630.8L452.8 627.7L452.2 624.6L451.6 621.5L451.1 618.4L450.8 615.2L450.6 612.1L450.5 609.0L450.5 605.9L450.7 602.7L450.9 599.6L451.3 596.5L451.8 593.4L452.4 590.3L453.1 587.2L454.0 584.1L454.9 580.9L456.0 577.8L457.2 574.8L458.5 571.7" fill="none" stroke="#888888" stroke-width="1.9"/><path d="M584.1 748.2L578.8 745.7L573.7 743.1L568.6 740.6L563.7 738.0L558.8 735.4L554.1 732.8L549.4 730.1L544.8 727.5L540.4 724.8L536.0 722.1L531.8 719.3L527.6 716.6L523.6 713.8L519.6 711.0L515.8 708.2L512.1 705.4L508.4 702.6L504.9 699.7L501.5 696.8L498.2 693.9L495.0 691.0L492.0 688.1L489.0 685.2L486.1 682.3L483.4 679.3L480.7 676.3L478.2 673.4L475.8 670.4L473.5 667.4L471.3 664.4L469.3 661.3L467.3 658.3L465.5 655.3L463.7 652.2L462.1 649.2L460.6 646.1L459.2 643.0L458.0 640.0L456.8 636.9L455.8 633.8L454.9 630.7L454.1 627.6L453.4 624.5L452.8 621.4L452.4 618.3L452.1 615.2L451.9 612.1L451.8 609.0L451.8 605.9L451.9 602.8L452.2 599.7L452.5 596.6L453.0 593.5L453.6 590.4L454.4 587.3L455.2 584.2L456.2 581.1L457.2 578.0L458.4 574.9L459.7 571.9" fill="none" stroke="#8a8a8a" stroke-width="1.9"/><path d="M585.1 747.5L579.9 745.0L574.7 742.4L569.7 739.9L564.7 737.3L559.9 734.7L555.1 732.1L550.5 729.5L545.9 726.8L541.5 724.1L537.1 721.5L532.9 718.7L528.7 716.0L524.7 713.2L520.8 710.5L516.9 707.7L513.2 704.9L509.6 702.1L506.1 699.2L502.7 696.4L499.4 693.5L496.2 690.6L493.1 687.7L490.2 684.8L487.3 681.9L484.6 678.9L481.9 676.0L479.4 673.0L477.0 670.0L474.7 667.1L472.5 664.1L470.5 661.0L468.5 658.0L466.7 655.0L465.0 652.0L463.4 648.9L461.9 645.9L460.5 642.8L459.2 639.8L458.1 636.7L457.0 633.7L456.1 630.6L455.3 627.5L454.7 624.4L454.1 621.3L453.6 618.3L453.3 615.2L453.1 612.1L453.0 609.0L453.0 605.9L453.2 602.8L453.4 599.7L453.8 596.6L454.3 593.5L454.9 590.5L455.6 587.4L456.4 584.3L457.4 581.2L458.5 578.2L459.7 575.1L461.0 572.0" fill="none" stroke="#8b8b8b" stroke-width="1.9"/><path d="M586.1 746.7L580.9 744.2L575.7 741.7L570.7 739.2L565.8 736.6L560.9 734.1L556.2 731.5L551.5 728.8L547.0 726.2L542.6 723.5L538.2 720.8L534.0 718.1L529.8 715.4L525.8 712.7L521.9 709.9L518.1 707.2L514.3 704.4L510.7 701.6L507.2 698.7L503.8 695.9L500.6 693.0L497.4 690.2L494.3 687.3L491.3 684.4L488.5 681.5L485.8 678.5L483.1 675.6L480.6 672.7L478.2 669.7L475.9 666.7L473.8 663.8L471.7 660.8L469.7 657.8L467.9 654.8L466.2 651.7L464.6 648.7L463.1 645.7L461.7 642.7L460.5 639.6L459.3 636.6L458.3 633.5L457.4 630.5L456.6 627.4L455.9 624.3L455.3 621.3L454.9 618.2L454.6 615.1L454.4 612.1L454.3 609.0L454.3 605.9L454.4 602.8L454.7 599.8L455.0 596.7L455.5 593.6L456.1 590.6L456.9 587.5L457.7 584.4L458.6 581.4L459.7 578.3L460.9 575.3L462.2 572.2" fill="none" stroke="#8b8b8b" stroke-width="1.9"/><path d="M587.1 746.0L581.9 743.5L576.8 741.0L571.7 738.5L566.8 735.9L562.0 733.4L557.2 730.8L552.6 728.2L548.1 725.6L543.6 722.9L539.3 720.2L535.1 717.6L531.0 714.9L526.9 712.1L523.0 709.4L519.2 706.6L515.5 703.8L511.9 701.1L508.4 698.2L505.0 695.4L501.7 692.6L498.5 689.7L495.5 686.9L492.5 684.0L489.7 681.1L487.0 678.2L484.3 675.3L481.8 672.3L479.4 669.4L477.1 666.4L475.0 663.5L472.9 660.5L471.0 657.5L469.1 654.5L467.4 651.5L465.8 648.5L464.3 645.5L463.0 642.5L461.7 639.4L460.6 636.4L459.5 633.4L458.6 630.3L457.8 627.3L457.1 624.2L456.6 621.2L456.1 618.1L455.8 615.1L455.6 612.0L455.5 609.0L455.5 605.9L455.7 602.9L455.9 599.8L456.3 596.8L456.8 593.7L457.4 590.6L458.1 587.6L458.9 584.6L459.9 581.5L461.0 578.5L462.1 575.5L463.4 572.4" fill="none" stroke="#868686" stroke-width="1.9"/><path d="M588.1 745.2L582.9 742.8L577.8 740.3L572.8 737.8L567.9 735.3L563.0 732.7L558.3 730.1L553.7 727.5L549.2 724.9L544.7 722.3L540.4 719.6L536.2 717.0L532.1 714.3L528.0 711.6L524.1 708.8L520.3 706.1L516.6 703.3L513.0 700.6L509.5 697.8L506.2 695.0L502.9 692.1L499.7 689.3L496.7 686.4L493.7 683.6L490.9 680.7L488.1 677.8L485.5 674.9L483.0 672.0L480.6 669.0L478.4 666.1L476.2 663.2L474.1 660.2L472.2 657.2L470.4 654.3L468.6 651.3L467.0 648.3L465.6 645.3L464.2 642.3L462.9 639.3L461.8 636.3L460.8 633.2L459.9 630.2L459.1 627.2L458.4 624.2L457.8 621.1L457.4 618.1L457.1 615.0L456.9 612.0L456.8 609.0L456.8 605.9L456.9 602.9L457.2 599.8L457.5 596.8L458.0 593.8L458.6 590.7L459.3 587.7L460.2 584.7L461.1 581.7L462.2 578.6L463.4 575.6L464.7 572.6" fill="none" stroke="#818181" stroke-width="1.9"/><path d="M589.1 744.5L583.9 742.0L578.8 739.6L573.8 737.1L568.9 734.6L564.1 732.0L559.4 729.5L554.8 726.9L550.2 724.3L545.8 721.7L541.5 719.0L537.3 716.4L533.2 713.7L529.2 711.0L525.3 708.3L521.5 705.6L517.8 702.8L514.2 700.1L510.7 697.3L507.3 694.5L504.0 691.7L500.9 688.8L497.8 686.0L494.9 683.2L492.1 680.3L489.3 677.4L486.7 674.5L484.2 671.6L481.8 668.7L479.6 665.8L477.4 662.9L475.3 659.9L473.4 657.0L471.6 654.0L469.9 651.0L468.3 648.1L466.8 645.1L465.4 642.1L464.2 639.1L463.0 636.1L462.0 633.1L461.1 630.1L460.3 627.1L459.6 624.1L459.1 621.1L458.6 618.0L458.3 615.0L458.1 612.0L458.0 609.0L458.0 605.9L458.2 602.9L458.4 599.9L458.8 596.9L459.3 593.9L459.9 590.8L460.6 587.8L461.4 584.8L462.4 581.8L463.4 578.8L464.6 575.8L465.9 572.8" fill="none" stroke="#7c7c7c" stroke-width="1.9"/><path d="M590.1 743.7L584.9 741.3L579.8 738.9L574.8 736.4L569.9 733.9L565.1 731.4L560.4 728.8L555.8 726.2L551.3 723.7L546.9 721.1L542.6 718.4L538.4 715.8L534.3 713.1L530.3 710.4L526.4 707.8L522.6 705.0L518.9 702.3L515.3 699.6L511.8 696.8L508.5 694.0L505.2 691.2L502.1 688.4L499.0 685.6L496.1 682.8L493.2 679.9L490.5 677.0L487.9 674.2L485.4 671.3L483.0 668.4L480.8 665.5L478.6 662.6L476.6 659.6L474.6 656.7L472.8 653.8L471.1 650.8L469.5 647.9L468.0 644.9L466.7 641.9L465.4 638.9L464.3 636.0L463.3 633.0L462.4 630.0L461.6 627.0L460.9 624.0L460.3 621.0L459.9 618.0L459.6 615.0L459.4 612.0L459.3 609.0L459.3 606.0L459.4 602.9L459.7 599.9L460.0 596.9L460.5 593.9L461.1 590.9L461.8 587.9L462.7 584.9L463.6 581.9L464.7 579.0L465.9 576.0L467.1 573.0" fill="none" stroke="#747474" stroke-width="1.9"/><path d="M591.1 743.0L585.9 740.6L580.9 738.1L575.9 735.7L571.0 733.2L566.2 730.7L561.5 728.2L556.9 725.6L552.4 723.0L548.0 720.4L543.7 717.8L539.5 715.2L535.4 712.6L531.4 709.9L527.5 707.2L523.7 704.5L520.0 701.8L516.5 699.1L513.0 696.3L509.6 693.5L506.4 690.8L503.2 688.0L500.2 685.2L497.3 682.3L494.4 679.5L491.7 676.7L489.1 673.8L486.6 670.9L484.2 668.1L482.0 665.2L479.8 662.3L477.8 659.4L475.9 656.4L474.0 653.5L472.3 650.6L470.7 647.6L469.3 644.7L467.9 641.7L466.7 638.8L465.5 635.8L464.5 632.8L463.6 629.9L462.8 626.9L462.1 623.9L461.6 620.9L461.1 617.9L460.8 614.9L460.6 611.9L460.5 609.0L460.5 606.0L460.7 603.0L460.9 600.0L461.3 597.0L461.8 594.0L462.4 591.0L463.1 588.0L463.9 585.1L464.9 582.1L465.9 579.1L467.1 576.2L468.4 573.2" fill="none" stroke="#6d6d6d" stroke-width="1.9"/><path d="M592.1 742.3L587.0 739.9L581.9 737.4L576.9 735.0L572.0 732.5L567.2 730.0L562.6 727.5L558.0 725.0L553.5 722.4L549.1 719.8L544.8 717.2L540.6 714.6L536.5 712.0L532.5 709.3L528.6 706.7L524.9 704.0L521.2 701.3L517.6 698.6L514.1 695.8L510.8 693.1L507.5 690.3L504.4 687.5L501.4 684.7L498.4 681.9L495.6 679.1L492.9 676.3L490.3 673.4L487.8 670.6L485.5 667.7L483.2 664.9L481.0 662.0L479.0 659.1L477.1 656.2L475.3 653.3L473.6 650.3L472.0 647.4L470.5 644.5L469.1 641.5L467.9 638.6L466.8 635.7L465.7 632.7L464.8 629.7L464.1 626.8L463.4 623.8L462.8 620.8L462.4 617.9L462.1 614.9L461.9 611.9L461.8 608.9L461.8 606.0L461.9 603.0L462.2 600.0L462.5 597.1L463.0 594.1L463.6 591.1L464.3 588.1L465.2 585.2L466.1 582.2L467.2 579.3L468.3 576.3L469.6 573.4" fill="none" stroke="#6e6e6e" stroke-width="1.9"/><path d="M593.1 741.5L588.0 739.1L582.9 736.7L577.9 734.3L573.1 731.8L568.3 729.3L563.6 726.8L559.0 724.3L554.5 721.8L550.2 719.2L545.9 716.6L541.7 714.0L537.6 711.4L533.6 708.8L529.8 706.1L526.0 703.4L522.3 700.8L518.8 698.1L515.3 695.3L511.9 692.6L508.7 689.9L505.6 687.1L502.5 684.3L499.6 681.5L496.8 678.7L494.1 675.9L491.5 673.1L489.0 670.2L486.7 667.4L484.4 664.5L482.3 661.7L480.2 658.8L478.3 655.9L476.5 653.0L474.8 650.1L473.2 647.2L471.7 644.3L470.4 641.4L469.1 638.4L468.0 635.5L467.0 632.6L466.1 629.6L465.3 626.7L464.6 623.7L464.1 620.8L463.6 617.8L463.3 614.9L463.1 611.9L463.0 608.9L463.0 606.0L463.2 603.0L463.4 600.1L463.8 597.1L464.3 594.2L464.9 591.2L465.6 588.3L466.4 585.3L467.3 582.4L468.4 579.4L469.6 576.5L470.9 573.6" fill="none" stroke="#767676" stroke-width="1.9"/><path d="M594.1 740.8L589.0 738.4L583.9 736.0L579.0 733.6L574.1 731.1L569.3 728.7L564.7 726.2L560.1 723.7L555.6 721.1L551.2 718.6L547.0 716.0L542.8 713.4L538.7 710.8L534.8 708.2L530.9 705.6L527.1 702.9L523.5 700.2L519.9 697.6L516.4 694.9L513.1 692.1L509.9 689.4L506.7 686.7L503.7 683.9L500.8 681.1L498.0 678.3L495.3 675.5L492.7 672.7L490.2 669.9L487.9 667.1L485.6 664.2L483.5 661.4L481.4 658.5L479.5 655.6L477.7 652.8L476.0 649.9L474.4 647.0L473.0 644.1L471.6 641.2L470.4 638.3L469.2 635.3L468.2 632.4L467.3 629.5L466.5 626.6L465.9 623.6L465.3 620.7L464.9 617.8L464.6 614.8L464.4 611.9L464.3 608.9L464.3 606.0L464.4 603.1L464.7 600.1L465.0 597.2L465.5 594.2L466.1 591.3L466.8 588.4L467.6 585.4L468.6 582.5L469.6 579.6L470.8 576.7L472.1 573.8" fill="none" stroke="#858585" stroke-width="1.9"/><path d="M1537.7 805.2L1530.4 807.1L1523.0 809.0L1515.6 810.8L1508.0 812.6L1500.5 814.3L1492.8 816.0L1485.1 817.7L1477.4 819.4L1469.5 821.0L1461.7 822.6L1453.7 824.1L1445.7 825.6L1437.7 827.1L1429.6 828.5L1421.4 829.9L1413.2 831.2L1405.0 832.5L1396.7 833.8L1388.3 835.0L1379.9 836.2L1371.5 837.4L1363.0 838.5L1354.5 839.5L1345.9 840.6L1337.3 841.6L1328.7 842.5L1320.1 843.4L1311.4 844.3L1302.6 845.1L1293.9 845.9L1285.1 846.7L1276.3 847.4L1267.4 848.0L1258.6 848.7L1249.7 849.3L1240.8 849.8L1231.9 850.3L1222.9 850.7L1214.0 851.2L1205.0 851.5L1196.0 851.9L1187.0 852.2L1178.0 852.4L1169.0 852.6L1160.0 852.8L1150.9 852.9L1141.9 853.0L1132.9 853.0L1123.8 853.0L1114.8 852.9L1105.8 852.8L1096.8 852.7L1087.7 852.5L1078.7 852.3L1069.7 852.1L1060.7 851.8L1051.8 851.4L1042.8 851.0L1033.8 850.6L1024.9 850.1" fill="none" stroke="#8a8a8a" stroke-width="1.9"/><path d="M1536.9 804.2L1529.6 806.1L1522.3 807.9L1514.9 809.7L1507.4 811.5L1499.8 813.3L1492.2 815.0L1484.5 816.7L1476.7 818.3L1468.9 819.9L1461.1 821.5L1453.1 823.0L1445.2 824.5L1437.1 825.9L1429.0 827.4L1420.9 828.7L1412.7 830.1L1404.5 831.4L1396.2 832.6L1387.8 833.9L1379.5 835.0L1371.1 836.2L1362.6 837.3L1354.1 838.4L1345.5 839.4L1337.0 840.4L1328.4 841.3L1319.7 842.2L1311.0 843.1L1302.3 843.9L1293.6 844.7L1284.8 845.5L1276.0 846.2L1267.2 846.8L1258.3 847.4L1249.5 848.0L1240.6 848.6L1231.7 849.1L1222.8 849.5L1213.8 849.9L1204.9 850.3L1195.9 850.6L1186.9 850.9L1177.9 851.2L1168.9 851.4L1159.9 851.5L1150.9 851.6L1141.9 851.7L1132.9 851.7L1123.9 851.7L1114.8 851.7L1105.8 851.6L1096.8 851.5L1087.8 851.3L1078.8 851.1L1069.8 850.8L1060.9 850.5L1051.9 850.2L1042.9 849.8L1034.0 849.4L1025.1 848.9" fill="none" stroke="#999999" stroke-width="1.9"/><path d="M1536.2 803.2L1528.9 805.1L1521.6 806.9L1514.2 808.7L1506.7 810.5L1499.1 812.2L1491.5 813.9L1483.8 815.6L1476.1 817.2L1468.3 818.8L1460.5 820.4L1452.5 821.9L1444.6 823.4L1436.6 824.8L1428.5 826.2L1420.4 827.6L1412.2 828.9L1404.0 830.2L1395.7 831.5L1387.4 832.7L1379.0 833.9L1370.6 835.0L1362.2 836.1L1353.7 837.2L1345.2 838.2L1336.6 839.2L1328.0 840.1L1319.4 841.0L1310.7 841.9L1302.0 842.7L1293.3 843.5L1284.5 844.2L1275.7 844.9L1266.9 845.6L1258.1 846.2L1249.3 846.8L1240.4 847.3L1231.5 847.8L1222.6 848.3L1213.7 848.7L1204.7 849.1L1195.8 849.4L1186.8 849.7L1177.8 849.9L1168.8 850.1L1159.9 850.3L1150.9 850.4L1141.9 850.5L1132.9 850.5L1123.9 850.5L1114.9 850.4L1105.9 850.3L1096.9 850.2L1087.9 850.0L1078.9 849.8L1069.9 849.6L1061.0 849.3L1052.0 848.9L1043.1 848.5L1034.2 848.1L1025.3 847.6" fill="none" stroke="#a4a4a4" stroke-width="1.9"/><path d="M1535.5 802.2L1528.2 804.0L1520.9 805.9L1513.5 807.7L1506.0 809.4L1498.4 811.2L1490.9 812.9L1483.2 814.5L1475.5 816.1L1467.7 817.7L1459.9 819.3L1452.0 820.8L1444.0 822.3L1436.0 823.7L1427.9 825.1L1419.8 826.5L1411.7 827.8L1403.5 829.1L1395.2 830.3L1386.9 831.5L1378.6 832.7L1370.2 833.9L1361.7 834.9L1353.3 836.0L1344.8 837.0L1336.2 838.0L1327.6 838.9L1319.0 839.8L1310.4 840.7L1301.7 841.5L1293.0 842.3L1284.2 843.0L1275.5 843.7L1266.7 844.4L1257.9 845.0L1249.0 845.6L1240.2 846.1L1231.3 846.6L1222.4 847.0L1213.5 847.4L1204.6 847.8L1195.6 848.1L1186.7 848.4L1177.7 848.7L1168.8 848.9L1159.8 849.0L1150.8 849.1L1141.8 849.2L1132.9 849.2L1123.9 849.2L1114.9 849.2L1105.9 849.1L1096.9 849.0L1088.0 848.8L1079.0 848.6L1070.1 848.3L1061.1 848.0L1052.2 847.7L1043.3 847.3L1034.4 846.9L1025.5 846.4" fill="none" stroke="#aeaeae" stroke-width="1.9"/><path d="M1534.7 801.2L1527.5 803.0L1520.1 804.9L1512.7 806.6L1505.3 808.4L1497.8 810.1L1490.2 811.8L1482.5 813.4L1474.8 815.1L1467.1 816.6L1459.3 818.2L1451.4 819.7L1443.4 821.2L1435.4 822.6L1427.4 824.0L1419.3 825.3L1411.2 826.7L1403.0 827.9L1394.7 829.2L1386.4 830.4L1378.1 831.6L1369.7 832.7L1361.3 833.8L1352.9 834.8L1344.4 835.8L1335.8 836.8L1327.3 837.7L1318.7 838.6L1310.0 839.5L1301.4 840.3L1292.7 841.1L1284.0 841.8L1275.2 842.5L1266.4 843.1L1257.6 843.8L1248.8 844.3L1240.0 844.9L1231.1 845.3L1222.2 845.8L1213.4 846.2L1204.4 846.6L1195.5 846.9L1186.6 847.2L1177.7 847.4L1168.7 847.6L1159.7 847.8L1150.8 847.9L1141.8 848.0L1132.9 848.0L1123.9 848.0L1114.9 847.9L1106.0 847.9L1097.0 847.7L1088.0 847.5L1079.1 847.3L1070.2 847.1L1061.2 846.8L1052.3 846.4L1043.4 846.1L1034.5 845.6L1025.7 845.2" fill="none" stroke="#b8b8b8" stroke-width="1.9"/><path d="M1534.0 800.2L1526.7 802.0L1519.4 803.8L1512.0 805.6L1504.6 807.4L1497.1 809.1L1489.5 810.7L1481.9 812.4L1474.2 814.0L1466.5 815.6L1458.6 817.1L1450.8 818.6L1442.9 820.0L1434.9 821.5L1426.9 822.9L1418.8 824.2L1410.6 825.5L1402.5 826.8L1394.2 828.0L1386.0 829.2L1377.7 830.4L1369.3 831.5L1360.9 832.6L1352.5 833.6L1344.0 834.6L1335.5 835.6L1326.9 836.5L1318.3 837.4L1309.7 838.3L1301.1 839.1L1292.4 839.9L1283.7 840.6L1274.9 841.3L1266.2 841.9L1257.4 842.5L1248.6 843.1L1239.8 843.6L1230.9 844.1L1222.1 844.6L1213.2 845.0L1204.3 845.3L1195.4 845.6L1186.5 845.9L1177.6 846.2L1168.6 846.4L1159.7 846.5L1150.7 846.6L1141.8 846.7L1132.9 846.7L1123.9 846.7L1115.0 846.7L1106.0 846.6L1097.1 846.5L1088.1 846.3L1079.2 846.1L1070.3 845.8L1061.4 845.5L1052.5 845.2L1043.6 844.8L1034.7 844.4L1025.9 843.9" fill="none" stroke="#c2c2c2" stroke-width="1.9"/><path d="M1533.2 799.2L1526.0 801.0L1518.7 802.8L1511.3 804.6L1503.9 806.3L1496.4 808.0L1488.9 809.7L1481.3 811.3L1473.6 812.9L1465.8 814.5L1458.0 816.0L1450.2 817.5L1442.3 818.9L1434.3 820.3L1426.3 821.7L1418.2 823.1L1410.1 824.4L1402.0 825.6L1393.8 826.9L1385.5 828.1L1377.2 829.2L1368.9 830.3L1360.5 831.4L1352.0 832.5L1343.6 833.5L1335.1 834.4L1326.5 835.3L1318.0 836.2L1309.4 837.1L1300.7 837.9L1292.1 838.6L1283.4 839.4L1274.7 840.1L1265.9 840.7L1257.2 841.3L1248.4 841.9L1239.6 842.4L1230.7 842.9L1221.9 843.3L1213.0 843.7L1204.2 844.1L1195.3 844.4L1186.4 844.7L1177.5 844.9L1168.6 845.1L1159.6 845.3L1150.7 845.4L1141.8 845.5L1132.8 845.5L1123.9 845.5L1115.0 845.4L1106.0 845.4L1097.1 845.2L1088.2 845.1L1079.3 844.8L1070.4 844.6L1061.5 844.3L1052.6 844.0L1043.7 843.6L1034.9 843.2L1026.0 842.7" fill="none" stroke="#cecece" stroke-width="1.9"/><path d="M1532.5 798.2L1525.3 800.0L1518.0 801.8L1510.6 803.5L1503.2 805.3L1495.8 807.0L1488.2 808.6L1480.6 810.2L1472.9 811.8L1465.2 813.4L1457.4 814.9L1449.6 816.4L1441.7 817.8L1433.8 819.2L1425.8 820.6L1417.7 821.9L1409.6 823.2L1401.5 824.5L1393.3 825.7L1385.0 826.9L1376.7 828.1L1368.4 829.2L1360.0 830.2L1351.6 831.3L1343.2 832.3L1334.7 833.2L1326.2 834.2L1317.6 835.0L1309.0 835.9L1300.4 836.7L1291.8 837.4L1283.1 838.2L1274.4 838.8L1265.7 839.5L1256.9 840.1L1248.2 840.6L1239.4 841.2L1230.6 841.6L1221.7 842.1L1212.9 842.5L1204.0 842.8L1195.2 843.2L1186.3 843.4L1177.4 843.7L1168.5 843.9L1159.6 844.0L1150.7 844.1L1141.8 844.2L1132.8 844.2L1123.9 844.2L1115.0 844.2L1106.1 844.1L1097.2 844.0L1088.3 843.8L1079.4 843.6L1070.5 843.3L1061.6 843.0L1052.7 842.7L1043.9 842.3L1035.1 841.9L1026.2 841.5" fill="none" stroke="#d9d9d9" stroke-width="1.9"/><path d="M1531.7 797.2L1524.5 799.0L1517.3 800.8L1509.9 802.5L1502.5 804.2L1495.1 805.9L1487.6 807.6L1480.0 809.2L1472.3 810.7L1464.6 812.3L1456.8 813.8L1449.0 815.3L1441.1 816.7L1433.2 818.1L1425.2 819.5L1417.2 820.8L1409.1 822.1L1401.0 823.4L1392.8 824.6L1384.6 825.8L1376.3 826.9L1368.0 828.0L1359.6 829.1L1351.2 830.1L1342.8 831.1L1334.3 832.0L1325.8 833.0L1317.3 833.8L1308.7 834.7L1300.1 835.5L1291.5 836.2L1282.8 836.9L1274.1 837.6L1265.4 838.2L1256.7 838.8L1247.9 839.4L1239.2 839.9L1230.4 840.4L1221.6 840.8L1212.7 841.2L1203.9 841.6L1195.0 841.9L1186.2 842.2L1177.3 842.4L1168.4 842.6L1159.5 842.8L1150.6 842.9L1141.7 843.0L1132.8 843.0L1123.9 843.0L1115.0 842.9L1106.1 842.9L1097.2 842.7L1088.4 842.6L1079.5 842.3L1070.6 842.1L1061.7 841.8L1052.9 841.5L1044.1 841.1L1035.2 840.7L1026.4 840.2" fill="none" stroke="#e4e4e4" stroke-width="1.9"/><path d="M1531.0 796.1L1523.8 798.0L1516.6 799.7L1509.2 801.5L1501.9 803.2L1494.4 804.8L1486.9 806.5L1479.3 808.1L1471.7 809.7L1464.0 811.2L1456.2 812.7L1448.4 814.2L1440.6 815.6L1432.6 817.0L1424.7 818.4L1416.7 819.7L1408.6 821.0L1400.5 822.2L1392.3 823.4L1384.1 824.6L1375.8 825.7L1367.5 826.8L1359.2 827.9L1350.8 828.9L1342.4 829.9L1334.0 830.8L1325.5 831.8L1316.9 832.6L1308.4 833.5L1299.8 834.2L1291.2 835.0L1282.5 835.7L1273.9 836.4L1265.2 837.0L1256.5 837.6L1247.7 838.2L1239.0 838.7L1230.2 839.2L1221.4 839.6L1212.6 840.0L1203.8 840.4L1194.9 840.7L1186.1 840.9L1177.2 841.2L1168.3 841.4L1159.5 841.5L1150.6 841.6L1141.7 841.7L1132.8 841.7L1123.9 841.7L1115.1 841.7L1106.2 841.6L1097.3 841.5L1088.4 841.3L1079.6 841.1L1070.7 840.8L1061.9 840.6L1053.0 840.2L1044.2 839.9L1035.4 839.4L1026.6 839.0" fill="none" stroke="#e0e0e0" stroke-width="1.9"/><path d="M1530.3 795.1L1523.1 796.9L1515.8 798.7L1508.5 800.4L1501.2 802.1L1493.7 803.8L1486.2 805.4L1478.7 807.0L1471.0 808.6L1463.4 810.1L1455.6 811.6L1447.8 813.1L1440.0 814.5L1432.1 815.9L1424.1 817.2L1416.1 818.5L1408.1 819.8L1400.0 821.1L1391.8 822.3L1383.6 823.4L1375.4 824.6L1367.1 825.7L1358.8 826.7L1350.4 827.7L1342.0 828.7L1333.6 829.7L1325.1 830.6L1316.6 831.4L1308.1 832.3L1299.5 833.0L1290.9 833.8L1282.3 834.5L1273.6 835.2L1264.9 835.8L1256.2 836.4L1247.5 836.9L1238.8 837.5L1230.0 837.9L1221.2 838.4L1212.4 838.8L1203.6 839.1L1194.8 839.4L1186.0 839.7L1177.1 839.9L1168.3 840.1L1159.4 840.3L1150.6 840.4L1141.7 840.5L1132.8 840.5L1124.0 840.5L1115.1 840.4L1106.2 840.4L1097.4 840.2L1088.5 840.1L1079.7 839.9L1070.8 839.6L1062.0 839.3L1053.2 839.0L1044.4 838.6L1035.6 838.2L1026.8 837.8" fill="none" stroke="#dbdbdb" stroke-width="1.9"/><path d="M1529.5 794.1L1522.4 795.9L1515.1 797.7L1507.8 799.4L1500.5 801.1L1493.1 802.7L1485.6 804.4L1478.0 806.0L1470.4 807.5L1462.8 809.0L1455.0 810.5L1447.2 812.0L1439.4 813.4L1431.5 814.8L1423.6 816.1L1415.6 817.4L1407.6 818.7L1399.5 819.9L1391.3 821.1L1383.1 822.3L1374.9 823.4L1366.7 824.5L1358.4 825.5L1350.0 826.6L1341.6 827.5L1333.2 828.5L1324.7 829.4L1316.3 830.2L1307.7 831.0L1299.2 831.8L1290.6 832.6L1282.0 833.3L1273.3 833.9L1264.7 834.6L1256.0 835.2L1247.3 835.7L1238.6 836.2L1229.8 836.7L1221.1 837.1L1212.3 837.5L1203.5 837.9L1194.7 838.2L1185.9 838.5L1177.0 838.7L1168.2 838.9L1159.4 839.0L1150.5 839.1L1141.7 839.2L1132.8 839.2L1124.0 839.2L1115.1 839.2L1106.3 839.1L1097.4 839.0L1088.6 838.8L1079.8 838.6L1070.9 838.4L1062.1 838.1L1053.3 837.7L1044.5 837.4L1035.8 837.0L1027.0 836.5" fill="none" stroke="#d7d7d7" stroke-width="1.9"/><path d="M1528.8 793.1L1521.6 794.9L1514.4 796.7L1507.1 798.4L1499.8 800.0L1492.4 801.7L1484.9 803.3L1477.4 804.9L1469.8 806.4L1462.1 807.9L1454.4 809.4L1446.7 810.9L1438.8 812.3L1431.0 813.6L1423.0 815.0L1415.1 816.3L1407.0 817.5L1399.0 818.8L1390.8 820.0L1382.7 821.1L1374.5 822.2L1366.2 823.3L1357.9 824.4L1349.6 825.4L1341.2 826.3L1332.8 827.3L1324.4 828.2L1315.9 829.0L1307.4 829.8L1298.9 830.6L1290.3 831.4L1281.7 832.1L1273.1 832.7L1264.4 833.4L1255.8 833.9L1247.1 834.5L1238.4 835.0L1229.6 835.5L1220.9 835.9L1212.1 836.3L1203.4 836.6L1194.6 836.9L1185.8 837.2L1177.0 837.4L1168.1 837.6L1159.3 837.8L1150.5 837.9L1141.6 838.0L1132.8 838.0L1124.0 838.0L1115.1 837.9L1106.3 837.9L1097.5 837.7L1088.7 837.6L1079.8 837.4L1071.0 837.1L1062.2 836.8L1053.5 836.5L1044.7 836.1L1035.9 835.7L1027.2 835.3" fill="none" stroke="#d0d0d0" stroke-width="1.9"/><path d="M1528.0 792.1L1520.9 793.9L1513.7 795.6L1506.4 797.3L1499.1 799.0L1491.7 800.6L1484.3 802.2L1476.7 803.8L1469.2 805.4L1461.5 806.9L1453.8 808.3L1446.1 809.8L1438.3 811.2L1430.4 812.5L1422.5 813.9L1414.5 815.1L1406.5 816.4L1398.5 817.6L1390.4 818.8L1382.2 820.0L1374.0 821.1L1365.8 822.2L1357.5 823.2L1349.2 824.2L1340.8 825.2L1332.4 826.1L1324.0 827.0L1315.6 827.8L1307.1 828.6L1298.5 829.4L1290.0 830.1L1281.4 830.8L1272.8 831.5L1264.2 832.1L1255.5 832.7L1246.9 833.3L1238.2 833.8L1229.5 834.2L1220.7 834.6L1212.0 835.0L1203.2 835.4L1194.4 835.7L1185.7 836.0L1176.9 836.2L1168.1 836.4L1159.3 836.5L1150.4 836.6L1141.6 836.7L1132.8 836.7L1124.0 836.7L1115.2 836.7L1106.4 836.6L1097.5 836.5L1088.7 836.3L1079.9 836.1L1071.2 835.9L1062.4 835.6L1053.6 835.3L1044.8 834.9L1036.1 834.5L1027.4 834.1" fill="none" stroke="#c8c8c8" stroke-width="1.9"/><path d="M1527.3 791.1L1520.2 792.9L1513.0 794.6L1505.7 796.3L1498.4 798.0L1491.0 799.6L1483.6 801.2L1476.1 802.7L1468.5 804.3L1460.9 805.8L1453.2 807.2L1445.5 808.7L1437.7 810.1L1429.8 811.4L1421.9 812.7L1414.0 814.0L1406.0 815.3L1398.0 816.5L1389.9 817.7L1381.7 818.8L1373.6 819.9L1365.3 821.0L1357.1 822.0L1348.8 823.0L1340.4 824.0L1332.1 824.9L1323.7 825.8L1315.2 826.6L1306.7 827.4L1298.2 828.2L1289.7 828.9L1281.1 829.6L1272.5 830.3L1263.9 830.9L1255.3 831.5L1246.6 832.0L1238.0 832.5L1229.3 833.0L1220.6 833.4L1211.8 833.8L1203.1 834.1L1194.3 834.4L1185.6 834.7L1176.8 834.9L1168.0 835.1L1159.2 835.3L1150.4 835.4L1141.6 835.5L1132.8 835.5L1124.0 835.5L1115.2 835.4L1106.4 835.4L1097.6 835.2L1088.8 835.1L1080.0 834.9L1071.3 834.6L1062.5 834.3L1053.7 834.0L1045.0 833.7L1036.3 833.3L1027.6 832.8" fill="none" stroke="#bfbfbf" stroke-width="1.9"/><path d="M1526.6 790.1L1519.4 791.9L1512.3 793.6L1505.0 795.3L1497.7 796.9L1490.4 798.5L1482.9 800.1L1475.4 801.7L1467.9 803.2L1460.3 804.7L1452.6 806.1L1444.9 807.6L1437.1 808.9L1429.3 810.3L1421.4 811.6L1413.5 812.9L1405.5 814.1L1397.5 815.3L1389.4 816.5L1381.3 817.6L1373.1 818.7L1364.9 819.8L1356.7 820.8L1348.4 821.8L1340.0 822.8L1331.7 823.7L1323.3 824.6L1314.9 825.4L1306.4 826.2L1297.9 827.0L1289.4 827.7L1280.9 828.4L1272.3 829.1L1263.7 829.7L1255.1 830.3L1246.4 830.8L1237.8 831.3L1229.1 831.7L1220.4 832.2L1211.7 832.6L1202.9 832.9L1194.2 833.2L1185.5 833.5L1176.7 833.7L1167.9 833.9L1159.1 834.0L1150.4 834.1L1141.6 834.2L1132.8 834.2L1124.0 834.2L1115.2 834.2L1106.4 834.1L1097.7 834.0L1088.9 833.8L1080.1 833.6L1071.4 833.4L1062.6 833.1L1053.9 832.8L1045.2 832.4L1036.5 832.0L1027.8 831.6" fill="none" stroke="#b4b4b4" stroke-width="1.9"/><path d="M1525.8 789.1L1518.7 790.8L1511.6 792.5L1504.3 794.2L1497.0 795.9L1489.7 797.5L1482.3 799.1L1474.8 800.6L1467.3 802.1L1459.7 803.6L1452.0 805.0L1444.3 806.5L1436.5 807.8L1428.7 809.2L1420.9 810.5L1412.9 811.8L1405.0 813.0L1397.0 814.2L1388.9 815.4L1380.8 816.5L1372.7 817.6L1364.5 818.6L1356.2 819.7L1348.0 820.6L1339.7 821.6L1331.3 822.5L1322.9 823.4L1314.5 824.2L1306.1 825.0L1297.6 825.8L1289.1 826.5L1280.6 827.2L1272.0 827.8L1263.4 828.5L1254.8 829.0L1246.2 829.6L1237.6 830.1L1228.9 830.5L1220.2 830.9L1211.5 831.3L1202.8 831.7L1194.1 832.0L1185.3 832.2L1176.6 832.5L1167.9 832.6L1159.1 832.8L1150.3 832.9L1141.6 833.0L1132.8 833.0L1124.0 833.0L1115.3 832.9L1106.5 832.9L1097.7 832.7L1089.0 832.6L1080.2 832.4L1071.5 832.1L1062.7 831.9L1054.0 831.5L1045.3 831.2L1036.6 830.8L1028.0 830.4" fill="none" stroke="#a8a8a8" stroke-width="1.9"/><path d="M1525.1 788.1L1518.0 789.8L1510.8 791.5L1503.6 793.2L1496.4 794.8L1489.0 796.4L1481.6 798.0L1474.1 799.5L1466.6 801.0L1459.0 802.5L1451.4 803.9L1443.7 805.4L1436.0 806.7L1428.2 808.1L1420.3 809.4L1412.4 810.6L1404.5 811.9L1396.5 813.0L1388.4 814.2L1380.3 815.3L1372.2 816.4L1364.0 817.5L1355.8 818.5L1347.6 819.5L1339.3 820.4L1330.9 821.3L1322.6 822.2L1314.2 823.0L1305.7 823.8L1297.3 824.6L1288.8 825.3L1280.3 826.0L1271.7 826.6L1263.2 827.2L1254.6 827.8L1246.0 828.3L1237.4 828.8L1228.7 829.3L1220.0 829.7L1211.4 830.1L1202.7 830.4L1194.0 830.7L1185.2 831.0L1176.5 831.2L1167.8 831.4L1159.0 831.5L1150.3 831.6L1141.5 831.7L1132.8 831.7L1124.0 831.7L1115.3 831.7L1106.5 831.6L1097.8 831.5L1089.0 831.3L1080.3 831.1L1071.6 830.9L1062.9 830.6L1054.2 830.3L1045.5 829.9L1036.8 829.5L1028.1 829.1" fill="none" stroke="#939393" stroke-width="1.9"/><circle cx="968.8" cy="380.8" r="4" fill="#d4a0a0" opacity="0.85"/><circle cx="1786.5" cy="552.2" r="4" fill="#9a6464" opacity="0.85"/><circle cx="1291.2" cy="835.2" r="4" fill="#d4a0a0" opacity="0.85"/><circle cx="473.5" cy="663.8" r="4" fill="#9a6464" opacity="0.85"/><path d="M722.62 416.73 L722.71 415.06 L722.99 413.54 L723.45 412.20 L724.08 411.08 L724.84 410.23 L725.73 409.66 L726.72 409.40 L727.77 409.45 L728.85 409.80 L729.93 410.46 L730.98 411.40 L731.96 412.59 L732.85 413.99 L733.62 415.56 L734.24 417.26 L734.70 419.03 L734.99 420.83 L735.08 422.58 L734.99 424.25 L734.70 425.77 L734.24 427.11 L733.62 428.23 L732.85 429.08 L731.96 429.65 L730.98 429.91 L729.93 429.86 L728.85 429.51 L727.77 428.85 L726.72 427.91 L725.73 426.72 L724.84 425.32 L724.08 423.75 L723.45 422.05 L722.99 420.27 L722.71 418.48Z" fill="#d42a2a"/><path d="M726.48 418.54 L726.51 417.91 L726.62 417.32 L726.79 416.81 L727.03 416.39 L727.32 416.06 L727.66 415.85 L728.04 415.75 L728.44 415.77 L728.85 415.90 L729.26 416.15 L729.66 416.51 L730.04 416.96 L730.37 417.50 L730.67 418.10 L730.90 418.74 L731.08 419.42 L731.19 420.10 L731.22 420.77 L731.19 421.40 L731.08 421.99 L730.90 422.50 L730.67 422.92 L730.37 423.25 L730.04 423.46 L729.66 423.56 L729.26 423.54 L728.85 423.41 L728.44 423.16 L728.04 422.80 L727.66 422.35 L727.32 421.81 L727.03 421.21 L726.79 420.57 L726.62 419.89 L726.51 419.21Z" fill="#6a0808"/><path d="M1235.02 373.16 L1235.00 371.51 L1234.93 370.01 L1234.81 368.72 L1234.65 367.67 L1234.45 366.90 L1234.22 366.43 L1233.97 366.27 L1233.70 366.43 L1233.42 366.90 L1233.14 367.68 L1232.87 368.73 L1232.62 370.02 L1232.39 371.52 L1232.19 373.17 L1232.03 374.94 L1231.91 376.76 L1231.84 378.58 L1231.81 380.35 L1231.84 382.00 L1231.91 383.50 L1232.03 384.79 L1232.19 385.84 L1232.39 386.61 L1232.62 387.08 L1232.87 387.24 L1233.14 387.08 L1233.42 386.61 L1233.70 385.83 L1233.97 384.78 L1234.22 383.49 L1234.45 381.99 L1234.65 380.34 L1234.81 378.57 L1234.93 376.75 L1235.00 374.93Z" fill="#d42a2a"/><path d="M1234.03 375.39 L1234.02 374.76 L1233.99 374.19 L1233.95 373.69 L1233.89 373.29 L1233.81 373.00 L1233.72 372.82 L1233.63 372.76 L1233.52 372.82 L1233.42 373.00 L1233.31 373.30 L1233.21 373.70 L1233.11 374.19 L1233.03 374.76 L1232.95 375.39 L1232.89 376.06 L1232.84 376.76 L1232.82 377.45 L1232.81 378.12 L1232.82 378.75 L1232.84 379.32 L1232.89 379.82 L1232.95 380.21 L1233.03 380.51 L1233.11 380.69 L1233.21 380.75 L1233.31 380.69 L1233.42 380.51 L1233.52 380.21 L1233.63 379.81 L1233.72 379.32 L1233.81 378.75 L1233.89 378.12 L1233.95 377.45 L1233.99 376.75 L1234.02 376.06Z" fill="#6a0808"/><path d="M451.58 571.65 L451.74 569.94 L452.21 568.31 L452.97 566.79 L454.01 565.44 L455.29 564.30 L456.77 563.39 L458.41 562.75 L460.16 562.40 L461.96 562.35 L463.76 562.60 L465.51 563.13 L467.15 563.95 L468.63 565.01 L469.91 566.30 L470.94 567.76 L471.71 569.35 L472.18 571.04 L472.33 572.76 L472.18 574.46 L471.71 576.09 L470.94 577.61 L469.91 578.96 L468.63 580.10 L467.15 581.01 L465.51 581.65 L463.76 582.00 L461.96 582.05 L460.16 581.81 L458.41 581.27 L456.77 580.45 L455.29 579.39 L454.01 578.11 L452.97 576.65 L452.21 575.05 L451.74 573.36Z" fill="#b87070" opacity="0.8"/><path d="M458.00 571.99 L458.06 571.34 L458.24 570.72 L458.53 570.14 L458.93 569.63 L459.42 569.19 L459.98 568.85 L460.61 568.60 L461.27 568.47 L461.96 568.45 L462.64 568.54 L463.31 568.75 L463.93 569.06 L464.50 569.46 L464.99 569.95 L465.38 570.51 L465.67 571.12 L465.85 571.76 L465.91 572.41 L465.85 573.06 L465.67 573.68 L465.38 574.26 L464.99 574.78 L464.50 575.21 L463.93 575.56 L463.31 575.80 L462.64 575.93 L461.96 575.95 L461.27 575.86 L460.61 575.66 L459.98 575.35 L459.42 574.94 L458.93 574.45 L458.53 573.89 L458.24 573.29 L458.06 572.64Z" fill="#6a4040" opacity="0.8"/><path d="M577.44 749.02 L577.57 747.27 L577.95 745.52 L578.57 743.80 L579.42 742.18 L580.46 740.70 L581.67 739.41 L583.00 738.34 L584.42 737.53 L585.89 737.01 L587.36 736.78 L588.78 736.87 L590.12 737.25 L591.32 737.93 L592.37 738.88 L593.21 740.07 L593.83 741.46 L594.21 743.03 L594.34 744.70 L594.21 746.45 L593.83 748.20 L593.21 749.92 L592.37 751.54 L591.32 753.02 L590.12 754.31 L588.78 755.38 L587.36 756.19 L585.89 756.71 L584.42 756.94 L583.00 756.85 L581.67 756.47 L580.46 755.79 L579.42 754.84 L578.57 753.65 L577.95 752.26 L577.57 750.69Z" fill="#d42a2a"/><path d="M582.67 747.68 L582.72 747.02 L582.87 746.35 L583.10 745.70 L583.43 745.08 L583.82 744.51 L584.28 744.02 L584.79 743.61 L585.33 743.31 L585.89 743.11 L586.45 743.02 L586.99 743.05 L587.50 743.20 L587.96 743.46 L588.36 743.82 L588.68 744.27 L588.92 744.80 L589.06 745.40 L589.11 746.04 L589.06 746.70 L588.92 747.37 L588.68 748.02 L588.36 748.64 L587.96 749.21 L587.50 749.70 L586.99 750.11 L586.45 750.41 L585.89 750.61 L585.33 750.70 L584.79 750.67 L584.28 750.52 L583.82 750.26 L583.43 749.90 L583.10 749.45 L582.87 748.92 L582.72 748.32Z" fill="#6a0808"/><path d="M1024.98 842.84 L1025.00 841.07 L1025.07 839.25 L1025.19 837.43 L1025.35 835.66 L1025.55 834.01 L1025.78 832.51 L1026.03 831.22 L1026.30 830.17 L1026.58 829.39 L1026.86 828.92 L1027.13 828.76 L1027.38 828.92 L1027.61 829.39 L1027.81 830.16 L1027.97 831.21 L1028.09 832.50 L1028.16 834.00 L1028.19 835.65 L1028.16 837.42 L1028.09 839.24 L1027.97 841.06 L1027.81 842.83 L1027.61 844.48 L1027.38 845.98 L1027.13 847.27 L1026.86 848.32 L1026.58 849.10 L1026.30 849.57 L1026.03 849.73 L1025.78 849.57 L1025.55 849.10 L1025.35 848.33 L1025.19 847.28 L1025.07 845.99 L1025.00 844.49Z" fill="#b87070" opacity="0.8"/><path d="M1025.97 840.61 L1025.98 839.94 L1026.01 839.25 L1026.05 838.55 L1026.11 837.88 L1026.19 837.25 L1026.28 836.68 L1026.37 836.19 L1026.48 835.79 L1026.58 835.49 L1026.69 835.31 L1026.79 835.25 L1026.89 835.31 L1026.97 835.49 L1027.05 835.79 L1027.11 836.18 L1027.16 836.68 L1027.18 837.25 L1027.19 837.88 L1027.18 838.55 L1027.16 839.24 L1027.11 839.94 L1027.05 840.61 L1026.97 841.24 L1026.89 841.81 L1026.79 842.30 L1026.69 842.70 L1026.58 843.00 L1026.48 843.18 L1026.37 843.24 L1026.28 843.18 L1026.19 843.00 L1026.11 842.71 L1026.05 842.31 L1026.01 841.81 L1025.98 841.24Z" fill="#6a4040" opacity="0.8"/><path d="M1537.38 799.27 L1537.29 797.52 L1537.01 795.73 L1536.55 793.95 L1535.92 792.25 L1535.16 790.68 L1534.27 789.28 L1533.28 788.09 L1532.23 787.15 L1531.15 786.49 L1530.07 786.14 L1529.02 786.09 L1528.04 786.35 L1527.15 786.92 L1526.38 787.77 L1525.76 788.89 L1525.30 790.23 L1525.01 791.75 L1524.92 793.42 L1525.01 795.17 L1525.30 796.97 L1525.76 798.74 L1526.38 800.44 L1527.15 802.01 L1528.04 803.41 L1529.02 804.60 L1530.07 805.54 L1531.15 806.20 L1532.23 806.55 L1533.28 806.60 L1534.27 806.34 L1535.16 805.77 L1535.92 804.92 L1536.55 803.80 L1537.01 802.46 L1537.29 800.94Z" fill="#b87070" opacity="0.8"/><path d="M1533.52 797.46 L1533.49 796.79 L1533.38 796.11 L1533.21 795.43 L1532.97 794.79 L1532.68 794.19 L1532.34 793.65 L1531.96 793.20 L1531.56 792.84 L1531.15 792.59 L1530.74 792.46 L1530.34 792.44 L1529.96 792.54 L1529.63 792.75 L1529.33 793.08 L1529.10 793.50 L1528.92 794.01 L1528.81 794.60 L1528.78 795.23 L1528.81 795.90 L1528.92 796.58 L1529.10 797.26 L1529.33 797.90 L1529.63 798.50 L1529.96 799.04 L1530.34 799.49 L1530.74 799.85 L1531.15 800.10 L1531.56 800.23 L1531.96 800.25 L1532.34 800.15 L1532.68 799.94 L1532.97 799.61 L1533.21 799.19 L1533.38 798.68 L1533.49 798.09Z" fill="#6a4040" opacity="0.8"/><path d="M1682.56 466.98 L1682.43 465.31 L1682.05 463.74 L1681.43 462.35 L1680.58 461.16 L1679.54 460.21 L1678.33 459.53 L1677.00 459.15 L1675.58 459.06 L1674.11 459.29 L1672.64 459.81 L1671.22 460.62 L1669.88 461.69 L1668.68 462.98 L1667.63 464.46 L1666.79 466.08 L1666.17 467.80 L1665.79 469.55 L1665.66 471.30 L1665.79 472.97 L1666.17 474.54 L1666.79 475.93 L1667.63 477.12 L1668.68 478.07 L1669.88 478.75 L1671.22 479.13 L1672.64 479.22 L1674.11 478.99 L1675.58 478.47 L1677.00 477.66 L1678.33 476.59 L1679.54 475.30 L1680.58 473.82 L1681.43 472.20 L1682.05 470.48 L1682.43 468.73Z" fill="#b87070" opacity="0.8"/><path d="M1677.33 468.32 L1677.28 467.68 L1677.13 467.08 L1676.90 466.55 L1676.57 466.10 L1676.18 465.74 L1675.72 465.48 L1675.21 465.33 L1674.67 465.30 L1674.11 465.39 L1673.55 465.59 L1673.01 465.89 L1672.50 466.30 L1672.04 466.79 L1671.64 467.36 L1671.32 467.98 L1671.08 468.63 L1670.94 469.30 L1670.89 469.96 L1670.94 470.60 L1671.08 471.20 L1671.32 471.73 L1671.64 472.18 L1672.04 472.54 L1672.50 472.80 L1673.01 472.95 L1673.55 472.98 L1674.11 472.89 L1674.67 472.69 L1675.21 472.39 L1675.72 471.98 L1676.18 471.49 L1676.57 470.92 L1676.90 470.30 L1677.13 469.65 L1677.28 468.98Z" fill="#6a4040" opacity="0.8"/><path d="M1808.42 644.35 L1808.26 642.64 L1807.79 640.95 L1807.03 639.35 L1805.99 637.89 L1804.71 636.61 L1803.23 635.55 L1801.59 634.73 L1799.84 634.19 L1798.04 633.95 L1796.24 634.00 L1794.49 634.35 L1792.85 634.99 L1791.37 635.90 L1790.09 637.04 L1789.06 638.39 L1788.29 639.91 L1787.82 641.54 L1787.67 643.24 L1787.82 644.96 L1788.29 646.65 L1789.06 648.24 L1790.09 649.70 L1791.37 650.99 L1792.85 652.05 L1794.49 652.87 L1796.24 653.40 L1798.04 653.65 L1799.84 653.60 L1801.59 653.25 L1803.23 652.61 L1804.71 651.70 L1805.99 650.56 L1807.03 649.21 L1807.79 647.69 L1808.26 646.06Z" fill="#d42a2a"/><path d="M1802.00 644.01 L1801.94 643.36 L1801.76 642.71 L1801.47 642.11 L1801.07 641.55 L1800.58 641.06 L1800.02 640.65 L1799.39 640.34 L1798.73 640.14 L1798.04 640.05 L1797.36 640.07 L1796.69 640.20 L1796.07 640.44 L1795.50 640.79 L1795.01 641.22 L1794.62 641.74 L1794.33 642.32 L1794.15 642.94 L1794.09 643.59 L1794.15 644.24 L1794.33 644.88 L1794.62 645.49 L1795.01 646.05 L1795.50 646.54 L1796.07 646.94 L1796.69 647.25 L1797.36 647.46 L1798.04 647.55 L1798.73 647.53 L1799.39 647.40 L1800.02 647.15 L1800.58 646.81 L1801.07 646.37 L1801.47 645.86 L1801.76 645.28 L1801.94 644.66Z" fill="#6a0808"/><circle cx="1025.6" cy="837.2" r="3.2" fill="#a01010"/><g transform="translate(475.0,550.1)" opacity="1"><rect x="-3.5" y="17" width="7" height="7.5" rx="1.5" fill="#78a878"/><path d="M-13.5 15.5 L0 9 L13 12.5 L0 19 Z" fill="#5f9d60"/><ellipse cx="0" cy="15" rx="4" ry="3.5" fill="#559a56"/><circle cx="0" cy="5.5" r="5" fill="#64a064"/></g><g transform="translate(520.2,507.0)" opacity="1"><rect x="-3.5" y="17" width="7" height="7.5" rx="1.5" fill="#78a878"/><path d="M-13.5 15.5 L0 9 L13 12.5 L0 19 Z" fill="#5f9d60"/><ellipse cx="0" cy="15" rx="4" ry="3.5" fill="#559a56"/><circle cx="0" cy="5.5" r="5" fill="#64a064"/></g><g transform="translate(588.9,467.7)" opacity="1"><rect x="-3.5" y="17" width="7" height="7.5" rx="1.5" fill="#78a878"/><path d="M-13.5 15.5 L0 9 L13 12.5 L0 19 Z" fill="#5f9d60"/><ellipse cx="0" cy="15" rx="4" ry="3.5" fill="#559a56"/><circle cx="0" cy="5.5" r="5" fill="#64a064"/></g><g transform="translate(678.3,433.9)" opacity="1"><rect x="-3.5" y="17" width="7" height="7.5" rx="1.5" fill="#78a878"/><path d="M-13.5 15.5 L0 9 L13 12.5 L0 19 Z" fill="#5f9d60"/><ellipse cx="0" cy="15" rx="4" ry="3.5" fill="#559a56"/><circle cx="0" cy="5.5" r="5" fill="#64a064"/></g><g transform="translate(1297.3,381.3)" opacity="1"><rect x="-3.5" y="17" width="7" height="7.5" rx="1.5" fill="#78a878"/><path d="M-13.5 15.5 L0 9 L13 12.5 L0 19 Z" fill="#5f9d60"/><ellipse cx="0" cy="15" rx="4" ry="3.5" fill="#559a56"/><circle cx="0" cy="5.5" r="5" fill="#64a064"/></g><g transform="translate(1421.8,396.9)" opacity="1"><rect x="-3.5" y="17" width="7" height="7.5" rx="1.5" fill="#78a878"/><path d="M-13.5 15.5 L0 9 L13 12.5 L0 19 Z" fill="#5f9d60"/><ellipse cx="0" cy="15" rx="4" ry="3.5" fill="#559a56"/><circle cx="0" cy="5.5" r="5" fill="#64a064"/></g><g transform="translate(1535.2,420.7)" opacity="1"><rect x="-3.5" y="17" width="7" height="7.5" rx="1.5" fill="#78a878"/><path d="M-13.5 15.5 L0 9 L13 12.5 L0 19 Z" fill="#5f9d60"/><ellipse cx="0" cy="15" rx="4" ry="3.5" fill="#559a56"/><circle cx="0" cy="5.5" r="5" fill="#64a064"/></g><g transform="translate(1633.0,451.7)" opacity="1"><rect x="-3.5" y="17" width="7" height="7.5" rx="1.5" fill="#78a878"/><path d="M-13.5 15.5 L0 9 L13 12.5 L0 19 Z" fill="#5f9d60"/><ellipse cx="0" cy="15" rx="4" ry="3.5" fill="#559a56"/><circle cx="0" cy="5.5" r="5" fill="#64a064"/></g><path d="M1746.60 560.15 V613.14" stroke="#8a008a" stroke-width="1.3"/><path d="M1741.80 611.14 H1751.40 L1746.60 619.14 Z" fill="#8a008a"/><path d="M1740.19 581.01 V633.96" stroke="#8a008a" stroke-width="1.3"/><path d="M1735.39 631.96 H1744.99 L1740.19 639.96 Z" fill="#8a008a"/><path d="M1727.90 601.54 V654.47" stroke="#8a008a" stroke-width="1.3"/><path d="M1723.10 652.47 H1732.70 L1727.90 660.47 Z" fill="#8a008a"/><path d="M1709.85 621.56 V674.46" stroke="#8a008a" stroke-width="1.3"/><path d="M1705.05 672.46 H1714.65 L1709.85 680.46 Z" fill="#8a008a"/><path d="M1686.22 640.87 V693.74" stroke="#8a008a" stroke-width="1.3"/><path d="M1681.42 691.74 H1691.02 L1686.22 699.74 Z" fill="#8a008a"/><path d="M1657.24 659.29 V712.14" stroke="#8a008a" stroke-width="1.3"/><path d="M1652.44 710.14 H1662.04 L1657.24 718.14 Z" fill="#8a008a"/><path d="M1623.17 676.64 V729.46" stroke="#8a008a" stroke-width="1.3"/><path d="M1618.37 727.46 H1627.97 L1623.17 735.46 Z" fill="#8a008a"/><path d="M1584.36 692.74 V745.54" stroke="#8a008a" stroke-width="1.3"/><path d="M1579.56 743.54 H1589.16 L1584.36 751.54 Z" fill="#8a008a"/><path d="M1541.17 707.46 V760.23" stroke="#8a008a" stroke-width="1.3"/><path d="M1536.37 758.23 H1545.97 L1541.17 766.23 Z" fill="#8a008a"/><path d="M1494.02 720.63 V773.39" stroke="#8a008a" stroke-width="1.3"/><path d="M1489.22 771.39 H1498.82 L1494.02 779.39 Z" fill="#8a008a"/><path d="M1443.36 732.15 V784.89" stroke="#8a008a" stroke-width="1.3"/><path d="M1438.56 782.89 H1448.16 L1443.36 790.89 Z" fill="#8a008a"/><path d="M1389.69 741.89 V794.62" stroke="#8a008a" stroke-width="1.3"/><path d="M1384.89 792.62 H1394.49 L1389.69 800.62 Z" fill="#8a008a"/><path d="M1333.52 749.76 V802.48" stroke="#8a008a" stroke-width="1.3"/><path d="M1328.72 800.48 H1338.32 L1333.52 808.48 Z" fill="#8a008a"/><path d="M1275.38 755.69 V808.40" stroke="#8a008a" stroke-width="1.3"/><path d="M1270.58 806.40 H1280.18 L1275.38 814.40 Z" fill="#8a008a"/><path d="M1215.85 759.63 V812.33" stroke="#8a008a" stroke-width="1.3"/><path d="M1211.05 810.33 H1220.65 L1215.85 818.33 Z" fill="#8a008a"/><path d="M1155.49 761.52 V814.22" stroke="#8a008a" stroke-width="1.3"/><path d="M1150.69 812.22 H1160.29 L1155.49 820.22 Z" fill="#8a008a"/><path d="M1094.88 761.35 V814.05" stroke="#8a008a" stroke-width="1.3"/><path d="M1090.08 812.05 H1099.68 L1094.88 820.05 Z" fill="#8a008a"/><path d="M1034.61 759.14 V811.84" stroke="#8a008a" stroke-width="1.3"/><path d="M1029.81 809.84 H1039.41 L1034.61 817.84 Z" fill="#8a008a"/><path d="M975.26 754.88 V807.59" stroke="#8a008a" stroke-width="1.3"/><path d="M970.46 805.59 H980.06 L975.26 813.59 Z" fill="#8a008a"/><path d="M917.40 748.64 V801.36" stroke="#8a008a" stroke-width="1.3"/><path d="M912.60 799.36 H922.20 L917.40 807.36 Z" fill="#8a008a"/><path d="M861.59 740.46 V793.19" stroke="#8a008a" stroke-width="1.3"/><path d="M856.79 791.19 H866.39 L861.59 799.19 Z" fill="#8a008a"/><path d="M808.36 730.43 V783.18" stroke="#8a008a" stroke-width="1.3"/><path d="M803.56 781.18 H813.16 L808.36 789.18 Z" fill="#8a008a"/><path d="M758.23 718.65 V771.41" stroke="#8a008a" stroke-width="1.3"/><path d="M753.43 769.41 H763.03 L758.23 777.41 Z" fill="#8a008a"/><path d="M711.68 705.22 V757.99" stroke="#8a008a" stroke-width="1.3"/><path d="M706.88 755.99 H716.48 L711.68 763.99 Z" fill="#8a008a"/><path d="M669.16 690.27 V743.07" stroke="#8a008a" stroke-width="1.3"/><path d="M664.36 741.07 H673.96 L669.16 749.07 Z" fill="#8a008a"/><path d="M631.08 673.96 V726.78" stroke="#8a008a" stroke-width="1.3"/><path d="M626.28 724.78 H635.88 L631.08 732.78 Z" fill="#8a008a"/><path d="M597.80 656.43 V709.28" stroke="#8a008a" stroke-width="1.3"/><path d="M593.00 707.28 H602.60 L597.80 715.28 Z" fill="#8a008a"/><path d="M569.65 637.86 V690.73" stroke="#8a008a" stroke-width="1.3"/><path d="M564.85 688.73 H574.45 L569.65 696.73 Z" fill="#8a008a"/><path d="M546.90 618.42 V671.32" stroke="#8a008a" stroke-width="1.3"/><path d="M542.10 669.32 H551.70 L546.90 677.32 Z" fill="#8a008a"/><path d="M529.75 598.30 V651.23" stroke="#8a008a" stroke-width="1.3"/><path d="M524.95 649.23 H534.55 L529.75 657.23 Z" fill="#8a008a"/><path d="M518.40 577.70 V630.66" stroke="#8a008a" stroke-width="1.3"/><path d="M513.60 628.66 H523.20 L518.40 636.66 Z" fill="#8a008a"/><path d="M512.93 556.82 V609.81" stroke="#8a008a" stroke-width="1.3"/><path d="M508.13 607.81 H517.73 L512.93 615.81 Z" fill="#8a008a"/><path d="M513.40 535.85 V588.86" stroke="#8a008a" stroke-width="1.3"/><path d="M508.60 586.86 H518.20 L513.40 594.86 Z" fill="#8a008a"/><path d="M519.81 514.99 V568.04" stroke="#8a008a" stroke-width="1.3"/><path d="M515.01 566.04 H524.61 L519.81 574.04 Z" fill="#8a008a"/><path d="M532.10 494.46 V547.53" stroke="#8a008a" stroke-width="1.3"/><path d="M527.30 545.53 H536.90 L532.10 553.53 Z" fill="#8a008a"/><path d="M550.15 474.44 V527.54" stroke="#8a008a" stroke-width="1.3"/><path d="M545.35 525.54 H554.95 L550.15 533.54 Z" fill="#8a008a"/><path d="M573.78 455.13 V508.26" stroke="#8a008a" stroke-width="1.3"/><path d="M568.98 506.26 H578.58 L573.78 514.26 Z" fill="#8a008a"/><path d="M602.76 436.71 V489.86" stroke="#8a008a" stroke-width="1.3"/><path d="M597.96 487.86 H607.56 L602.76 495.86 Z" fill="#8a008a"/><path d="M636.83 419.36 V472.54" stroke="#8a008a" stroke-width="1.3"/><path d="M632.03 470.54 H641.63 L636.83 478.54 Z" fill="#8a008a"/><path d="M675.64 403.26 V456.46" stroke="#8a008a" stroke-width="1.3"/><path d="M670.84 454.46 H680.44 L675.64 462.46 Z" fill="#8a008a"/><path d="M718.83 388.54 V441.77" stroke="#8a008a" stroke-width="1.3"/><path d="M714.03 439.77 H723.63 L718.83 447.77 Z" fill="#8a008a"/><path d="M765.98 375.37 V428.61" stroke="#8a008a" stroke-width="1.3"/><path d="M761.18 426.61 H770.78 L765.98 434.61 Z" fill="#8a008a"/><path d="M816.64 363.85 V417.11" stroke="#8a008a" stroke-width="1.3"/><path d="M811.84 415.11 H821.44 L816.64 423.11 Z" fill="#8a008a"/><path d="M870.31 354.11 V407.38" stroke="#8a008a" stroke-width="1.3"/><path d="M865.51 405.38 H875.11 L870.31 413.38 Z" fill="#8a008a"/><path d="M926.48 346.24 V399.52" stroke="#8a008a" stroke-width="1.3"/><path d="M921.68 397.52 H931.28 L926.48 405.52 Z" fill="#8a008a"/><path d="M984.62 340.31 V393.60" stroke="#8a008a" stroke-width="1.3"/><path d="M979.82 391.60 H989.42 L984.62 399.60 Z" fill="#8a008a"/><path d="M1044.15 336.37 V389.67" stroke="#8a008a" stroke-width="1.3"/><path d="M1039.35 387.67 H1048.95 L1044.15 395.67 Z" fill="#8a008a"/><path d="M1104.51 334.48 V387.78" stroke="#8a008a" stroke-width="1.3"/><path d="M1099.71 385.78 H1109.31 L1104.51 393.78 Z" fill="#8a008a"/><path d="M1165.12 334.65 V387.95" stroke="#8a008a" stroke-width="1.3"/><path d="M1160.32 385.95 H1169.92 L1165.12 393.95 Z" fill="#8a008a"/><path d="M1225.39 336.86 V390.16" stroke="#8a008a" stroke-width="1.3"/><path d="M1220.59 388.16 H1230.19 L1225.39 396.16 Z" fill="#8a008a"/><path d="M1284.74 341.12 V394.41" stroke="#8a008a" stroke-width="1.3"/><path d="M1279.94 392.41 H1289.54 L1284.74 400.41 Z" fill="#8a008a"/><path d="M1342.60 347.36 V400.64" stroke="#8a008a" stroke-width="1.3"/><path d="M1337.80 398.64 H1347.40 L1342.60 406.64 Z" fill="#8a008a"/><path d="M1398.41 355.54 V408.81" stroke="#8a008a" stroke-width="1.3"/><path d="M1393.61 406.81 H1403.21 L1398.41 414.81 Z" fill="#8a008a"/><path d="M1451.64 365.57 V418.82" stroke="#8a008a" stroke-width="1.3"/><path d="M1446.84 416.82 H1456.44 L1451.64 424.82 Z" fill="#8a008a"/><path d="M1501.77 377.35 V430.59" stroke="#8a008a" stroke-width="1.3"/><path d="M1496.97 428.59 H1506.57 L1501.77 436.59 Z" fill="#8a008a"/><path d="M1548.32 390.78 V444.01" stroke="#8a008a" stroke-width="1.3"/><path d="M1543.52 442.01 H1553.12 L1548.32 450.01 Z" fill="#8a008a"/><path d="M1590.84 405.73 V458.93" stroke="#8a008a" stroke-width="1.3"/><path d="M1586.04 456.93 H1595.64 L1590.84 464.93 Z" fill="#8a008a"/><path d="M1628.92 422.04 V475.22" stroke="#8a008a" stroke-width="1.3"/><path d="M1624.12 473.22 H1633.72 L1628.92 481.22 Z" fill="#8a008a"/><path d="M1662.20 439.57 V492.72" stroke="#8a008a" stroke-width="1.3"/><path d="M1657.40 490.72 H1667.00 L1662.20 498.72 Z" fill="#8a008a"/><path d="M1690.35 458.14 V511.27" stroke="#8a008a" stroke-width="1.3"/><path d="M1685.55 509.27 H1695.15 L1690.35 517.27 Z" fill="#8a008a"/><path d="M1713.10 477.58 V530.68" stroke="#8a008a" stroke-width="1.3"/><path d="M1708.30 528.68 H1717.90 L1713.10 536.68 Z" fill="#8a008a"/><path d="M1730.25 497.70 V550.77" stroke="#8a008a" stroke-width="1.3"/><path d="M1725.45 548.77 H1735.05 L1730.25 556.77 Z" fill="#8a008a"/><path d="M1741.60 518.30 V571.34" stroke="#8a008a" stroke-width="1.3"/><path d="M1736.80 569.34 H1746.40 L1741.60 577.34 Z" fill="#8a008a"/><path d="M1747.07 539.18 V592.19" stroke="#8a008a" stroke-width="1.3"/><path d="M1742.27 590.19 H1751.87 L1747.07 598.19 Z" fill="#8a008a"/><ellipse cx="1130" cy="548" rx="617.6" ry="213.7" fill="none" stroke="#8a008a" stroke-width="1.5"/><ellipse cx="1130" cy="607" rx="617.6" ry="213.4" fill="none" stroke="#8a008a" stroke-width="1.5"/><g transform="translate(1785.0,665.9)" opacity="1"><rect x="-3.5" y="17" width="7" height="7.5" rx="1.5" fill="#78f078"/><path d="M-13.5 15.5 L0 9 L13 12.5 L0 19 Z" fill="#42e642"/><ellipse cx="0" cy="15" rx="4" ry="3.5" fill="#22dd22"/><circle cx="0" cy="5.5" r="5" fill="#3cf03c"/></g><g transform="translate(1739.8,709.0)" opacity="1"><rect x="-3.5" y="17" width="7" height="7.5" rx="1.5" fill="#78f078"/><path d="M-13.5 15.5 L0 9 L13 12.5 L0 19 Z" fill="#42e642"/><ellipse cx="0" cy="15" rx="4" ry="3.5" fill="#22dd22"/><circle cx="0" cy="5.5" r="5" fill="#3cf03c"/></g><g transform="translate(1671.1,748.3)" opacity="1"><rect x="-3.5" y="17" width="7" height="7.5" rx="1.5" fill="#78f078"/><path d="M-13.5 15.5 L0 9 L13 12.5 L0 19 Z" fill="#42e642"/><ellipse cx="0" cy="15" rx="4" ry="3.5" fill="#22dd22"/><circle cx="0" cy="5.5" r="5" fill="#3cf03c"/></g><g transform="translate(1581.7,782.1)" opacity="1"><rect x="-3.5" y="17" width="7" height="7.5" rx="1.5" fill="#78f078"/><path d="M-13.5 15.5 L0 9 L13 12.5 L0 19 Z" fill="#42e642"/><ellipse cx="0" cy="15" rx="4" ry="3.5" fill="#22dd22"/><circle cx="0" cy="5.5" r="5" fill="#3cf03c"/></g><g transform="translate(962.7,834.7)" opacity="1"><rect x="-3.5" y="17" width="7" height="7.5" rx="1.5" fill="#78f078"/><path d="M-13.5 15.5 L0 9 L13 12.5 L0 19 Z" fill="#42e642"/><ellipse cx="0" cy="15" rx="4" ry="3.5" fill="#22dd22"/><circle cx="0" cy="5.5" r="5" fill="#3cf03c"/></g><g transform="translate(838.2,819.1)" opacity="1"><rect x="-3.5" y="17" width="7" height="7.5" rx="1.5" fill="#78f078"/><path d="M-13.5 15.5 L0 9 L13 12.5 L0 19 Z" fill="#42e642"/><ellipse cx="0" cy="15" rx="4" ry="3.5" fill="#22dd22"/><circle cx="0" cy="5.5" r="5" fill="#3cf03c"/></g><g transform="translate(724.8,795.3)" opacity="1"><rect x="-3.5" y="17" width="7" height="7.5" rx="1.5" fill="#78f078"/><path d="M-13.5 15.5 L0 9 L13 12.5 L0 19 Z" fill="#42e642"/><ellipse cx="0" cy="15" rx="4" ry="3.5" fill="#22dd22"/><circle cx="0" cy="5.5" r="5" fill="#3cf03c"/></g><g transform="translate(627.0,764.3)" opacity="1"><rect x="-3.5" y="17" width="7" height="7.5" rx="1.5" fill="#78f078"/><path d="M-13.5 15.5 L0 9 L13 12.5 L0 19 Z" fill="#42e642"/><ellipse cx="0" cy="15" rx="4" ry="3.5" fill="#22dd22"/><circle cx="0" cy="5.5" r="5" fill="#3cf03c"/></g><circle cx="1708.2" cy="729.2" r="3.8" fill="#8a0c0c"/><circle cx="1707.4" cy="728.7" r="1.6" fill="#4a0000"/><circle cx="779.8" cy="808.2" r="3.8" fill="#8a0c0c"/><circle cx="779.0" cy="807.7" r="1.6" fill="#4a0000"/><circle cx="551.8" cy="486.8" r="3.8" fill="#8a0c0c"/><circle cx="551.0" cy="486.3" r="1.6" fill="#4a0000"/><circle cx="1480.2" cy="407.8" r="3.8" fill="#8a0c0c"/><circle cx="1479.4" cy="407.3" r="1.6" fill="#4a0000"/><text x="1732" y="575" font-size="9" fill="#8a008a" font-family="Liberation Sans">5.00</text><path d="M1130 607 V575" stroke="#0000e0" stroke-width="2"/><path d="M1126 577 L1130 568 L1134 577 Z" fill="#0000e0"/><path d="M1130 607 L1160 613" stroke="#e00000" stroke-width="2"/><path d="M1156 608 L1166 614 L1155 617 Z" fill="#e00000"/><path d="M1130 607 L1146 599" stroke="#10e010" stroke-width="2"/><path d="M1143 596 L1151 596 L1146 602 Z" fill="#00a800"/><rect x="1127" y="605" width="5" height="4" fill="#8a1818" opacity="0.8"/><text x="1127" y="566" font-size="9" fill="#0000e0" font-family="Liberation Sans">Z</text><text x="1170" y="621" font-size="9" fill="#e00000" font-family="Liberation Sans">X</text><text x="1153" y="597" font-size="9" fill="#00e000" font-family="Liberation Sans">Y</text><path d="M371 916 V884" stroke="#0000e0" stroke-width="2"/><path d="M367 886 L371 877 L375 886 Z" fill="#0000e0"/><path d="M371 916 L402 922" stroke="#e00000" stroke-width="2"/><path d="M398 917 L408 923 L397 926 Z" fill="#e00000"/><path d="M371 916 L388 907" stroke="#10e010" stroke-width="2"/><path d="M385 904 L393 904 L388 910 Z" fill="#00a800"/><text x="368" y="873" font-size="9" fill="#0000e0" font-family="Liberation Sans">Z</text><text x="412" y="928" font-size="9" fill="#e00000" font-family="Liberation Sans">X</text><text x="395" y="905" font-size="9" fill="#00e000" font-family="Liberation Sans">Y</text><defs><filter id="shblur" x="-50%" y="-50%" width="200%" height="200%"><feGaussianBlur stdDeviation="1.8"/></filter></defs><g opacity="0.28" transform="translate(2,3)" filter="url(#shblur)"><path d="M1471.5 320.5 L1443.4 350.4" stroke-width="10" stroke-linecap="round" stroke="#000"/><path d="M1425.8 368.1 L1436.2 337 L1456.9 357.6 Z" fill="#000"/></g><path d="M1471.5 320.5 L1443.4 350.4" stroke-width="10" stroke-linecap="round" stroke="#e84a42"/><path d="M1425.8 368.1 L1436.2 337 L1456.9 357.6 Z" fill="#e84a42"/></svg><div style="position:absolute;left:316px;top:1072px;width:2078px;height:1px;background:#e8ecf4"></div><div style="position:absolute;left:316px;top:1073px;width:2078px;height:19px;background:#bac1cc"></div><div class="t" style="left:319.00px;top:1076.69px;font-size:11px;line-height:11px;color:#4a4040;transform:scaleX(1.0);transform-origin:left;">2.1 Lastfälle</div><svg style="left:2362px;top:1076px" width="32" height="14" viewBox="0 0 32 14"><path d="M3.5 2.5 H8.5 M4.5 2.5 V7.5 M7.5 2.5 V7.5 M2.5 7.5 H9.5 M6 7.5 V11" stroke="#6e6e6e" stroke-width="1.2" fill="none"/><path d="M20.5 3 L28 10.5 M28 3 L20.5 10.5" stroke="#6e6e6e" stroke-width="1.4"/></svg><div style="position:absolute;left:316px;top:1092px;width:2078px;height:25px;background:linear-gradient(#e9edf5,#e6eaf2 40%,#d4d9e2)"></div><svg style="left:316px;top:1090px" width="700" height="28" viewBox="316 1090 700 28"><defs><linearGradient id="hlgrad" x1="0" y1="0" x2="0" y2="1"><stop offset="0" stop-color="#fde2b8"/><stop offset="0.45" stop-color="#fbbd62"/><stop offset="0.6" stop-color="#f9b24c"/><stop offset="1" stop-color="#fde6ae"/></linearGradient></defs><rect x="346.5" y="1093.5" width="21" height="20" rx="2" fill="#fdf3d8" stroke="#f0c878"/><rect x="494.5" y="1093.5" width="21" height="20" rx="2" fill="url(#hlgrad)" stroke="#c9ad86"/><rect x="516.5" y="1093.5" width="21" height="20" rx="2" fill="url(#hlgrad)" stroke="#c9ad86"/><g transform="translate(327,1096)"><rect x="1.5" y="1.5" width="13" height="13" fill="#f4f4f4" stroke="#444"/><rect x="1.5" y="1.5" width="13" height="2.5" fill="#3a4a7a"/><path d="M2 7 H14 M2 10 H14 M2 13 H14 M6 4 V14 M10 4 V14" stroke="#9a9a9a" stroke-width="0.7"/><path d="M3 14 L13 4 V14 Z" fill="#40b040" stroke="#207020"/><path d="M7 12 L11 8 V12 Z" fill="#f4f4f4"/></g><g transform="translate(349,1096)"><rect x="1.5" y="1.5" width="13" height="13" fill="#f4f4f4" stroke="#444"/><rect x="1.5" y="1.5" width="13" height="2.5" fill="#3a4a7a"/><path d="M2 7 H14 M2 10 H14 M2 13 H14 M6 4 V14 M10 4 V14" stroke="#9a9a9a" stroke-width="0.7"/><path d="M5 5 V12 M3 10 L5 13 L7 10" stroke="#2a3a8a" stroke-width="1.3" fill="none"/><path d="M3 14 H8" stroke="#222"/><path d="M9 8 H14 M11.5 5.5 V10.5" stroke="#2a3a8a" stroke-width="1.5"/></g><g transform="translate(371,1096)"><rect x="1.5" y="1.5" width="13" height="13" fill="#f4f4f4" stroke="#444"/><rect x="1.5" y="1.5" width="13" height="2.5" fill="#3a4a7a"/><path d="M2 7 H14 M2 10 H14 M2 13 H14 M6 4 V14 M10 4 V14" stroke="#9a9a9a" stroke-width="0.7"/><path d="M8 4 V11" stroke="#2a5ad0" stroke-width="3"/><path d="M4 10 L8 15 L12 10 Z" fill="#2a5ad0"/></g><g transform="translate(393,1096)"><rect x="1.5" y="1.5" width="13" height="13" fill="#f4f4f4" stroke="#9aa0aa"/><rect x="1.5" y="1.5" width="13" height="2.5" fill="#a8b8d8"/><path d="M2 7 H14 M2 10 H14 M2 13 H14 M6 4 V14 M10 4 V14" stroke="#c8ccd4" stroke-width="0.7"/><path d="M2 12 L14 6" stroke="#e08080" stroke-width="1.2"/><path d="M2 14 L8 11" stroke="#8090e0" stroke-width="1.2"/></g><g transform="translate(415,1096)"><rect x="1.5" y="1.5" width="13" height="13" fill="#f4f4f4" stroke="#9aa0aa"/><rect x="1.5" y="1.5" width="13" height="2.5" fill="#a8b8d8"/><path d="M2 7 H14 M2 10 H14 M2 13 H14 M6 4 V14 M10 4 V14" stroke="#c8ccd4" stroke-width="0.7"/><path d="M2 9 L4 6 L6 12 L8 5 L10 11 L12 6 L14 9" stroke="#e07070" fill="none"/></g><g transform="translate(430,1096)"><path d="M8 1 V16" stroke="#a8aeba"/><path d="M9 1 V16" stroke="#fff"/></g><g transform="translate(445,1096)"><rect x="1.5" y="1.5" width="13" height="13" fill="#f4f4f4" stroke="#444"/><rect x="1.5" y="1.5" width="13" height="2.5" fill="#3a4a7a"/><path d="M2 7 H14 M2 10 H14 M2 13 H14 M6 4 V14 M10 4 V14" stroke="#9a9a9a" stroke-width="0.7"/><path d="M13 8 H5" stroke="#2a5ad0" stroke-width="3"/><path d="M6 4 L1.5 8 L6 12 Z" fill="#2a5ad0"/></g><g transform="translate(467,1096)"><rect x="1.5" y="1.5" width="13" height="13" fill="#f4f4f4" stroke="#444"/><rect x="1.5" y="1.5" width="13" height="2.5" fill="#3a4a7a"/><path d="M2 7 H14 M2 10 H14 M2 13 H14 M6 4 V14 M10 4 V14" stroke="#9a9a9a" stroke-width="0.7"/><path d="M3 8 H11" stroke="#2a5ad0" stroke-width="3"/><path d="M10 4 L14.5 8 L10 12 Z" fill="#2a5ad0"/></g><g transform="translate(482,1096)"><path d="M8 1 V16" stroke="#a8aeba"/><path d="M9 1 V16" stroke="#fff"/></g><g transform="translate(497,1096)"><rect x="2.5" y="1.5" width="9" height="5" fill="#fff" stroke="#334"/><path d="M6 3 Q13 6 9 14" stroke="#2a4ab0" stroke-width="1.8" fill="none"/><path d="M6 12 L9 15 L11 11" fill="#2a4ab0"/></g><g transform="translate(519,1096)"><rect x="4.5" y="1.5" width="9" height="5" fill="#fff" stroke="#334"/><path d="M10 3 Q3 6 7 14" stroke="#2a4ab0" stroke-width="1.8" fill="none"/><path d="M10 12 L7 15 L5 11" fill="#2a4ab0"/></g><g transform="translate(541,1096)"><path d="M4 12 A5.5 5.5 0 0 1 8 2.5" stroke="#a8b4d0" stroke-width="2.2" fill="none"/><path d="M12 4 A5.5 5.5 0 0 1 8 13.5" stroke="#a8b4d0" stroke-width="2.2" fill="none"/></g><g transform="translate(555,1096)"><path d="M8 1 V16" stroke="#a8aeba"/><path d="M9 1 V16" stroke="#fff"/></g><g transform="translate(571,1096)"><rect x="1.5" y="1.5" width="13" height="13" fill="#f4f4f4" stroke="#9aa0aa"/><rect x="1.5" y="1.5" width="13" height="2.5" fill="#a8b8d8"/><path d="M2 7 H14 M2 10 H14 M2 13 H14 M6 4 V14 M10 4 V14" stroke="#c8ccd4" stroke-width="0.7"/><path d="M8 4 V13 M3.5 8.5 H12.5" stroke="#a8b8e8" stroke-width="3"/></g><g transform="translate(593,1096)"><rect x="1.5" y="1.5" width="13" height="13" fill="#f4f4f4" stroke="#9aa0aa"/><rect x="1.5" y="1.5" width="13" height="2.5" fill="#a8b8d8"/><path d="M2 7 H14 M2 10 H14 M2 13 H14 M6 4 V14 M10 4 V14" stroke="#c8ccd4" stroke-width="0.7"/><path d="M4 5 L12 13 M12 5 L4 13" stroke="#a8b8e8" stroke-width="2.5"/></g><g transform="translate(615,1096)"><rect x="1.5" y="1.5" width="13" height="13" fill="#f4f4f4" stroke="#9aa0aa"/><rect x="1.5" y="1.5" width="13" height="2.5" fill="#a8b8d8"/><path d="M2 7 H14 M2 10 H14 M2 13 H14 M6 4 V14 M10 4 V14" stroke="#c8ccd4" stroke-width="0.7"/><circle cx="8" cy="6" r="1.8" fill="#a8b8e8"/><circle cx="8" cy="11" r="1.8" fill="#a8b8e8"/></g><g transform="translate(629.5,1096)"><path d="M8 1 V16" stroke="#a8aeba"/><path d="M9 1 V16" stroke="#fff"/></g><g transform="translate(645,1096)"><rect x="1.5" y="1.5" width="13" height="13" fill="#f4f4f4" stroke="#9aa0aa"/><rect x="1.5" y="1.5" width="13" height="2.5" fill="#a8b8d8"/><path d="M2 7 H14 M2 10 H14 M2 13 H14 M6 4 V14 M10 4 V14" stroke="#c8ccd4" stroke-width="0.7"/><path d="M3 3 L13 14 M13 3 L3 14" stroke="#98a8d8" stroke-width="1.5"/></g><g transform="translate(659.5,1096)"><path d="M8 1 V16" stroke="#a8aeba"/><path d="M9 1 V16" stroke="#fff"/></g><g transform="translate(676,1096)"><rect x="1.5" y="1" width="5" height="14" fill="#ddd" stroke="#bbb"/><path d="M5 3 L14 13 M14 3 L5 13" stroke="#d01818" stroke-width="2.2"/></g><g transform="translate(696,1096)"><rect x="1.5" y="1" width="5" height="14" fill="#ddd" stroke="#bbb"/><path d="M15 8 H6" stroke="#d01818" stroke-width="1.8"/><path d="M7 5 L2 8 L7 11 Z" fill="#d01818"/><rect x="10" y="6" width="5" height="4" fill="#c8c0b8"/></g><g transform="translate(719,1096)"><rect x="1.5" y="1" width="5" height="14" fill="#ddd" stroke="#bbb"/><path d="M5 8 H12" stroke="#d01818" stroke-width="1.8"/><path d="M11 5 L16 8 L11 11 Z" fill="#d01818"/></g><g transform="translate(734,1096)"><path d="M8 1 V16" stroke="#a8aeba"/><path d="M9 1 V16" stroke="#fff"/></g><g transform="translate(749,1096)"><rect x="1.5" y="1.5" width="13" height="13" fill="#fff" stroke="#444"/><rect x="2" y="2" width="12" height="6" fill="#f4e870"/><path d="M2 4.5 H14 M2 8 H14 M6 2 V8 M10 2 V8" stroke="#a09030" stroke-width="0.7"/></g><g transform="translate(771,1096)"><rect x="1.5" y="1.5" width="13" height="13" fill="#fff" stroke="#666"/><path d="M2 4 H14 M2 7 H14 M2 10 H14 M2 13 H14" stroke="#4a5ad0" stroke-width="1.3"/></g><g transform="translate(793,1096)"><rect x="1.5" y="1.5" width="13" height="13" fill="#f8f4d8" stroke="#b8b090"/><path d="M2 11 H14 M6 4 V14 M10 4 V14" stroke="#d8d0a0"/><path d="M6 12 L13 2" stroke="#d8c040" stroke-width="2"/></g><g transform="translate(807.5,1096)"><path d="M8 1 V16" stroke="#a8aeba"/><path d="M9 1 V16" stroke="#fff"/></g><g transform="translate(823,1096)"><rect x="2.5" y="6.5" width="11" height="9" fill="#fff" stroke="#334"/><path d="M3 10 H13 M3 13 H13" stroke="#888"/><path d="M1 5 Q5 1 11 3 L14 4 L13 7 L5 8 Z" fill="#c89a70" stroke="#5a3a20" stroke-width="0.7"/><path d="M11 8 V14 M9 12 L11 15 L13 12" stroke="#2a5ad0" stroke-width="1.5" fill="none"/></g><g transform="translate(837.5,1096)"><path d="M8 1 V16" stroke="#a8aeba"/><path d="M9 1 V16" stroke="#fff"/></g><g transform="translate(853,1096)"><circle cx="5" cy="9" r="3" fill="none" stroke="#3a5080" stroke-width="1.6"/><circle cx="11" cy="10" r="3" fill="none" stroke="#3a5080" stroke-width="1.6"/><path d="M2 6 L5 3 M14 7 L15 4 M8 9 H8.5" stroke="#3a5080" stroke-width="1.4"/></g><g transform="translate(867.5,1096)"><path d="M8 1 V16" stroke="#a8aeba"/><path d="M9 1 V16" stroke="#fff"/></g><g transform="translate(883,1096)"><rect x="1.5" y="1.5" width="13" height="13" fill="#e8f4e8" stroke="#1a7a2a" stroke-width="1.5"/><path d="M4 4 L12 12 M12 4 L4 12" stroke="#1a9a3a" stroke-width="2.5"/></g><g transform="translate(897.5,1096)"><path d="M8 1 V16" stroke="#a8aeba"/><path d="M9 1 V16" stroke="#fff"/></g><g transform="translate(913,1096)"><path d="M1 5 L4 2 H15 V11 L12 14 H1 Z" fill="#4a4a4a" stroke="#222"/><rect x="2.5" y="5.5" width="8" height="3" fill="#ddd"/><path d="M3 11 H11" stroke="#ddd" stroke-dasharray="1 1"/></g><g transform="translate(927.5,1096)"><path d="M8 1 V16" stroke="#a8aeba"/><path d="M9 1 V16" stroke="#fff"/></g><g transform="translate(943,1096)"><rect x="5.5" y="1.5" width="10" height="7" fill="#fff" stroke="#334"/><rect x="5.5" y="1.5" width="10" height="2" fill="#3a5ab0"/><text x="0" y="15" font-size="7" font-style="italic" font-weight="bold" font-family="Liberation Serif" fill="#111">ab=</text></g><g transform="translate(965,1096)"><text x="1" y="13" font-size="13" font-style="italic" font-family="Liberation Serif" fill="#8a8a9a">f</text><text x="7" y="14" font-size="9" font-style="italic" font-family="Liberation Serif" fill="#8a8a9a">x</text></g><g transform="translate(987,1096)"><text x="3" y="13" font-size="13" font-style="italic" font-family="Liberation Serif" fill="#8a8a9a">f</text><text x="9" y="15" font-size="8" font-style="italic" font-family="Liberation Serif" fill="#8a8a9a">x</text><path d="M1 1 L7 7 M7 1 L1 7" stroke="#e08080" stroke-width="1.2"/></g></svg><div style="position:absolute;left:315px;top:1117px;width:2080px;height:1.5px;background:#6a6a6a"></div><div style="position:absolute;left:315px;top:1117px;width:2px;height:266px;background:#6a6a6a"></div><div style="position:absolute;left:2393px;top:1117px;width:2px;height:266px;background:#6a6a6a"></div><div style="position:absolute;left:317px;top:1119px;width:2076px;height:264px;background:#f0f0f0"></div><div style="position:absolute;left:317px;top:1118.5px;width:2076px;height:1.5px;background:#fafafa"></div><div style="position:absolute;left:315px;top:1382px;width:2080px;height:2px;background:#6a6a6a"></div><svg style="left:317px;top:1119px" width="2076" height="264" viewBox="317 1119 2076 264"><rect x="319" y="1120" width="2056.5" height="48" fill="#f0f0f0"/><rect x="363.5" y="1120.5" width="191.5" height="13" fill="#0078d7"/><rect x="555" y="1120.5" width="72.5" height="13" fill="#e0e0e0"/><rect x="627.5" y="1120.5" width="222.0" height="13" fill="#e0e0e0"/><rect x="849.5" y="1120.5" width="54.0" height="13" fill="#e0e0e0"/><rect x="903.5" y="1120.5" width="60.0" height="13" fill="#e0e0e0"/><rect x="963.5" y="1120.5" width="60.0" height="13" fill="#e0e0e0"/><rect x="1023.5" y="1120.5" width="59.5" height="13" fill="#e0e0e0"/><rect x="1083" y="1120.5" width="1292.5" height="13" fill="#e0e0e0"/><rect x="319" y="1120" width="44.5" height="47" fill="#e6e6e6"/><rect x="363.5" y="1167.8" width="191.5" height="16" fill="#fff"/><rect x="555" y="1167.8" width="72.5" height="16" fill="#fff"/><rect x="627.5" y="1167.8" width="222.0" height="16" fill="#fff"/><rect x="849.5" y="1167.8" width="54.0" height="16" fill="#fff"/><rect x="1083" y="1167.8" width="1292.5" height="16" fill="#fff"/><rect x="319" y="1168.3" width="44.0" height="15" fill="#0078d7"/><rect x="363.5" y="1183.8" width="191.5" height="16" fill="#fff"/><rect x="555" y="1183.8" width="72.5" height="16" fill="#fff"/><rect x="627.5" y="1183.8" width="222.0" height="16" fill="#fff"/><rect x="849.5" y="1183.8" width="54.0" height="16" fill="#fff"/><rect x="1083" y="1183.8" width="1292.5" height="16" fill="#fff"/><rect x="319" y="1184.3" width="44.0" height="15" fill="#e0e0e0"/><path d="M319.5 1199.3 H363.0 V1184.3" stroke="#6a6a6a" stroke-width="1.6" fill="none"/><path d="M319.5 1198.8 V1184.3 H362.5" stroke="#fafafa" stroke-width="1" fill="none"/><rect x="363.5" y="1199.8" width="191.5" height="16" fill="#fff"/><rect x="319" y="1200.3" width="44.0" height="15" fill="#e0e0e0"/><path d="M319.5 1215.3 H363.0 V1200.3" stroke="#6a6a6a" stroke-width="1.6" fill="none"/><path d="M319.5 1214.8 V1200.3 H362.5" stroke="#fafafa" stroke-width="1" fill="none"/><rect x="363.5" y="1215.8" width="191.5" height="16" fill="#fff"/><rect x="319" y="1216.3" width="44.0" height="15" fill="#e0e0e0"/><path d="M319.5 1231.3 H363.0 V1216.3" stroke="#6a6a6a" stroke-width="1.6" fill="none"/><path d="M319.5 1230.8 V1216.3 H362.5" stroke="#fafafa" stroke-width="1" fill="none"/><rect x="363.5" y="1231.8" width="191.5" height="16" fill="#fff"/><rect x="319" y="1232.3" width="44.0" height="15" fill="#e0e0e0"/><path d="M319.5 1247.3 H363.0 V1232.3" stroke="#6a6a6a" stroke-width="1.6" fill="none"/><path d="M319.5 1246.8 V1232.3 H362.5" stroke="#fafafa" stroke-width="1" fill="none"/><rect x="363.5" y="1247.8" width="191.5" height="16" fill="#fff"/><rect x="319" y="1248.3" width="44.0" height="15" fill="#e0e0e0"/><path d="M319.5 1263.3 H363.0 V1248.3" stroke="#6a6a6a" stroke-width="1.6" fill="none"/><path d="M319.5 1262.8 V1248.3 H362.5" stroke="#fafafa" stroke-width="1" fill="none"/><rect x="363.5" y="1263.8" width="191.5" height="16" fill="#fff"/><rect x="319" y="1264.3" width="44.0" height="15" fill="#e0e0e0"/><path d="M319.5 1279.3 H363.0 V1264.3" stroke="#6a6a6a" stroke-width="1.6" fill="none"/><path d="M319.5 1278.8 V1264.3 H362.5" stroke="#fafafa" stroke-width="1" fill="none"/><rect x="363.5" y="1279.8" width="191.5" height="16" fill="#fff"/><rect x="319" y="1280.3" width="44.0" height="15" fill="#e0e0e0"/><path d="M319.5 1295.3 H363.0 V1280.3" stroke="#6a6a6a" stroke-width="1.6" fill="none"/><path d="M319.5 1294.8 V1280.3 H362.5" stroke="#fafafa" stroke-width="1" fill="none"/><rect x="363.5" y="1295.8" width="191.5" height="16" fill="#fff"/><rect x="319" y="1296.3" width="44.0" height="15" fill="#e0e0e0"/><path d="M319.5 1311.3 H363.0 V1296.3" stroke="#6a6a6a" stroke-width="1.6" fill="none"/><path d="M319.5 1310.8 V1296.3 H362.5" stroke="#fafafa" stroke-width="1" fill="none"/><rect x="363.5" y="1311.8" width="191.5" height="16" fill="#fff"/><rect x="319" y="1312.3" width="44.0" height="15" fill="#e0e0e0"/><path d="M319.5 1327.3 H363.0 V1312.3" stroke="#6a6a6a" stroke-width="1.6" fill="none"/><path d="M319.5 1326.8 V1312.3 H362.5" stroke="#fafafa" stroke-width="1" fill="none"/><rect x="363.5" y="1327.8" width="191.5" height="16" fill="#fff"/><rect x="319" y="1328.3" width="44.0" height="15" fill="#e0e0e0"/><path d="M319.5 1343.3 H363.0 V1328.3" stroke="#6a6a6a" stroke-width="1.6" fill="none"/><path d="M319.5 1342.8 V1328.3 H362.5" stroke="#fafafa" stroke-width="1" fill="none"/><rect x="363.5" y="1343.8" width="191.5" height="16" fill="#fff"/><rect x="319" y="1344.3" width="44.0" height="15" fill="#e0e0e0"/><path d="M319.5 1359.3 H363.0 V1344.3" stroke="#6a6a6a" stroke-width="1.6" fill="none"/><path d="M319.5 1358.8 V1344.3 H362.5" stroke="#fafafa" stroke-width="1" fill="none"/><rect x="363.5" y="1359.8" width="191.5" height="16" fill="#fff"/><rect x="319" y="1360.3" width="44.0" height="15" fill="#e0e0e0"/><path d="M319.5 1375.3 H363.0 V1360.3" stroke="#6a6a6a" stroke-width="1.6" fill="none"/><path d="M319.5 1374.8 V1360.3 H362.5" stroke="#fafafa" stroke-width="1" fill="none"/><path d="M363.5 1167.3 H2375.5" stroke="#a3a3a3" stroke-width="1.4"/><path d="M363.5 1183.3 H2375.5" stroke="#a3a3a3" stroke-width="1.4"/><path d="M363.5 1199.3 H2375.5" stroke="#a3a3a3" stroke-width="1.4"/><path d="M363.5 1215.3 H2375.5" stroke="#a3a3a3" stroke-width="1.4"/><path d="M363.5 1231.3 H2375.5" stroke="#a3a3a3" stroke-width="1.4"/><path d="M363.5 1247.3 H2375.5" stroke="#a3a3a3" stroke-width="1.4"/><path d="M363.5 1263.3 H2375.5" stroke="#a3a3a3" stroke-width="1.4"/><path d="M363.5 1279.3 H2375.5" stroke="#a3a3a3" stroke-width="1.4"/><path d="M363.5 1295.3 H2375.5" stroke="#a3a3a3" stroke-width="1.4"/><path d="M363.5 1311.3 H2375.5" stroke="#a3a3a3" stroke-width="1.4"/><path d="M363.5 1327.3 H2375.5" stroke="#a3a3a3" stroke-width="1.4"/><path d="M363.5 1343.3 H2375.5" stroke="#a3a3a3" stroke-width="1.4"/><path d="M363.5 1359.3 H2375.5" stroke="#a3a3a3" stroke-width="1.4"/><path d="M363.5 1375.3 H2375.5" stroke="#a3a3a3" stroke-width="1.4"/><path d="M363.5 1134 H2375.5" stroke="#6a6a6a" stroke-width="1.6"/><path d="M363.5 1120.2 H2375.5" stroke="#6a6a6a" stroke-width="1.2"/><path d="M319 1120.2 H363.5" stroke="#6a6a6a" stroke-width="1.2"/><path d="M363.5 1120 V1375.8" stroke="#a3a3a3" stroke-width="1.4"/><path d="M363.5 1120.5 V1134" stroke="#6a6a6a" stroke-width="1.6"/><path d="M555 1120 V1375.8" stroke="#a3a3a3" stroke-width="1.4"/><path d="M555 1120.5 V1134" stroke="#6a6a6a" stroke-width="1.6"/><path d="M627.5 1120 V1375.8" stroke="#a3a3a3" stroke-width="1.4"/><path d="M627.5 1120.5 V1134" stroke="#6a6a6a" stroke-width="1.6"/><path d="M849.5 1120 V1375.8" stroke="#a3a3a3" stroke-width="1.4"/><path d="M849.5 1120.5 V1134" stroke="#6a6a6a" stroke-width="1.6"/><path d="M903.5 1120 V1134 M903.5 1151 V1375.8" stroke="#a3a3a3" stroke-width="1.4"/><path d="M903.5 1120.5 V1134" stroke="#6a6a6a" stroke-width="1.6"/><path d="M963.5 1120 V1134 M963.5 1151 V1375.8" stroke="#a3a3a3" stroke-width="1.4"/><path d="M963.5 1120.5 V1134" stroke="#6a6a6a" stroke-width="1.6"/><path d="M1023.5 1120 V1134 M1023.5 1151 V1375.8" stroke="#a3a3a3" stroke-width="1.4"/><path d="M1023.5 1120.5 V1134" stroke="#6a6a6a" stroke-width="1.6"/><path d="M1083 1120 V1375.8" stroke="#a3a3a3" stroke-width="1.4"/><path d="M1083 1120.5 V1134" stroke="#6a6a6a" stroke-width="1.6"/><path d="M2375.5 1120 V1375.8" stroke="#a3a3a3" stroke-width="1.4"/><path d="M2375.5 1120.5 V1134" stroke="#6a6a6a" stroke-width="1.6"/><path d="M319 1120 V1375.8" stroke="#8a8a8a" stroke-width="1"/><path d="M2375.5 1120 V1375.8" stroke="#6a6a6a" stroke-width="1.4"/><rect x="365.0" y="1168.3" width="188.5" height="14" fill="none" stroke="#000" stroke-width="1" stroke-dasharray="1 1"/><path d="M597.5 1171.8 V1181.3 H588" stroke="#000" stroke-width="1.2" fill="none"/><rect x="586.5" y="1170.3" width="10" height="10" fill="#fff" stroke="#000" stroke-width="1.3"/><path d="M588.5 1175.3 L590.8 1178.3 L595 1171.8" stroke="#000" stroke-width="1.8" fill="none"/><path d="M882.5 1171.8 V1181.3 H873" stroke="#000" stroke-width="1.2" fill="none"/><rect x="871.5" y="1170.3" width="10" height="10" fill="#fff" stroke="#000" stroke-width="1.3"/><path d="M597.5 1187.8 V1197.3 H588" stroke="#000" stroke-width="1.2" fill="none"/><rect x="586.5" y="1186.3" width="10" height="10" fill="#fff" stroke="#000" stroke-width="1.3"/><path d="M588.5 1191.3 L590.8 1194.3 L595 1187.8" stroke="#000" stroke-width="1.8" fill="none"/><path d="M882.5 1187.8 V1197.3 H873" stroke="#000" stroke-width="1.2" fill="none"/><rect x="871.5" y="1186.3" width="10" height="10" fill="#fff" stroke="#000" stroke-width="1.3"/><rect x="629" y="1170.8" width="25" height="10" fill="#0000ff"/><rect x="629" y="1186.8" width="25" height="10" fill="#000"/><rect x="2377" y="1121" width="15" height="254" fill="#f0f0f0"/><rect x="2377" y="1137" width="14" height="17" fill="#cdcdcd"/><path d="M2381 1131 L2384.5 1127.5 L2388 1131" stroke="#505050" stroke-width="1.8" fill="none"/><path d="M2381 1365 L2384.5 1368.5 L2388 1365" stroke="#505050" stroke-width="1.8" fill="none"/><path d="M2392 1121 V1375" stroke="#a0a0a0" stroke-width="1"/></svg><div class="t" style="left:309px;width:300px;text-align:center;top:1122.69px;font-size:11px;line-height:11px;color:#fff;transform:scaleX(1);">A</div><div class="t" style="left:441px;width:300px;text-align:center;top:1122.69px;font-size:11px;line-height:11px;color:#000;transform:scaleX(1);">B</div><div class="t" style="left:588px;width:300px;text-align:center;top:1122.69px;font-size:11px;line-height:11px;color:#000;transform:scaleX(1);">C</div><div class="t" style="left:726px;width:300px;text-align:center;top:1122.69px;font-size:11px;line-height:11px;color:#000;transform:scaleX(1);">D</div><div class="t" style="left:783px;width:300px;text-align:center;top:1122.69px;font-size:11px;line-height:11px;color:#000;transform:scaleX(1);">E</div><div class="t" style="left:843px;width:300px;text-align:center;top:1122.69px;font-size:11px;line-height:11px;color:#000;transform:scaleX(1);">F</div><div class="t" style="left:903px;width:300px;text-align:center;top:1122.69px;font-size:11px;line-height:11px;color:#000;transform:scaleX(1);">G</div><div class="t" style="left:1579px;width:300px;text-align:center;top:1122.69px;font-size:11px;line-height:11px;color:#000;transform:scaleX(1);">H</div><div class="t" style="left:191px;width:300px;text-align:center;top:1136.99px;font-size:11px;line-height:11px;color:#000;transform:scaleX(0.95);">Last-</div><div class="t" style="left:191px;width:300px;text-align:center;top:1149.69px;font-size:11px;line-height:11px;color:#000;transform:scaleX(0.95);">fall</div><div class="t" style="left:309px;width:300px;text-align:center;top:1136.99px;font-size:11px;line-height:11px;color:#000;transform:scaleX(0.95);">Lastfall-</div><div class="t" style="left:309px;width:300px;text-align:center;top:1152.69px;font-size:11px;line-height:11px;color:#000;transform:scaleX(0.95);">Beschreibung</div><div class="t" style="left:441px;width:300px;text-align:center;top:1152.69px;font-size:11px;line-height:11px;color:#000;transform:scaleX(0.95);">Zu berechnen</div><div class="t" style="left:588px;width:300px;text-align:center;top:1136.99px;font-size:11px;line-height:11px;color:#000;transform:scaleX(0.95);">EN 1990 | DIN</div><div class="t" style="left:588px;width:300px;text-align:center;top:1152.69px;font-size:11px;line-height:11px;color:#000;transform:scaleX(0.95);">Einwirkungskategorie</div><div class="t" style="left:815px;width:300px;text-align:center;top:1136.99px;font-size:11px;line-height:11px;color:#000;transform:scaleX(0.95);">Eigengewicht  -  Faktor in Richtung</div><div class="t" style="left:726px;width:300px;text-align:center;top:1152.69px;font-size:11px;line-height:11px;color:#000;transform:scaleX(0.95);">Aktiv</div><div class="t" style="left:783px;width:300px;text-align:center;top:1152.69px;font-size:11px;line-height:11px;color:#000;transform:scaleX(0.95);">X</div><div class="t" style="left:843px;width:300px;text-align:center;top:1152.69px;font-size:11px;line-height:11px;color:#000;transform:scaleX(0.95);">Y</div><div class="t" style="left:903px;width:300px;text-align:center;top:1152.69px;font-size:11px;line-height:11px;color:#000;transform:scaleX(0.95);">Z</div><div class="t" style="left:1579px;width:300px;text-align:center;top:1152.69px;font-size:11px;line-height:11px;color:#000;transform:scaleX(0.95);">Kommentar</div><div class="t" style="left:191px;width:300px;text-align:center;top:1170.49px;font-size:11px;line-height:11px;color:#fff;transform:scaleX(1);">LF1</div><div class="t" style="left:191px;width:300px;text-align:center;top:1186.49px;font-size:11px;line-height:11px;color:#000;transform:scaleX(1);">LF2</div><div class="t" style="left:191px;width:300px;text-align:center;top:1202.49px;font-size:11px;line-height:11px;color:#000;transform:scaleX(1);">LF3</div><div class="t" style="left:191px;width:300px;text-align:center;top:1218.49px;font-size:11px;line-height:11px;color:#000;transform:scaleX(1);">LF4</div><div class="t" style="left:191px;width:300px;text-align:center;top:1234.49px;font-size:11px;line-height:11px;color:#000;transform:scaleX(1);">LF5</div><div class="t" style="left:191px;width:300px;text-align:center;top:1250.49px;font-size:11px;line-height:11px;color:#000;transform:scaleX(1);">LF6</div><div class="t" style="left:191px;width:300px;text-align:center;top:1266.49px;font-size:11px;line-height:11px;color:#000;transform:scaleX(1);">LF7</div><div class="t" style="left:191px;width:300px;text-align:center;top:1282.49px;font-size:11px;line-height:11px;color:#000;transform:scaleX(1);">LF8</div><div class="t" style="left:191px;width:300px;text-align:center;top:1298.49px;font-size:11px;line-height:11px;color:#000;transform:scaleX(1);">LF9</div><div class="t" style="left:191px;width:300px;text-align:center;top:1314.49px;font-size:11px;line-height:11px;color:#000;transform:scaleX(1);">LF10</div><div class="t" style="left:191px;width:300px;text-align:center;top:1330.49px;font-size:11px;line-height:11px;color:#000;transform:scaleX(1);">LF11</div><div class="t" style="left:191px;width:300px;text-align:center;top:1346.49px;font-size:11px;line-height:11px;color:#000;transform:scaleX(1);">LF12</div><div class="t" style="left:191px;width:300px;text-align:center;top:1362.49px;font-size:11px;line-height:11px;color:#000;transform:scaleX(1);">LF13</div><div class="t" style="left:368.00px;top:1170.99px;font-size:11px;line-height:11px;color:#000;transform:scaleX(0.95);transform-origin:left;">Flächenbelastung</div><div class="t" style="left:368.00px;top:1186.99px;font-size:11px;line-height:11px;color:#000;transform:scaleX(0.95);transform-origin:left;">Punktbelastung</div><div class="t" style="left:659.00px;top:1170.49px;font-size:11px;line-height:11px;color:#000;transform:scaleX(0.95);transform-origin:left;">Formfindung</div><div class="t" style="left:659.00px;top:1186.49px;font-size:11px;line-height:11px;color:#000;transform:scaleX(0.95);transform-origin:left;">Ständig</div><div class="t" style="left:491.5px;width:300px;text-align:center;top:1171.68px;font-size:9px;line-height:9px;color:#fff;transform:scaleX(1);">F F</div><div class="t" style="left:491.5px;width:300px;text-align:center;top:1187.68px;font-size:9px;line-height:9px;color:#fff;transform:scaleX(1);">G</div><div style="position:absolute;left:317px;top:1384px;width:2079px;height:35px;background:#f0f0f0"></div><div style="position:absolute;left:315px;top:1384px;width:2px;height:35px;background:#f0f0f0"></div><svg style="left:315px;top:1382px" width="300" height="20" viewBox="315 1382 300 20"><path d="M364 1383.5 H2000" stroke="#6a6a6a" stroke-width="1.5"/><path d="M364.5 1383 V1397 L367 1399.5 H460 L463.5 1397 V1383 Z" fill="#e3e3e3" stroke="#6a6a6a" stroke-width="1.2"/><path d="M464.5 1383 V1397 L467 1399.5 H580 L583.5 1397 V1383 Z" fill="#e3e3e3" stroke="#6a6a6a" stroke-width="1.2"/><path d="M316 1383 V1397 L319 1399.5 H360 L363.5 1397 V1383" fill="#f0f0f0" stroke="#6a6a6a" stroke-width="1.2"/></svg><div style="position:absolute;left:583px;top:1383px;width:1810px;height:1.5px;background:#6a6a6a"></div><div style="position:absolute;left:583px;top:1400px;width:1810px;height:1px;background:#dcdcdc"></div><div class="t" style="left:319.00px;top:1385.69px;font-size:11px;line-height:11px;color:#000;transform:scaleX(0.95);transform-origin:left;">Lastfälle</div><div class="t" style="left:368.00px;top:1386.29px;font-size:11px;line-height:11px;color:#000;transform:scaleX(0.95);transform-origin:left;">Lastkombinationen</div><div class="t" style="left:468.00px;top:1386.29px;font-size:11px;line-height:11px;color:#000;transform:scaleX(0.95);transform-origin:left;">Ergebniskombinationen</div><svg style="left:620px;top:1100px" width="100" height="80" viewBox="620 1100 100 80"><defs><filter id="shblur2" x="-50%" y="-50%" width="200%" height="200%"><feGaussianBlur stdDeviation="1.8"/></filter></defs><g opacity="0.28" transform="translate(2,3)" filter="url(#shblur2)"><path d="M691.6 1116.7 L663.5 1145.4" stroke-width="10" stroke-linecap="round" stroke="#000"/><path d="M645.9 1163.1 L656.4 1132 L676.8 1152.6 Z" fill="#000"/></g><path d="M691.6 1116.7 L663.5 1145.4" stroke-width="10" stroke-linecap="round" stroke="#e84a42"/><path d="M645.9 1163.1 L656.4 1132 L676.8 1152.6 Z" fill="#e84a42"/></svg><div style="position:absolute;left:0px;top:1419px;width:2396px;height:21px;background:linear-gradient(#e6e9ef,#c9ced8 45%,#b3b9c4)"></div><div class="t" style="left:4.00px;top:1425.69px;font-size:11px;line-height:11px;color:#333;transform:scaleX(0.93);transform-origin:left">Arbeitsebene</div><div style="position:absolute;left:1631px;top:1421px;width:35px;height:17px;border:1px solid #222;border-right-color:#f0f2f6;border-bottom-color:#f0f2f6"></div><div class="t" style="left:1633.00px;top:1424.77px;font-size:11.5px;line-height:11.5px;color:#222;transform:scaleX(0.95);transform-origin:left">FANG</div><div style="position:absolute;left:1669px;top:1421px;width:46px;height:17px;border:1px solid #f4f6fa;border-right-color:#8a8f98;border-bottom-color:#8a8f98"></div><div class="t" style="left:1671.00px;top:1423.77px;font-size:11.5px;line-height:11.5px;color:#222;transform:scaleX(0.95);transform-origin:left">RASTER</div><div style="position:absolute;left:1718px;top:1421px;width:48px;height:17px;border:1px solid #222;border-right-color:#f0f2f6;border-bottom-color:#f0f2f6"></div><div class="t" style="left:1720.00px;top:1424.77px;font-size:11.5px;line-height:11.5px;color:#222;transform:scaleX(0.95);transform-origin:left">KARTES</div><div style="position:absolute;left:1770px;top:1421px;width:44px;height:17px;border:1px solid #222;border-right-color:#f0f2f6;border-bottom-color:#f0f2f6"></div><div class="t" style="left:1772.00px;top:1424.77px;font-size:11.5px;line-height:11.5px;color:#222;transform:scaleX(0.95);transform-origin:left">OFANG</div><div style="position:absolute;left:1818px;top:1421px;width:47px;height:17px;border:1px solid #222;border-right-color:#f0f2f6;border-bottom-color:#f0f2f6"></div><div class="t" style="left:1820.00px;top:1424.77px;font-size:11.5px;line-height:11.5px;color:#222;transform:scaleX(0.95);transform-origin:left">HLINIEN</div><div style="position:absolute;left:1869px;top:1421px;width:26px;height:17px;border:1px solid #222;border-right-color:#f0f2f6;border-bottom-color:#f0f2f6"></div><div class="t" style="left:1871.00px;top:1424.77px;font-size:11.5px;line-height:11.5px;color:#222;transform:scaleX(0.95);transform-origin:left">DXF</div><div class="t" style="left:2000.00px;top:1425.27px;font-size:11.5px;line-height:11.5px;color:#222;transform:scaleX(0.93);transform-origin:left">KS: Globales XYZ</div><div style="position:absolute;left:2087px;top:1422px;width:1px;height:17px;background:#888"></div><div class="t" style="left:2089.00px;top:1425.27px;font-size:11.5px;line-height:11.5px;color:#222;transform:scaleX(0.93);transform-origin:left">Ebene: XY</div><div style="position:absolute;left:2175px;top:1422px;width:1px;height:17px;background:#888"></div><div class="t" style="left:2177.00px;top:1425.27px;font-size:11.5px;line-height:11.5px;color:#222;transform:scaleX(0.9);transform-origin:left">X:  -18867.9 mr</div><div style="position:absolute;left:2249px;top:1422px;width:1px;height:17px;background:#888"></div><div class="t" style="left:2251.00px;top:1425.27px;font-size:11.5px;line-height:11.5px;color:#222;transform:scaleX(0.9);transform-origin:left">Y:  12078.3 mm</div><div style="position:absolute;left:2323px;top:1422px;width:1px;height:17px;background:#888"></div><div class="t" style="left:2325.00px;top:1425.27px;font-size:11.5px;line-height:11.5px;color:#222;transform:scaleX(0.9);transform-origin:left">Z:  0.0 mm</div>
</body></html>
